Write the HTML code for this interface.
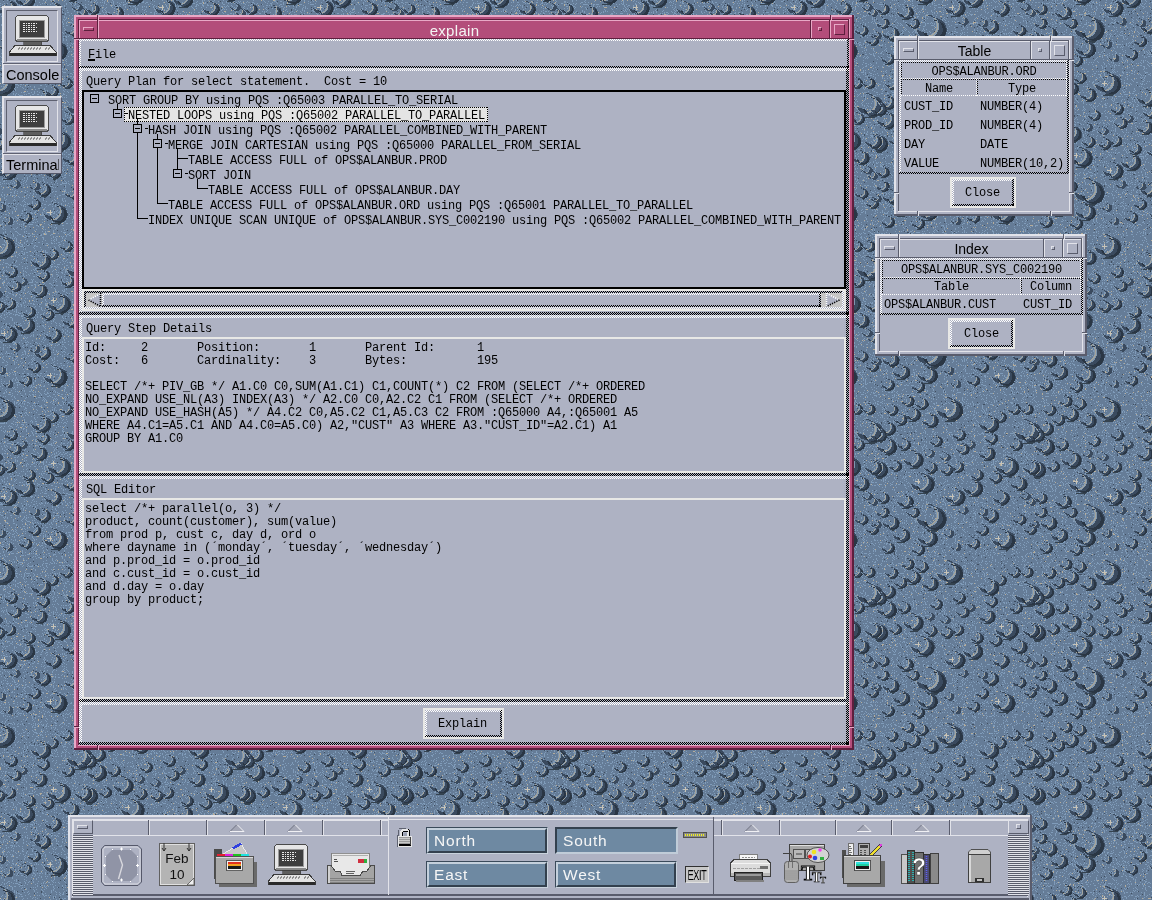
<!DOCTYPE html><html><head><meta charset="utf-8"><style>
*{margin:0;padding:0;box-sizing:border-box}
html,body{width:1152px;height:900px;overflow:hidden;background:#657C97}
body div{position:absolute}
.m{font-family:"Liberation Mono",monospace;font-size:12px;letter-spacing:-0.2px;line-height:13px;white-space:pre;color:#000;will-change:transform}
.s{font-family:"Liberation Sans",sans-serif;white-space:pre;color:#000;will-change:transform}
.hl{background-image:repeating-conic-gradient(#fff 0% 25%, transparent 0% 50%);background-size:2px 2px}
.hd{background-image:repeating-conic-gradient(#000 0% 25%, transparent 0% 50%);background-size:2px 2px}
.g{background:#AEB2C3}
</style></head><body><svg width="1152" height="900" style="position:absolute;left:0;top:0" shape-rendering="crispEdges"><defs><filter id="nz" x="0" y="0" width="100%" height="100%" color-interpolation-filters="sRGB"><feTurbulence type="fractalNoise" baseFrequency="0.9" numOctaves="1" seed="4" result="t"/><feColorMatrix in="t" type="matrix" values="0 0 0 0 0.50  0 0 0 0 0.61  0 0 0 0 0.73  6 0 0 0 -3.15"/><feComponentTransfer><feFuncA type="discrete" tableValues="0 1"/></feComponentTransfer></filter><filter id="nz2" x="0" y="0" width="100%" height="100%" color-interpolation-filters="sRGB"><feTurbulence type="fractalNoise" baseFrequency="0.45" numOctaves="2" seed="9" result="t"/><feColorMatrix in="t" type="matrix" values="0 0 0 0 0.71  0 0 0 0 0.68  0 0 0 0 0.61  0 8 0 0 -5.45"/><feComponentTransfer><feFuncA type="discrete" tableValues="0 1"/></feComponentTransfer></filter><filter id="nz3" x="0" y="0" width="100%" height="100%" color-interpolation-filters="sRGB"><feTurbulence type="fractalNoise" baseFrequency="0.7" numOctaves="1" seed="17" result="t"/><feColorMatrix in="t" type="matrix" values="0 0 0 0 0.25  0 0 0 0 0.31  0 0 0 0 0.38  0 0 6 0 -3.8"/><feComponentTransfer><feFuncA type="discrete" tableValues="0 1"/></feComponentTransfer></filter><pattern id="dr" x="880" y="560" width="158" height="163" patternUnits="userSpaceOnUse"><path d="M65.4 -0.1 L69.3 0.3 L72.8 2.1 L75.3 5.1 L76.6 8.8 L76.4 12.7 L74.8 16.3 L72.0 19.0 L68.4 20.5 L64.5 20.5 L60.8 19.1 L58.0 16.5 L56.3 13.0 L54.0 12.0 L55.7 15.5 L58.6 18.1 L62.2 19.5 L66.1 19.4 L69.7 18.0 L72.5 15.2 L74.1 11.7 L74.3 7.8 L73.0 4.1 L70.5 1.1 L67.0 -0.7 L63.1 -1.1Z" fill="#7F96AE"/><path d="M65.5 0.8 L69.1 1.1 L72.2 2.8 L74.6 5.5 L75.8 8.9 L75.6 12.5 L74.1 15.8 L71.6 18.3 L68.2 19.7 L64.6 19.7 L61.3 18.4 L58.6 16.0 L57.1 12.8 L55.9 12.3 L57.5 15.5 L60.1 17.9 L63.5 19.2 L67.1 19.1 L70.4 17.8 L73.0 15.3 L74.5 12.0 L74.6 8.4 L73.4 5.0 L71.1 2.3 L67.9 0.6 L64.3 0.2Z" fill="#A4A59E"/><path d="M72.2 3.0 L76.0 3.4 L79.5 5.2 L82.1 8.1 L83.4 11.8 L83.2 15.7 L81.6 19.3 L78.8 22.0 L75.2 23.5 L71.3 23.6 L67.6 22.2 L64.7 19.5 L63.0 16.0 L56.3 13.0 L58.0 16.5 L60.8 19.1 L64.5 20.5 L68.4 20.5 L72.0 19.0 L74.8 16.3 L76.4 12.7 L76.6 8.8 L75.3 5.1 L72.8 2.1 L69.3 0.3 L65.4 -0.1Z" fill="#3A4A5E"/><path d="M62.7 24.3 L78.3 21.7 L74.1 25.3 Z" fill="#34424F"/><path d="M73.3 5.6 L76.6 5.9 L79.6 7.4 L81.8 10.0 L82.9 13.1 L82.7 16.4 L81.3 19.4 L79.0 21.8 L75.9 23.0 L72.6 23.1 L69.5 21.9 L67.0 19.7 L65.6 16.7 L62.5 15.3 L63.9 18.3 L66.4 20.5 L69.5 21.7 L72.8 21.6 L75.9 20.4 L78.3 18.1 L79.6 15.0 L79.8 11.7 L78.7 8.6 L76.5 6.0 L73.5 4.5 L70.2 4.2Z" fill="#2A3644"/><path d="M65.4 162.9 L69.3 163.3 L72.8 165.1 L75.3 168.1 L76.6 171.8 L76.4 175.7 L74.8 179.3 L72.0 182.0 L68.4 183.5 L64.5 183.5 L60.8 182.1 L58.0 179.5 L56.3 176.0 L54.0 175.0 L55.7 178.5 L58.6 181.1 L62.2 182.5 L66.1 182.4 L69.7 181.0 L72.5 178.2 L74.1 174.7 L74.3 170.8 L73.0 167.1 L70.5 164.1 L67.0 162.3 L63.1 161.9Z" fill="#7F96AE"/><path d="M65.5 163.8 L69.1 164.1 L72.2 165.8 L74.6 168.5 L75.8 171.9 L75.6 175.5 L74.1 178.8 L71.6 181.3 L68.2 182.7 L64.6 182.7 L61.3 181.4 L58.6 179.0 L57.1 175.8 L55.9 175.3 L57.5 178.5 L60.1 180.9 L63.5 182.2 L67.1 182.1 L70.4 180.8 L73.0 178.3 L74.5 175.0 L74.6 171.4 L73.4 168.0 L71.1 165.3 L67.9 163.6 L64.3 163.2Z" fill="#A4A59E"/><path d="M72.2 166.0 L76.0 166.4 L79.5 168.2 L82.1 171.1 L83.4 174.8 L83.2 178.7 L81.6 182.3 L78.8 185.0 L75.2 186.5 L71.3 186.6 L67.6 185.2 L64.7 182.5 L63.0 179.0 L56.3 176.0 L58.0 179.5 L60.8 182.1 L64.5 183.5 L68.4 183.5 L72.0 182.0 L74.8 179.3 L76.4 175.7 L76.6 171.8 L75.3 168.1 L72.8 165.1 L69.3 163.3 L65.4 162.9Z" fill="#3A4A5E"/><path d="M62.7 187.3 L78.3 184.7 L74.1 188.3 Z" fill="#34424F"/><path d="M73.3 168.6 L76.6 168.9 L79.6 170.4 L81.8 173.0 L82.9 176.1 L82.7 179.4 L81.3 182.4 L79.0 184.8 L75.9 186.0 L72.6 186.1 L69.5 184.9 L67.0 182.7 L65.6 179.7 L62.5 178.3 L63.9 181.3 L66.4 183.5 L69.5 184.7 L72.8 184.6 L75.9 183.4 L78.3 181.1 L79.6 178.0 L79.8 174.7 L78.7 171.6 L76.5 169.0 L73.5 167.5 L70.2 167.2Z" fill="#2A3644"/><path d="M46.5 106.7 L50.8 107.1 L54.7 109.2 L57.6 112.5 L59.1 116.7 L58.9 121.1 L57.1 125.1 L53.9 128.1 L49.8 129.8 L45.5 129.9 L41.3 128.3 L38.1 125.3 L36.2 121.4 L33.6 120.2 L35.5 124.2 L38.8 127.2 L42.9 128.7 L47.3 128.7 L51.3 127.0 L54.5 123.9 L56.3 119.9 L56.5 115.5 L55.0 111.3 L52.2 108.0 L48.3 106.0 L43.9 105.5Z" fill="#7F96AE"/><path d="M46.5 107.6 L50.6 108.0 L54.2 109.9 L56.8 113.0 L58.1 116.8 L58.0 120.8 L56.3 124.5 L53.4 127.3 L49.7 128.9 L45.6 129.0 L41.8 127.5 L38.8 124.8 L37.1 121.1 L35.8 120.6 L37.6 124.2 L40.5 126.9 L44.3 128.4 L48.4 128.3 L52.1 126.8 L55.0 123.9 L56.7 120.3 L56.8 116.2 L55.5 112.4 L52.9 109.3 L49.3 107.5 L45.3 107.1Z" fill="#A4A59E"/><path d="M54.1 110.1 L58.4 110.6 L62.3 112.6 L65.2 115.9 L66.7 120.1 L66.5 124.5 L64.7 128.5 L61.5 131.6 L57.5 133.2 L53.1 133.3 L48.9 131.7 L45.7 128.8 L43.8 124.8 L36.2 121.4 L38.1 125.3 L41.3 128.3 L45.5 129.9 L49.8 129.8 L53.9 128.1 L57.1 125.1 L58.9 121.1 L59.1 116.7 L57.6 112.5 L54.7 109.2 L50.8 107.1 L46.5 106.7Z" fill="#3A4A5E"/><path d="M43.4 134.1 L60.9 131.1 L56.3 135.2 Z" fill="#34424F"/><path d="M55.4 113.0 L59.1 113.4 L62.4 115.1 L64.9 118.0 L66.1 121.5 L65.9 125.2 L64.4 128.7 L61.7 131.3 L58.3 132.7 L54.5 132.7 L51.0 131.4 L48.3 128.9 L46.7 125.5 L43.2 124.0 L44.8 127.3 L47.6 129.8 L51.1 131.2 L54.8 131.1 L58.2 129.7 L60.9 127.1 L62.5 123.7 L62.6 119.9 L61.4 116.4 L58.9 113.6 L55.6 111.9 L51.9 111.5Z" fill="#2A3644"/><path d="M-14.4 22.2 L-10.5 22.6 L-7.0 24.4 L-4.5 27.3 L-3.2 31.0 L-3.4 34.9 L-5.0 38.5 L-7.8 41.2 L-11.4 42.7 L-15.3 42.8 L-18.9 41.4 L-21.8 38.7 L-23.5 35.2 L-25.8 34.2 L-24.1 37.7 L-21.2 40.3 L-17.6 41.7 L-13.7 41.7 L-10.0 40.2 L-7.2 37.4 L-5.6 33.9 L-5.5 30.0 L-6.8 26.3 L-9.3 23.3 L-12.8 21.5 L-16.7 21.1Z" fill="#7F96AE"/><path d="M-14.3 23.0 L-10.7 23.3 L-7.5 25.0 L-5.2 27.7 L-4.0 31.1 L-4.2 34.7 L-5.6 38.0 L-8.2 40.5 L-11.5 41.9 L-15.1 41.9 L-18.5 40.7 L-21.1 38.2 L-22.7 35.0 L-23.9 34.5 L-22.3 37.7 L-19.6 40.1 L-16.3 41.4 L-12.7 41.4 L-9.4 40.0 L-6.8 37.5 L-5.3 34.2 L-5.2 30.6 L-6.3 27.2 L-8.7 24.5 L-11.9 22.8 L-15.5 22.5Z" fill="#A4A59E"/><path d="M-7.6 25.2 L-3.7 25.6 L-0.3 27.4 L2.3 30.4 L3.6 34.0 L3.4 38.0 L1.8 41.5 L-1.0 44.2 L-4.6 45.7 L-8.5 45.8 L-12.2 44.4 L-15.1 41.8 L-16.8 38.2 L-23.5 35.2 L-21.8 38.7 L-18.9 41.4 L-15.3 42.8 L-11.4 42.7 L-7.8 41.2 L-5.0 38.5 L-3.4 34.9 L-3.2 31.0 L-4.5 27.3 L-7.0 24.4 L-10.5 22.6 L-14.4 22.2Z" fill="#3A4A5E"/><path d="M-17.1 46.5 L-1.5 43.9 L-5.7 47.5 Z" fill="#34424F"/><path d="M-6.4 27.8 L-3.1 28.1 L-0.2 29.7 L2.0 32.2 L3.1 35.3 L2.9 38.6 L1.6 41.7 L-0.8 44.0 L-3.9 45.3 L-7.2 45.3 L-10.3 44.1 L-12.8 41.9 L-14.2 38.9 L-17.3 37.5 L-15.9 40.5 L-13.4 42.7 L-10.3 43.9 L-7.0 43.9 L-3.9 42.6 L-1.5 40.3 L-0.2 37.2 L-0.0 33.9 L-1.1 30.8 L-3.3 28.3 L-6.2 26.7 L-9.5 26.4Z" fill="#2A3644"/><path d="M143.6 22.2 L147.5 22.6 L151.0 24.4 L153.5 27.3 L154.8 31.0 L154.6 34.9 L153.0 38.5 L150.2 41.2 L146.6 42.7 L142.7 42.8 L139.1 41.4 L136.2 38.7 L134.5 35.2 L132.2 34.2 L133.9 37.7 L136.8 40.3 L140.4 41.7 L144.3 41.7 L148.0 40.2 L150.8 37.4 L152.4 33.9 L152.5 30.0 L151.2 26.3 L148.7 23.3 L145.2 21.5 L141.3 21.1Z" fill="#7F96AE"/><path d="M143.7 23.0 L147.3 23.3 L150.5 25.0 L152.8 27.7 L154.0 31.1 L153.8 34.7 L152.4 38.0 L149.8 40.5 L146.5 41.9 L142.9 41.9 L139.5 40.7 L136.9 38.2 L135.3 35.0 L134.1 34.5 L135.7 37.7 L138.4 40.1 L141.7 41.4 L145.3 41.4 L148.6 40.0 L151.2 37.5 L152.7 34.2 L152.8 30.6 L151.7 27.2 L149.3 24.5 L146.1 22.8 L142.5 22.5Z" fill="#A4A59E"/><path d="M150.4 25.2 L154.3 25.6 L157.7 27.4 L160.3 30.4 L161.6 34.0 L161.4 38.0 L159.8 41.5 L157.0 44.2 L153.4 45.7 L149.5 45.8 L145.8 44.4 L142.9 41.8 L141.2 38.2 L134.5 35.2 L136.2 38.7 L139.1 41.4 L142.7 42.8 L146.6 42.7 L150.2 41.2 L153.0 38.5 L154.6 34.9 L154.8 31.0 L153.5 27.3 L151.0 24.4 L147.5 22.6 L143.6 22.2Z" fill="#3A4A5E"/><path d="M140.9 46.5 L156.5 43.9 L152.3 47.5 Z" fill="#34424F"/><path d="M151.6 27.8 L154.9 28.1 L157.8 29.7 L160.0 32.2 L161.1 35.3 L160.9 38.6 L159.6 41.7 L157.2 44.0 L154.1 45.3 L150.8 45.3 L147.7 44.1 L145.2 41.9 L143.8 38.9 L140.7 37.5 L142.1 40.5 L144.6 42.7 L147.7 43.9 L151.0 43.9 L154.1 42.6 L156.5 40.3 L157.8 37.2 L158.0 33.9 L156.9 30.8 L154.7 28.3 L151.8 26.7 L148.5 26.4Z" fill="#2A3644"/><path d="M123.4 58.5 L126.9 58.8 L129.9 60.4 L132.1 63.0 L133.2 66.2 L133.1 69.7 L131.7 72.8 L129.2 75.2 L126.1 76.5 L122.7 76.5 L119.5 75.3 L116.9 73.0 L115.5 69.9 L113.4 69.0 L114.9 72.1 L117.5 74.4 L120.7 75.6 L124.1 75.6 L127.2 74.3 L129.7 71.9 L131.1 68.8 L131.2 65.3 L130.1 62.1 L127.9 59.5 L124.8 57.9 L121.4 57.6Z" fill="#7F96AE"/><path d="M123.5 59.2 L126.6 59.5 L129.4 61.0 L131.5 63.4 L132.5 66.3 L132.4 69.5 L131.1 72.4 L128.8 74.6 L125.9 75.8 L122.8 75.8 L119.8 74.7 L117.5 72.6 L116.2 69.7 L115.1 69.3 L116.5 72.1 L118.8 74.2 L121.8 75.4 L124.9 75.3 L127.8 74.1 L130.1 71.9 L131.4 69.0 L131.5 65.9 L130.5 62.9 L128.4 60.5 L125.6 59.1 L122.5 58.8Z" fill="#A4A59E"/><path d="M129.4 61.2 L132.8 61.5 L135.8 63.1 L138.0 65.7 L139.2 68.9 L139.0 72.3 L137.6 75.4 L135.2 77.8 L132.0 79.1 L128.6 79.2 L125.4 78.0 L122.9 75.7 L121.4 72.6 L115.5 69.9 L116.9 73.0 L119.5 75.3 L122.7 76.5 L126.1 76.5 L129.2 75.2 L131.7 72.8 L133.1 69.7 L133.2 66.2 L132.1 63.0 L129.9 60.4 L126.9 58.8 L123.4 58.5Z" fill="#3A4A5E"/><path d="M121.1 79.8 L134.7 77.5 L131.1 80.7 Z" fill="#34424F"/><path d="M130.4 63.4 L133.3 63.7 L135.9 65.1 L137.8 67.3 L138.7 70.0 L138.6 72.9 L137.4 75.6 L135.3 77.6 L132.6 78.7 L129.7 78.7 L127.0 77.7 L124.9 75.8 L123.6 73.1 L120.9 71.9 L122.2 74.5 L124.3 76.5 L127.0 77.5 L129.9 77.5 L132.6 76.4 L134.7 74.4 L135.9 71.7 L136.0 68.8 L135.1 66.0 L133.2 63.8 L130.6 62.5 L127.7 62.2Z" fill="#2A3644"/><path d="M39.0 75.4 L42.4 75.7 L45.4 77.3 L47.7 79.9 L48.8 83.1 L48.7 86.5 L47.3 89.7 L44.8 92.1 L41.6 93.4 L38.2 93.4 L35.0 92.2 L32.5 89.9 L31.0 86.8 L29.0 85.9 L30.5 89.0 L33.0 91.3 L36.2 92.5 L39.6 92.5 L42.8 91.2 L45.2 88.8 L46.6 85.6 L46.8 82.2 L45.7 79.0 L43.4 76.4 L40.4 74.8 L37.0 74.5Z" fill="#7F96AE"/><path d="M39.1 76.1 L42.2 76.4 L45.0 77.9 L47.0 80.3 L48.1 83.2 L47.9 86.4 L46.7 89.3 L44.4 91.4 L41.5 92.6 L38.3 92.7 L35.4 91.6 L33.1 89.4 L31.7 86.6 L30.7 86.2 L32.1 89.0 L34.4 91.1 L37.3 92.2 L40.5 92.2 L43.4 91.0 L45.6 88.8 L46.9 85.9 L47.1 82.8 L46.0 79.8 L44.0 77.4 L41.2 76.0 L38.1 75.7Z" fill="#A4A59E"/><path d="M44.9 78.0 L48.3 78.4 L51.4 80.0 L53.6 82.6 L54.7 85.8 L54.6 89.2 L53.2 92.3 L50.7 94.7 L47.6 96.0 L44.1 96.1 L40.9 94.9 L38.4 92.5 L36.9 89.5 L31.0 86.8 L32.5 89.9 L35.0 92.2 L38.2 93.4 L41.6 93.4 L44.8 92.1 L47.3 89.7 L48.7 86.5 L48.8 83.1 L47.7 79.9 L45.4 77.3 L42.4 75.7 L39.0 75.4Z" fill="#3A4A5E"/><path d="M36.6 96.7 L50.3 94.4 L46.6 97.6 Z" fill="#34424F"/><path d="M45.9 80.3 L48.8 80.6 L51.4 82.0 L53.3 84.2 L54.3 86.9 L54.1 89.8 L53.0 92.5 L50.9 94.5 L48.2 95.6 L45.3 95.6 L42.6 94.6 L40.4 92.6 L39.1 90.0 L36.4 88.8 L37.7 91.4 L39.9 93.4 L42.6 94.4 L45.5 94.4 L48.2 93.3 L50.3 91.2 L51.4 88.6 L51.6 85.7 L50.6 82.9 L48.7 80.7 L46.1 79.4 L43.2 79.1Z" fill="#2A3644"/><path d="M72.2 90.4 L75.1 90.7 L77.7 92.0 L79.6 94.3 L80.6 97.0 L80.4 100.0 L79.2 102.6 L77.1 104.7 L74.4 105.8 L71.5 105.8 L68.7 104.8 L66.6 102.8 L65.3 100.2 L63.6 99.4 L64.9 102.0 L67.0 104.0 L69.8 105.1 L72.7 105.0 L75.4 103.9 L77.5 101.9 L78.7 99.2 L78.8 96.3 L77.9 93.5 L76.0 91.3 L73.4 89.9 L70.4 89.6Z" fill="#7F96AE"/><path d="M72.2 91.0 L74.9 91.3 L77.3 92.5 L79.1 94.6 L79.9 97.1 L79.8 99.8 L78.7 102.3 L76.8 104.2 L74.3 105.2 L71.6 105.2 L69.1 104.3 L67.1 102.4 L65.9 100.0 L65.0 99.6 L66.2 102.1 L68.2 103.9 L70.7 104.8 L73.4 104.8 L75.9 103.8 L77.9 101.9 L79.0 99.4 L79.1 96.7 L78.2 94.2 L76.4 92.1 L74.0 90.9 L71.4 90.6Z" fill="#A4A59E"/><path d="M77.2 92.7 L80.1 93.0 L82.7 94.3 L84.7 96.5 L85.6 99.3 L85.5 102.2 L84.3 104.9 L82.2 107.0 L79.5 108.1 L76.6 108.1 L73.8 107.1 L71.7 105.1 L70.4 102.5 L65.3 100.2 L66.6 102.8 L68.7 104.8 L71.5 105.8 L74.4 105.8 L77.1 104.7 L79.2 102.6 L80.4 100.0 L80.6 97.0 L79.6 94.3 L77.7 92.0 L75.1 90.7 L72.2 90.4Z" fill="#3A4A5E"/><path d="M70.1 108.6 L81.8 106.7 L78.7 109.4 Z" fill="#34424F"/><path d="M78.1 94.6 L80.6 94.9 L82.8 96.0 L84.4 97.9 L85.3 100.3 L85.1 102.8 L84.1 105.0 L82.3 106.8 L80.0 107.7 L77.5 107.8 L75.2 106.9 L73.4 105.2 L72.3 102.9 L70.0 101.9 L71.1 104.1 L72.9 105.8 L75.2 106.7 L77.7 106.7 L80.0 105.7 L81.8 104.0 L82.8 101.7 L82.9 99.2 L82.1 96.9 L80.5 95.0 L78.3 93.8 L75.8 93.6Z" fill="#2A3644"/><path d="M119.9 131.4 L123.3 131.7 L126.3 133.3 L128.6 135.9 L129.7 139.1 L129.5 142.5 L128.1 145.7 L125.7 148.1 L122.5 149.4 L119.1 149.4 L115.9 148.2 L113.4 145.9 L111.9 142.8 L109.9 141.9 L111.4 145.0 L113.9 147.3 L117.1 148.5 L120.5 148.5 L123.7 147.2 L126.1 144.8 L127.5 141.6 L127.7 138.2 L126.6 135.0 L124.3 132.4 L121.3 130.8 L117.9 130.5Z" fill="#7F96AE"/><path d="M120.0 132.1 L123.1 132.4 L125.9 133.9 L127.9 136.3 L129.0 139.2 L128.8 142.4 L127.5 145.3 L125.3 147.4 L122.4 148.6 L119.2 148.7 L116.3 147.6 L114.0 145.4 L112.6 142.6 L111.6 142.2 L113.0 145.0 L115.3 147.1 L118.2 148.2 L121.4 148.2 L124.3 147.0 L126.5 144.8 L127.8 141.9 L128.0 138.8 L126.9 135.8 L124.9 133.4 L122.1 132.0 L119.0 131.7Z" fill="#A4A59E"/><path d="M125.8 134.0 L129.2 134.4 L132.2 136.0 L134.5 138.6 L135.6 141.8 L135.5 145.2 L134.1 148.3 L131.6 150.7 L128.4 152.0 L125.0 152.1 L121.8 150.9 L119.3 148.5 L117.8 145.5 L111.9 142.8 L113.4 145.9 L115.9 148.2 L119.1 149.4 L122.5 149.4 L125.7 148.1 L128.1 145.7 L129.5 142.5 L129.7 139.1 L128.6 135.9 L126.3 133.3 L123.3 131.7 L119.9 131.4Z" fill="#3A4A5E"/><path d="M117.5 152.7 L131.2 150.4 L127.5 153.6 Z" fill="#34424F"/><path d="M126.8 136.3 L129.7 136.6 L132.3 138.0 L134.2 140.2 L135.2 142.9 L135.0 145.8 L133.8 148.5 L131.8 150.5 L129.1 151.6 L126.2 151.6 L123.4 150.6 L121.3 148.6 L120.0 146.0 L117.3 144.8 L118.6 147.4 L120.7 149.4 L123.5 150.4 L126.4 150.4 L129.1 149.3 L131.1 147.2 L132.3 144.6 L132.5 141.7 L131.5 138.9 L129.6 136.7 L127.0 135.4 L124.1 135.1Z" fill="#2A3644"/><path d="M44.6 131.3 L47.5 131.6 L50.1 132.9 L52.0 135.2 L53.0 137.9 L52.9 140.9 L51.7 143.5 L49.6 145.6 L46.9 146.7 L43.9 146.7 L41.2 145.7 L39.0 143.7 L37.8 141.1 L36.0 140.3 L37.3 142.9 L39.5 144.9 L42.2 146.0 L45.1 145.9 L47.9 144.8 L50.0 142.8 L51.2 140.1 L51.3 137.1 L50.3 134.4 L48.4 132.2 L45.8 130.8 L42.9 130.5Z" fill="#7F96AE"/><path d="M44.7 131.9 L47.3 132.2 L49.7 133.4 L51.5 135.5 L52.4 138.0 L52.3 140.7 L51.2 143.2 L49.2 145.0 L46.7 146.1 L44.0 146.1 L41.5 145.2 L39.5 143.3 L38.4 140.9 L37.5 140.5 L38.7 142.9 L40.7 144.8 L43.2 145.7 L45.9 145.7 L48.4 144.7 L50.3 142.8 L51.4 140.3 L51.5 137.6 L50.6 135.1 L48.9 133.0 L46.5 131.8 L43.8 131.5Z" fill="#A4A59E"/><path d="M49.7 133.6 L52.6 133.9 L55.2 135.2 L57.1 137.4 L58.1 140.2 L57.9 143.1 L56.7 145.8 L54.6 147.9 L51.9 149.0 L49.0 149.0 L46.3 148.0 L44.1 146.0 L42.8 143.4 L37.8 141.1 L39.0 143.7 L41.2 145.7 L43.9 146.7 L46.9 146.7 L49.6 145.6 L51.7 143.5 L52.9 140.9 L53.0 137.9 L52.0 135.2 L50.1 132.9 L47.5 131.6 L44.6 131.3Z" fill="#3A4A5E"/><path d="M42.6 149.5 L54.3 147.6 L51.1 150.3 Z" fill="#34424F"/><path d="M50.6 135.5 L53.0 135.8 L55.2 136.9 L56.9 138.8 L57.7 141.2 L57.6 143.6 L56.6 145.9 L54.8 147.7 L52.5 148.6 L50.0 148.6 L47.7 147.8 L45.8 146.1 L44.7 143.8 L42.4 142.8 L43.5 145.0 L45.3 146.7 L47.7 147.6 L50.2 147.6 L52.5 146.6 L54.2 144.9 L55.3 142.6 L55.4 140.1 L54.6 137.8 L52.9 135.9 L50.7 134.7 L48.2 134.5Z" fill="#2A3644"/><path d="M105.9 17.5 L108.9 17.8 L111.5 19.2 L113.4 21.4 L114.3 24.1 L114.2 27.1 L113.0 29.7 L110.9 31.8 L108.2 32.9 L105.3 33.0 L102.5 31.9 L100.4 29.9 L99.1 27.3 L97.4 26.5 L98.6 29.2 L100.8 31.1 L103.5 32.2 L106.5 32.1 L109.2 31.0 L111.3 29.0 L112.5 26.3 L112.6 23.4 L111.7 20.6 L109.7 18.4 L107.1 17.0 L104.2 16.7Z" fill="#7F96AE"/><path d="M106.0 18.1 L108.7 18.4 L111.1 19.6 L112.8 21.7 L113.7 24.2 L113.6 26.9 L112.5 29.4 L110.6 31.3 L108.1 32.3 L105.4 32.3 L102.9 31.4 L100.9 29.6 L99.7 27.1 L98.8 26.7 L100.0 29.2 L102.0 31.0 L104.5 32.0 L107.2 31.9 L109.7 30.9 L111.6 29.0 L112.7 26.5 L112.9 23.8 L112.0 21.3 L110.2 19.3 L107.8 18.0 L105.1 17.7Z" fill="#A4A59E"/><path d="M111.0 19.8 L113.9 20.1 L116.5 21.4 L118.4 23.7 L119.4 26.4 L119.3 29.4 L118.1 32.0 L116.0 34.1 L113.3 35.2 L110.3 35.2 L107.6 34.2 L105.4 32.2 L104.2 29.6 L99.1 27.3 L100.4 29.9 L102.5 31.9 L105.3 33.0 L108.2 32.9 L110.9 31.8 L113.0 29.7 L114.2 27.1 L114.3 24.1 L113.4 21.4 L111.5 19.2 L108.9 17.8 L105.9 17.5Z" fill="#3A4A5E"/><path d="M103.9 35.7 L115.6 33.8 L112.5 36.5 Z" fill="#34424F"/><path d="M111.9 21.7 L114.4 22.0 L116.6 23.1 L118.2 25.0 L119.0 27.4 L118.9 29.9 L117.9 32.1 L116.1 33.9 L113.8 34.8 L111.3 34.9 L109.0 34.0 L107.2 32.3 L106.1 30.1 L103.7 29.0 L104.8 31.3 L106.7 32.9 L109.0 33.8 L111.5 33.8 L113.8 32.8 L115.6 31.1 L116.6 28.8 L116.7 26.3 L115.9 24.0 L114.3 22.1 L112.0 20.9 L109.6 20.7Z" fill="#2A3644"/><path d="M30.4 53.1 L33.3 53.4 L35.9 54.7 L37.8 56.9 L38.8 59.7 L38.7 62.6 L37.5 65.3 L35.3 67.3 L32.6 68.5 L29.7 68.5 L27.0 67.5 L24.8 65.5 L23.5 62.8 L21.8 62.1 L23.1 64.7 L25.3 66.7 L28.0 67.7 L30.9 67.7 L33.6 66.6 L35.7 64.5 L36.9 61.9 L37.1 58.9 L36.1 56.2 L34.2 53.9 L31.6 52.6 L28.7 52.3Z" fill="#7F96AE"/><path d="M30.4 53.7 L33.1 54.0 L35.5 55.2 L37.3 57.2 L38.2 59.8 L38.0 62.5 L36.9 64.9 L35.0 66.8 L32.5 67.9 L29.8 67.9 L27.3 66.9 L25.3 65.1 L24.1 62.7 L23.3 62.3 L24.4 64.7 L26.4 66.5 L29.0 67.5 L31.7 67.5 L34.1 66.4 L36.1 64.6 L37.2 62.1 L37.3 59.4 L36.4 56.9 L34.7 54.8 L32.3 53.6 L29.6 53.3Z" fill="#A4A59E"/><path d="M35.5 55.3 L38.4 55.6 L41.0 57.0 L42.9 59.2 L43.9 62.0 L43.7 64.9 L42.5 67.6 L40.4 69.6 L37.7 70.7 L34.8 70.8 L32.0 69.7 L29.9 67.8 L28.6 65.1 L23.5 62.8 L24.8 65.5 L27.0 67.5 L29.7 68.5 L32.6 68.5 L35.3 67.3 L37.5 65.3 L38.7 62.6 L38.8 59.7 L37.8 56.9 L35.9 54.7 L33.3 53.4 L30.4 53.1Z" fill="#3A4A5E"/><path d="M28.3 71.3 L40.0 69.4 L36.9 72.1 Z" fill="#34424F"/><path d="M36.3 57.3 L38.8 57.5 L41.0 58.7 L42.7 60.6 L43.5 62.9 L43.4 65.4 L42.3 67.7 L40.6 69.4 L38.3 70.4 L35.8 70.4 L33.4 69.5 L31.6 67.9 L30.5 65.6 L28.2 64.6 L29.3 66.8 L31.1 68.5 L33.4 69.4 L35.9 69.3 L38.2 68.4 L40.0 66.6 L41.0 64.4 L41.2 61.9 L40.3 59.5 L38.7 57.6 L36.5 56.5 L34.0 56.2Z" fill="#2A3644"/><path d="M3.7 39.7 L6.6 40.0 L9.2 41.4 L11.2 43.6 L12.1 46.4 L12.0 49.3 L10.8 52.0 L8.7 54.0 L6.0 55.1 L3.0 55.2 L0.3 54.1 L-1.9 52.2 L-3.1 49.5 L-4.9 48.7 L-3.6 51.4 L-1.4 53.4 L1.3 54.4 L4.3 54.4 L7.0 53.2 L9.1 51.2 L10.3 48.5 L10.4 45.6 L9.4 42.8 L7.5 40.6 L4.9 39.3 L2.0 39.0Z" fill="#7F96AE"/><path d="M3.8 40.3 L6.5 40.6 L8.8 41.9 L10.6 43.9 L11.5 46.5 L11.4 49.2 L10.3 51.6 L8.3 53.5 L5.8 54.5 L3.2 54.6 L0.6 53.6 L-1.4 51.8 L-2.5 49.4 L-3.4 49.0 L-2.2 51.4 L-0.2 53.2 L2.3 54.2 L5.0 54.1 L7.5 53.1 L9.4 51.2 L10.5 48.8 L10.6 46.1 L9.8 43.5 L8.0 41.5 L5.6 40.2 L2.9 40.0Z" fill="#A4A59E"/><path d="M8.8 42.0 L11.7 42.3 L14.3 43.7 L16.2 45.9 L17.2 48.6 L17.1 51.6 L15.9 54.3 L13.8 56.3 L11.0 57.4 L8.1 57.5 L5.4 56.4 L3.2 54.4 L1.9 51.8 L-3.1 49.5 L-1.9 52.2 L0.3 54.1 L3.0 55.2 L6.0 55.1 L8.7 54.0 L10.8 52.0 L12.0 49.3 L12.1 46.4 L11.2 43.6 L9.2 41.4 L6.6 40.0 L3.7 39.7Z" fill="#3A4A5E"/><path d="M1.7 58.0 L13.4 56.0 L10.2 58.7 Z" fill="#34424F"/><path d="M9.7 44.0 L12.1 44.2 L14.4 45.4 L16.0 47.2 L16.8 49.6 L16.7 52.1 L15.7 54.4 L13.9 56.1 L11.6 57.1 L9.1 57.1 L6.8 56.2 L4.9 54.5 L3.8 52.3 L1.5 51.2 L2.6 53.5 L4.4 55.2 L6.8 56.0 L9.3 56.0 L11.6 55.1 L13.4 53.3 L14.4 51.0 L14.5 48.6 L13.7 46.2 L12.0 44.3 L9.8 43.2 L7.3 42.9Z" fill="#2A3644"/><path d="M161.7 39.7 L164.6 40.0 L167.2 41.4 L169.2 43.6 L170.1 46.4 L170.0 49.3 L168.8 52.0 L166.7 54.0 L164.0 55.1 L161.0 55.2 L158.3 54.1 L156.1 52.2 L154.9 49.5 L153.1 48.7 L154.4 51.4 L156.6 53.4 L159.3 54.4 L162.3 54.4 L165.0 53.2 L167.1 51.2 L168.3 48.5 L168.4 45.6 L167.4 42.8 L165.5 40.6 L162.9 39.3 L160.0 39.0Z" fill="#7F96AE"/><path d="M161.8 40.3 L164.5 40.6 L166.8 41.9 L168.6 43.9 L169.5 46.5 L169.4 49.2 L168.3 51.6 L166.3 53.5 L163.8 54.5 L161.2 54.6 L158.6 53.6 L156.6 51.8 L155.5 49.4 L154.6 49.0 L155.8 51.4 L157.8 53.2 L160.3 54.2 L163.0 54.1 L165.5 53.1 L167.4 51.2 L168.5 48.8 L168.6 46.1 L167.8 43.5 L166.0 41.5 L163.6 40.2 L160.9 40.0Z" fill="#A4A59E"/><path d="M166.8 42.0 L169.7 42.3 L172.3 43.7 L174.2 45.9 L175.2 48.6 L175.1 51.6 L173.9 54.3 L171.8 56.3 L169.0 57.4 L166.1 57.5 L163.4 56.4 L161.2 54.4 L159.9 51.8 L154.9 49.5 L156.1 52.2 L158.3 54.1 L161.0 55.2 L164.0 55.1 L166.7 54.0 L168.8 52.0 L170.0 49.3 L170.1 46.4 L169.2 43.6 L167.2 41.4 L164.6 40.0 L161.7 39.7Z" fill="#3A4A5E"/><path d="M159.7 58.0 L171.4 56.0 L168.2 58.7 Z" fill="#34424F"/><path d="M167.7 44.0 L170.1 44.2 L172.4 45.4 L174.0 47.2 L174.8 49.6 L174.7 52.1 L173.7 54.4 L171.9 56.1 L169.6 57.1 L167.1 57.1 L164.8 56.2 L162.9 54.5 L161.8 52.3 L159.5 51.2 L160.6 53.5 L162.4 55.2 L164.8 56.0 L167.3 56.0 L169.6 55.1 L171.4 53.3 L172.4 51.0 L172.5 48.6 L171.7 46.2 L170.0 44.3 L167.8 43.2 L165.3 42.9Z" fill="#2A3644"/><path d="M-5.2 62.8 L-2.3 63.1 L0.3 64.5 L2.3 66.7 L3.2 69.5 L3.1 72.4 L1.9 75.1 L-0.2 77.1 L-2.9 78.2 L-5.8 78.3 L-8.6 77.2 L-10.7 75.3 L-12.0 72.6 L-13.7 71.9 L-12.5 74.5 L-10.3 76.5 L-7.6 77.5 L-4.6 77.5 L-1.9 76.4 L0.2 74.3 L1.4 71.6 L1.5 68.7 L0.5 65.9 L-1.4 63.7 L-4.0 62.4 L-6.9 62.1Z" fill="#7F96AE"/><path d="M-5.1 63.5 L-2.4 63.7 L-0.0 65.0 L1.7 67.0 L2.6 69.6 L2.5 72.3 L1.4 74.7 L-0.5 76.6 L-3.0 77.6 L-5.7 77.7 L-8.3 76.7 L-10.2 74.9 L-11.4 72.5 L-12.3 72.1 L-11.1 74.5 L-9.1 76.3 L-6.6 77.3 L-3.9 77.2 L-1.4 76.2 L0.5 74.3 L1.6 71.9 L1.7 69.2 L0.9 66.6 L-0.9 64.6 L-3.3 63.3 L-6.0 63.1Z" fill="#A4A59E"/><path d="M-0.1 65.1 L2.8 65.4 L5.4 66.8 L7.3 69.0 L8.3 71.8 L8.2 74.7 L7.0 77.4 L4.9 79.4 L2.2 80.5 L-0.8 80.6 L-3.5 79.5 L-5.7 77.5 L-7.0 74.9 L-12.0 72.6 L-10.7 75.3 L-8.6 77.2 L-5.8 78.3 L-2.9 78.2 L-0.2 77.1 L1.9 75.1 L3.1 72.4 L3.2 69.5 L2.3 66.7 L0.3 64.5 L-2.3 63.1 L-5.2 62.8Z" fill="#3A4A5E"/><path d="M-7.2 81.1 L4.5 79.1 L1.4 81.9 Z" fill="#34424F"/><path d="M0.8 67.1 L3.3 67.3 L5.5 68.5 L7.1 70.4 L7.9 72.7 L7.8 75.2 L6.8 77.5 L5.0 79.2 L2.7 80.2 L0.2 80.2 L-2.1 79.3 L-4.0 77.6 L-5.0 75.4 L-7.4 74.3 L-6.3 76.6 L-4.4 78.3 L-2.1 79.2 L0.4 79.1 L2.7 78.2 L4.5 76.4 L5.5 74.2 L5.6 71.7 L4.8 69.3 L3.1 67.4 L0.9 66.3 L-1.5 66.0Z" fill="#2A3644"/><path d="M152.8 62.8 L155.7 63.1 L158.3 64.5 L160.3 66.7 L161.2 69.5 L161.1 72.4 L159.9 75.1 L157.8 77.1 L155.1 78.2 L152.2 78.3 L149.4 77.2 L147.3 75.3 L146.0 72.6 L144.3 71.9 L145.5 74.5 L147.7 76.5 L150.4 77.5 L153.4 77.5 L156.1 76.4 L158.2 74.3 L159.4 71.6 L159.5 68.7 L158.5 65.9 L156.6 63.7 L154.0 62.4 L151.1 62.1Z" fill="#7F96AE"/><path d="M152.9 63.5 L155.6 63.7 L158.0 65.0 L159.7 67.0 L160.6 69.6 L160.5 72.3 L159.4 74.7 L157.5 76.6 L155.0 77.6 L152.3 77.7 L149.7 76.7 L147.8 74.9 L146.6 72.5 L145.7 72.1 L146.9 74.5 L148.9 76.3 L151.4 77.3 L154.1 77.2 L156.6 76.2 L158.5 74.3 L159.6 71.9 L159.7 69.2 L158.9 66.6 L157.1 64.6 L154.7 63.3 L152.0 63.1Z" fill="#A4A59E"/><path d="M157.9 65.1 L160.8 65.4 L163.4 66.8 L165.3 69.0 L166.3 71.8 L166.2 74.7 L165.0 77.4 L162.9 79.4 L160.2 80.5 L157.2 80.6 L154.5 79.5 L152.3 77.5 L151.0 74.9 L146.0 72.6 L147.3 75.3 L149.4 77.2 L152.2 78.3 L155.1 78.2 L157.8 77.1 L159.9 75.1 L161.1 72.4 L161.2 69.5 L160.3 66.7 L158.3 64.5 L155.7 63.1 L152.8 62.8Z" fill="#3A4A5E"/><path d="M150.8 81.1 L162.5 79.1 L159.4 81.9 Z" fill="#34424F"/><path d="M158.8 67.1 L161.3 67.3 L163.5 68.5 L165.1 70.4 L165.9 72.7 L165.8 75.2 L164.8 77.5 L163.0 79.2 L160.7 80.2 L158.2 80.2 L155.9 79.3 L154.0 77.6 L153.0 75.4 L150.6 74.3 L151.7 76.6 L153.6 78.3 L155.9 79.2 L158.4 79.1 L160.7 78.2 L162.5 76.4 L163.5 74.2 L163.6 71.7 L162.8 69.3 L161.1 67.4 L158.9 66.3 L156.5 66.0Z" fill="#2A3644"/><path d="M-4.0 29.8 L-1.6 30.1 L0.6 31.2 L2.2 33.1 L3.0 35.4 L2.9 37.8 L1.9 40.0 L0.1 41.8 L-2.1 42.7 L-4.6 42.7 L-6.9 41.9 L-8.7 40.2 L-9.7 38.0 L-11.2 37.4 L-10.1 39.6 L-8.3 41.2 L-6.0 42.1 L-3.6 42.0 L-1.3 41.1 L0.4 39.4 L1.4 37.2 L1.6 34.7 L0.8 32.4 L-0.8 30.6 L-3.0 29.5 L-5.4 29.2Z" fill="#7F96AE"/><path d="M-4.0 30.4 L-1.7 30.6 L0.3 31.6 L1.7 33.3 L2.5 35.5 L2.4 37.7 L1.5 39.8 L-0.2 41.3 L-2.2 42.2 L-4.5 42.2 L-6.6 41.4 L-8.2 39.9 L-9.2 37.9 L-9.9 37.5 L-9.0 39.6 L-7.3 41.1 L-5.2 41.9 L-3.0 41.9 L-0.9 41.0 L0.7 39.4 L1.7 37.4 L1.8 35.1 L1.0 33.0 L-0.5 31.3 L-2.4 30.3 L-4.7 30.0Z" fill="#A4A59E"/><path d="M0.2 31.7 L2.6 32.0 L4.8 33.1 L6.4 35.0 L7.2 37.3 L7.1 39.7 L6.1 42.0 L4.3 43.7 L2.1 44.6 L-0.4 44.6 L-2.6 43.8 L-4.4 42.1 L-5.5 39.9 L-9.7 38.0 L-8.7 40.2 L-6.9 41.9 L-4.6 42.7 L-2.1 42.7 L0.1 41.8 L1.9 40.0 L2.9 37.8 L3.0 35.4 L2.2 33.1 L0.6 31.2 L-1.6 30.1 L-4.0 29.8Z" fill="#3A4A5E"/><path d="M-5.7 45.0 L4.0 43.4 L1.4 45.7 Z" fill="#34424F"/><path d="M0.9 33.4 L3.0 33.6 L4.9 34.5 L6.2 36.1 L6.9 38.1 L6.8 40.1 L6.0 42.0 L4.5 43.5 L2.5 44.3 L0.5 44.3 L-1.5 43.6 L-3.0 42.2 L-3.9 40.3 L-5.8 39.4 L-4.9 41.3 L-3.4 42.7 L-1.5 43.4 L0.6 43.4 L2.5 42.6 L4.0 41.2 L4.9 39.3 L5.0 37.2 L4.3 35.2 L2.9 33.7 L1.1 32.7 L-1.0 32.5Z" fill="#2A3644"/><path d="M154.0 29.8 L156.4 30.1 L158.6 31.2 L160.2 33.1 L161.0 35.4 L160.9 37.8 L159.9 40.0 L158.1 41.8 L155.9 42.7 L153.4 42.7 L151.1 41.9 L149.3 40.2 L148.3 38.0 L146.8 37.4 L147.9 39.6 L149.7 41.2 L152.0 42.1 L154.4 42.0 L156.7 41.1 L158.4 39.4 L159.4 37.2 L159.6 34.7 L158.8 32.4 L157.2 30.6 L155.0 29.5 L152.6 29.2Z" fill="#7F96AE"/><path d="M154.0 30.4 L156.3 30.6 L158.3 31.6 L159.7 33.3 L160.5 35.5 L160.4 37.7 L159.5 39.8 L157.8 41.3 L155.8 42.2 L153.5 42.2 L151.4 41.4 L149.8 39.9 L148.8 37.9 L148.1 37.5 L149.0 39.6 L150.7 41.1 L152.8 41.9 L155.0 41.9 L157.1 41.0 L158.7 39.4 L159.7 37.4 L159.8 35.1 L159.0 33.0 L157.5 31.3 L155.6 30.3 L153.3 30.0Z" fill="#A4A59E"/><path d="M158.2 31.7 L160.6 32.0 L162.8 33.1 L164.4 35.0 L165.2 37.3 L165.1 39.7 L164.1 42.0 L162.3 43.7 L160.1 44.6 L157.6 44.6 L155.4 43.8 L153.6 42.1 L152.5 39.9 L148.3 38.0 L149.3 40.2 L151.1 41.9 L153.4 42.7 L155.9 42.7 L158.1 41.8 L159.9 40.0 L160.9 37.8 L161.0 35.4 L160.2 33.1 L158.6 31.2 L156.4 30.1 L154.0 29.8Z" fill="#3A4A5E"/><path d="M152.3 45.0 L162.0 43.4 L159.4 45.7 Z" fill="#34424F"/><path d="M158.9 33.4 L161.0 33.6 L162.9 34.5 L164.2 36.1 L164.9 38.1 L164.8 40.1 L164.0 42.0 L162.5 43.5 L160.5 44.3 L158.5 44.3 L156.5 43.6 L155.0 42.2 L154.1 40.3 L152.2 39.4 L153.1 41.3 L154.6 42.7 L156.5 43.4 L158.6 43.4 L160.5 42.6 L162.0 41.2 L162.9 39.3 L163.0 37.2 L162.3 35.2 L160.9 33.7 L159.1 32.7 L157.0 32.5Z" fill="#2A3644"/><path d="M108.0 110.7 L110.4 111.0 L112.6 112.1 L114.2 114.0 L115.0 116.3 L114.9 118.7 L113.9 120.9 L112.1 122.6 L109.9 123.6 L107.4 123.6 L105.1 122.7 L103.3 121.1 L102.3 118.9 L100.8 118.2 L101.9 120.4 L103.7 122.1 L106.0 123.0 L108.4 122.9 L110.7 122.0 L112.4 120.3 L113.4 118.1 L113.6 115.6 L112.8 113.3 L111.2 111.5 L109.0 110.3 L106.6 110.1Z" fill="#7F96AE"/><path d="M108.0 111.3 L110.3 111.5 L112.3 112.5 L113.7 114.2 L114.5 116.3 L114.4 118.6 L113.5 120.6 L111.8 122.2 L109.8 123.1 L107.5 123.1 L105.4 122.3 L103.8 120.8 L102.8 118.8 L102.1 118.4 L103.0 120.5 L104.7 122.0 L106.8 122.8 L109.0 122.7 L111.1 121.9 L112.7 120.3 L113.7 118.3 L113.8 116.0 L113.0 113.9 L111.5 112.2 L109.6 111.2 L107.3 110.9Z" fill="#A4A59E"/><path d="M112.2 112.6 L114.6 112.9 L116.8 114.0 L118.4 115.9 L119.2 118.2 L119.1 120.6 L118.1 122.8 L116.3 124.5 L114.1 125.5 L111.6 125.5 L109.4 124.6 L107.6 123.0 L106.5 120.8 L102.3 118.9 L103.3 121.1 L105.1 122.7 L107.4 123.6 L109.9 123.6 L112.1 122.6 L113.9 120.9 L114.9 118.7 L115.0 116.3 L114.2 114.0 L112.6 112.1 L110.4 111.0 L108.0 110.7Z" fill="#3A4A5E"/><path d="M106.3 125.9 L116.0 124.3 L113.4 126.6 Z" fill="#34424F"/><path d="M112.9 114.3 L115.0 114.5 L116.9 115.4 L118.2 117.0 L118.9 119.0 L118.8 121.0 L118.0 122.9 L116.5 124.4 L114.5 125.2 L112.5 125.2 L110.5 124.5 L109.0 123.1 L108.1 121.2 L106.2 120.3 L107.1 122.2 L108.6 123.6 L110.5 124.3 L112.6 124.3 L114.5 123.5 L116.0 122.1 L116.9 120.2 L117.0 118.1 L116.3 116.1 L114.9 114.6 L113.1 113.6 L111.0 113.4Z" fill="#2A3644"/><path d="M89.9 81.5 L92.9 81.8 L95.5 83.2 L97.4 85.4 L98.3 88.1 L98.2 91.1 L97.0 93.7 L94.9 95.8 L92.2 96.9 L89.3 97.0 L86.5 95.9 L84.4 93.9 L83.1 91.3 L81.4 90.5 L82.6 93.2 L84.8 95.1 L87.5 96.2 L90.5 96.1 L93.2 95.0 L95.3 93.0 L96.5 90.3 L96.6 87.4 L95.7 84.6 L93.7 82.4 L91.1 81.0 L88.2 80.7Z" fill="#7F96AE"/><path d="M90.0 82.1 L92.7 82.4 L95.1 83.6 L96.8 85.7 L97.7 88.2 L97.6 90.9 L96.5 93.4 L94.6 95.3 L92.1 96.3 L89.4 96.3 L86.9 95.4 L84.9 93.6 L83.7 91.1 L82.8 90.7 L84.0 93.2 L86.0 95.0 L88.5 96.0 L91.2 95.9 L93.7 94.9 L95.6 93.0 L96.7 90.5 L96.9 87.8 L96.0 85.3 L94.2 83.3 L91.8 82.0 L89.1 81.7Z" fill="#A4A59E"/><path d="M95.0 83.8 L97.9 84.1 L100.5 85.4 L102.4 87.7 L103.4 90.4 L103.3 93.4 L102.1 96.0 L100.0 98.1 L97.3 99.2 L94.3 99.2 L91.6 98.2 L89.4 96.2 L88.2 93.6 L83.1 91.3 L84.4 93.9 L86.5 95.9 L89.3 97.0 L92.2 96.9 L94.9 95.8 L97.0 93.7 L98.2 91.1 L98.3 88.1 L97.4 85.4 L95.5 83.2 L92.9 81.8 L89.9 81.5Z" fill="#3A4A5E"/><path d="M87.9 99.7 L99.6 97.8 L96.5 100.5 Z" fill="#34424F"/><path d="M95.9 85.7 L98.4 86.0 L100.6 87.1 L102.2 89.0 L103.0 91.4 L102.9 93.9 L101.9 96.1 L100.1 97.9 L97.8 98.8 L95.3 98.9 L93.0 98.0 L91.2 96.3 L90.1 94.1 L87.7 93.0 L88.8 95.3 L90.7 96.9 L93.0 97.8 L95.5 97.8 L97.8 96.8 L99.6 95.1 L100.6 92.8 L100.7 90.3 L99.9 88.0 L98.3 86.1 L96.0 84.9 L93.6 84.7Z" fill="#2A3644"/><path d="M-9.1 62.7 L-6.7 63.0 L-4.5 64.1 L-2.9 66.0 L-2.1 68.3 L-2.2 70.7 L-3.2 72.9 L-5.0 74.6 L-7.2 75.6 L-9.7 75.6 L-12.0 74.7 L-13.8 73.1 L-14.8 70.9 L-16.3 70.2 L-15.2 72.4 L-13.4 74.1 L-11.1 75.0 L-8.7 74.9 L-6.4 74.0 L-4.7 72.3 L-3.7 70.1 L-3.6 67.6 L-4.4 65.3 L-6.0 63.5 L-8.1 62.3 L-10.6 62.1Z" fill="#7F96AE"/><path d="M-9.1 63.3 L-6.8 63.5 L-4.8 64.5 L-3.4 66.2 L-2.6 68.3 L-2.7 70.6 L-3.7 72.6 L-5.3 74.2 L-7.3 75.1 L-9.6 75.1 L-11.7 74.3 L-13.4 72.8 L-14.3 70.8 L-15.1 70.4 L-14.1 72.5 L-12.4 74.0 L-10.3 74.8 L-8.1 74.7 L-6.0 73.9 L-4.4 72.3 L-3.5 70.3 L-3.4 68.0 L-4.1 65.9 L-5.6 64.2 L-7.6 63.2 L-9.8 62.9Z" fill="#A4A59E"/><path d="M-4.9 64.6 L-2.5 64.9 L-0.3 66.0 L1.3 67.9 L2.1 70.2 L2.0 72.6 L1.0 74.8 L-0.8 76.5 L-3.0 77.5 L-5.5 77.5 L-7.7 76.6 L-9.5 75.0 L-10.6 72.8 L-14.8 70.9 L-13.8 73.1 L-12.0 74.7 L-9.7 75.6 L-7.2 75.6 L-5.0 74.6 L-3.2 72.9 L-2.2 70.7 L-2.1 68.3 L-2.9 66.0 L-4.5 64.1 L-6.7 63.0 L-9.1 62.7Z" fill="#3A4A5E"/><path d="M-10.8 77.9 L-1.1 76.3 L-3.7 78.6 Z" fill="#34424F"/><path d="M-4.2 66.3 L-2.1 66.5 L-0.3 67.4 L1.1 69.0 L1.8 71.0 L1.7 73.0 L0.8 74.9 L-0.6 76.4 L-2.6 77.2 L-4.6 77.2 L-6.6 76.5 L-8.1 75.1 L-9.0 73.2 L-11.0 72.3 L-10.0 74.2 L-8.5 75.6 L-6.6 76.3 L-4.5 76.3 L-2.6 75.5 L-1.1 74.1 L-0.2 72.2 L-0.2 70.1 L-0.8 68.1 L-2.2 66.6 L-4.0 65.6 L-6.1 65.4Z" fill="#2A3644"/><path d="M148.9 62.7 L151.3 63.0 L153.5 64.1 L155.1 66.0 L155.9 68.3 L155.8 70.7 L154.8 72.9 L153.0 74.6 L150.8 75.6 L148.3 75.6 L146.0 74.7 L144.2 73.1 L143.2 70.9 L141.7 70.2 L142.8 72.4 L144.6 74.1 L146.9 75.0 L149.3 74.9 L151.6 74.0 L153.3 72.3 L154.3 70.1 L154.4 67.6 L153.6 65.3 L152.0 63.5 L149.9 62.3 L147.4 62.1Z" fill="#7F96AE"/><path d="M148.9 63.3 L151.2 63.5 L153.2 64.5 L154.6 66.2 L155.4 68.3 L155.3 70.6 L154.3 72.6 L152.7 74.2 L150.7 75.1 L148.4 75.1 L146.3 74.3 L144.6 72.8 L143.7 70.8 L142.9 70.4 L143.9 72.5 L145.6 74.0 L147.7 74.8 L149.9 74.7 L152.0 73.9 L153.6 72.3 L154.5 70.3 L154.6 68.0 L153.9 65.9 L152.4 64.2 L150.4 63.2 L148.2 62.9Z" fill="#A4A59E"/><path d="M153.1 64.6 L155.5 64.9 L157.7 66.0 L159.3 67.9 L160.1 70.2 L160.0 72.6 L159.0 74.8 L157.2 76.5 L155.0 77.5 L152.5 77.5 L150.3 76.6 L148.5 75.0 L147.4 72.8 L143.2 70.9 L144.2 73.1 L146.0 74.7 L148.3 75.6 L150.8 75.6 L153.0 74.6 L154.8 72.9 L155.8 70.7 L155.9 68.3 L155.1 66.0 L153.5 64.1 L151.3 63.0 L148.9 62.7Z" fill="#3A4A5E"/><path d="M147.2 77.9 L156.9 76.3 L154.3 78.6 Z" fill="#34424F"/><path d="M153.8 66.3 L155.9 66.5 L157.7 67.4 L159.1 69.0 L159.8 71.0 L159.7 73.0 L158.8 74.9 L157.4 76.4 L155.4 77.2 L153.4 77.2 L151.4 76.5 L149.9 75.1 L149.0 73.2 L147.0 72.3 L148.0 74.2 L149.5 75.6 L151.4 76.3 L153.5 76.3 L155.4 75.5 L156.9 74.1 L157.8 72.2 L157.8 70.1 L157.2 68.1 L155.8 66.6 L154.0 65.6 L151.9 65.4Z" fill="#2A3644"/><path d="M29.8 9.4 L32.2 9.6 L34.4 10.8 L36.0 12.6 L36.8 14.9 L36.7 17.4 L35.7 19.6 L33.9 21.3 L31.6 22.2 L29.2 22.3 L26.9 21.4 L25.1 19.8 L24.1 17.6 L22.6 16.9 L23.7 19.1 L25.5 20.8 L27.8 21.6 L30.2 21.6 L32.5 20.7 L34.2 19.0 L35.2 16.7 L35.3 14.3 L34.5 12.0 L32.9 10.1 L30.8 9.0 L28.3 8.8Z" fill="#7F96AE"/><path d="M29.8 9.9 L32.0 10.1 L34.0 11.2 L35.5 12.9 L36.2 15.0 L36.1 17.3 L35.2 19.3 L33.6 20.9 L31.5 21.7 L29.3 21.8 L27.2 21.0 L25.5 19.4 L24.6 17.4 L23.8 17.1 L24.8 19.1 L26.5 20.6 L28.6 21.4 L30.8 21.4 L32.9 20.5 L34.5 19.0 L35.4 16.9 L35.5 14.7 L34.8 12.6 L33.3 10.9 L31.3 9.8 L29.1 9.6Z" fill="#A4A59E"/><path d="M34.0 11.3 L36.4 11.6 L38.6 12.7 L40.2 14.5 L41.0 16.8 L40.9 19.3 L39.9 21.5 L38.1 23.2 L35.9 24.1 L33.4 24.2 L31.1 23.3 L29.3 21.7 L28.3 19.5 L24.1 17.6 L25.1 19.8 L26.9 21.4 L29.2 22.3 L31.6 22.2 L33.9 21.3 L35.7 19.6 L36.7 17.4 L36.8 14.9 L36.0 12.6 L34.4 10.8 L32.2 9.6 L29.8 9.4Z" fill="#3A4A5E"/><path d="M28.1 24.6 L37.8 23.0 L35.2 25.3 Z" fill="#34424F"/><path d="M34.7 12.9 L36.8 13.1 L38.6 14.1 L40.0 15.7 L40.7 17.6 L40.6 19.7 L39.7 21.6 L38.2 23.0 L36.3 23.8 L34.2 23.9 L32.3 23.1 L30.8 21.7 L29.9 19.9 L27.9 19.0 L28.8 20.9 L30.4 22.3 L32.3 23.0 L34.4 23.0 L36.3 22.2 L37.8 20.7 L38.6 18.8 L38.7 16.8 L38.1 14.8 L36.7 13.2 L34.9 12.3 L32.8 12.1Z" fill="#2A3644"/><path d="M47.5 15.6 L50.0 15.9 L52.1 17.0 L53.7 18.8 L54.5 21.2 L54.4 23.6 L53.4 25.8 L51.7 27.5 L49.4 28.5 L47.0 28.5 L44.7 27.6 L42.9 26.0 L41.8 23.8 L40.4 23.1 L41.5 25.3 L43.3 27.0 L45.5 27.9 L48.0 27.8 L50.3 26.9 L52.0 25.2 L53.0 23.0 L53.1 20.5 L52.3 18.2 L50.7 16.4 L48.5 15.2 L46.1 15.0Z" fill="#7F96AE"/><path d="M47.6 16.1 L49.8 16.4 L51.8 17.4 L53.3 19.1 L54.0 21.2 L53.9 23.5 L53.0 25.5 L51.4 27.1 L49.3 28.0 L47.1 28.0 L45.0 27.2 L43.3 25.7 L42.3 23.6 L41.6 23.3 L42.6 25.3 L44.3 26.9 L46.4 27.7 L48.6 27.6 L50.7 26.8 L52.3 25.2 L53.2 23.2 L53.3 20.9 L52.6 18.8 L51.1 17.1 L49.1 16.0 L46.9 15.8Z" fill="#A4A59E"/><path d="M51.8 17.5 L54.2 17.8 L56.4 18.9 L58.0 20.8 L58.8 23.1 L58.7 25.5 L57.7 27.7 L55.9 29.4 L53.6 30.4 L51.2 30.4 L48.9 29.5 L47.1 27.9 L46.1 25.7 L41.8 23.8 L42.9 26.0 L44.7 27.6 L47.0 28.5 L49.4 28.5 L51.7 27.5 L53.4 25.8 L54.4 23.6 L54.5 21.2 L53.7 18.8 L52.1 17.0 L50.0 15.9 L47.5 15.6Z" fill="#3A4A5E"/><path d="M45.8 30.8 L55.6 29.2 L53.0 31.5 Z" fill="#34424F"/><path d="M52.5 19.1 L54.6 19.4 L56.4 20.3 L57.8 21.9 L58.4 23.8 L58.4 25.9 L57.5 27.8 L56.0 29.3 L54.1 30.1 L52.0 30.1 L50.1 29.4 L48.6 27.9 L47.6 26.1 L45.7 25.2 L46.6 27.1 L48.1 28.5 L50.1 29.2 L52.2 29.2 L54.1 28.4 L55.6 26.9 L56.4 25.1 L56.5 23.0 L55.8 21.0 L54.5 19.4 L52.6 18.5 L50.6 18.3Z" fill="#2A3644"/><path d="M4.9 23.6 L7.3 23.9 L9.5 25.0 L11.1 26.8 L11.9 29.2 L11.8 31.6 L10.8 33.8 L9.0 35.5 L6.8 36.5 L4.3 36.5 L2.0 35.6 L0.2 34.0 L-0.8 31.8 L-2.3 31.1 L-1.2 33.3 L0.6 35.0 L2.9 35.9 L5.3 35.8 L7.6 34.9 L9.3 33.2 L10.3 31.0 L10.4 28.5 L9.6 26.2 L8.0 24.4 L5.9 23.2 L3.4 23.0Z" fill="#7F96AE"/><path d="M4.9 24.1 L7.2 24.4 L9.2 25.4 L10.6 27.1 L11.4 29.2 L11.3 31.5 L10.3 33.5 L8.7 35.1 L6.7 36.0 L4.4 36.0 L2.3 35.2 L0.6 33.7 L-0.3 31.6 L-1.1 31.3 L-0.1 33.3 L1.6 34.9 L3.7 35.7 L5.9 35.6 L8.0 34.8 L9.6 33.2 L10.5 31.2 L10.6 28.9 L9.9 26.8 L8.4 25.1 L6.4 24.0 L4.2 23.8Z" fill="#A4A59E"/><path d="M9.1 25.5 L11.5 25.8 L13.7 26.9 L15.3 28.8 L16.1 31.1 L16.0 33.5 L15.0 35.7 L13.2 37.4 L11.0 38.4 L8.5 38.4 L6.3 37.5 L4.5 35.9 L3.4 33.7 L-0.8 31.8 L0.2 34.0 L2.0 35.6 L4.3 36.5 L6.8 36.5 L9.0 35.5 L10.8 33.8 L11.8 31.6 L11.9 29.2 L11.1 26.8 L9.5 25.0 L7.3 23.9 L4.9 23.6Z" fill="#3A4A5E"/><path d="M3.2 38.8 L12.9 37.2 L10.3 39.5 Z" fill="#34424F"/><path d="M9.8 27.1 L11.9 27.4 L13.7 28.3 L15.1 29.9 L15.8 31.8 L15.7 33.9 L14.8 35.8 L13.4 37.3 L11.4 38.1 L9.4 38.1 L7.4 37.4 L5.9 35.9 L5.0 34.1 L3.0 33.2 L4.0 35.1 L5.5 36.5 L7.4 37.2 L9.5 37.2 L11.4 36.4 L12.9 34.9 L13.8 33.1 L13.8 31.0 L13.2 29.0 L11.8 27.4 L10.0 26.5 L7.9 26.3Z" fill="#2A3644"/><path d="M162.9 23.6 L165.3 23.9 L167.5 25.0 L169.1 26.8 L169.9 29.2 L169.8 31.6 L168.8 33.8 L167.0 35.5 L164.8 36.5 L162.3 36.5 L160.0 35.6 L158.2 34.0 L157.2 31.8 L155.7 31.1 L156.8 33.3 L158.6 35.0 L160.9 35.9 L163.3 35.8 L165.6 34.9 L167.3 33.2 L168.3 31.0 L168.4 28.5 L167.6 26.2 L166.0 24.4 L163.9 23.2 L161.4 23.0Z" fill="#7F96AE"/><path d="M162.9 24.1 L165.2 24.4 L167.2 25.4 L168.6 27.1 L169.4 29.2 L169.3 31.5 L168.3 33.5 L166.7 35.1 L164.7 36.0 L162.4 36.0 L160.3 35.2 L158.6 33.7 L157.7 31.6 L156.9 31.3 L157.9 33.3 L159.6 34.9 L161.7 35.7 L163.9 35.6 L166.0 34.8 L167.6 33.2 L168.5 31.2 L168.6 28.9 L167.9 26.8 L166.4 25.1 L164.4 24.0 L162.2 23.8Z" fill="#A4A59E"/><path d="M167.1 25.5 L169.5 25.8 L171.7 26.9 L173.3 28.8 L174.1 31.1 L174.0 33.5 L173.0 35.7 L171.2 37.4 L169.0 38.4 L166.5 38.4 L164.3 37.5 L162.5 35.9 L161.4 33.7 L157.2 31.8 L158.2 34.0 L160.0 35.6 L162.3 36.5 L164.8 36.5 L167.0 35.5 L168.8 33.8 L169.8 31.6 L169.9 29.2 L169.1 26.8 L167.5 25.0 L165.3 23.9 L162.9 23.6Z" fill="#3A4A5E"/><path d="M161.2 38.8 L170.9 37.2 L168.3 39.5 Z" fill="#34424F"/><path d="M167.8 27.1 L169.9 27.4 L171.7 28.3 L173.1 29.9 L173.8 31.8 L173.7 33.9 L172.8 35.8 L171.4 37.3 L169.4 38.1 L167.4 38.1 L165.4 37.4 L163.9 35.9 L163.0 34.1 L161.0 33.2 L162.0 35.1 L163.5 36.5 L165.4 37.2 L167.5 37.2 L169.4 36.4 L170.9 34.9 L171.8 33.1 L171.8 31.0 L171.2 29.0 L169.8 27.4 L168.0 26.5 L165.9 26.3Z" fill="#2A3644"/><path d="M109.1 35.1 L111.1 35.3 L112.8 36.2 L114.1 37.7 L114.7 39.5 L114.7 41.5 L113.9 43.2 L112.5 44.6 L110.6 45.3 L108.7 45.4 L106.9 44.7 L105.4 43.4 L104.6 41.6 L103.4 41.1 L104.3 42.8 L105.7 44.2 L107.6 44.9 L109.5 44.8 L111.3 44.1 L112.7 42.7 L113.5 40.9 L113.6 39.0 L113.0 37.1 L111.7 35.7 L109.9 34.8 L108.0 34.6Z" fill="#7F96AE"/><path d="M109.2 35.5 L111.0 35.7 L112.6 36.5 L113.7 37.9 L114.3 39.6 L114.3 41.4 L113.5 43.0 L112.2 44.3 L110.6 44.9 L108.8 45.0 L107.1 44.3 L105.8 43.1 L105.0 41.5 L104.4 41.2 L105.2 42.9 L106.5 44.1 L108.2 44.7 L110.0 44.7 L111.7 44.0 L112.9 42.7 L113.7 41.1 L113.8 39.3 L113.2 37.6 L112.0 36.2 L110.4 35.4 L108.6 35.2Z" fill="#A4A59E"/><path d="M112.5 36.6 L114.5 36.8 L116.2 37.7 L117.5 39.2 L118.1 41.0 L118.0 43.0 L117.2 44.8 L115.8 46.1 L114.0 46.9 L112.1 46.9 L110.2 46.2 L108.8 44.9 L108.0 43.1 L104.6 41.6 L105.4 43.4 L106.9 44.7 L108.7 45.4 L110.6 45.3 L112.5 44.6 L113.9 43.2 L114.7 41.5 L114.7 39.5 L114.1 37.7 L112.8 36.2 L111.1 35.3 L109.1 35.1Z" fill="#3A4A5E"/><path d="M107.8 47.2 L115.6 45.9 L113.5 47.8 Z" fill="#34424F"/><path d="M113.1 37.9 L114.8 38.1 L116.2 38.8 L117.3 40.1 L117.9 41.7 L117.8 43.3 L117.1 44.8 L115.9 46.0 L114.4 46.6 L112.7 46.7 L111.2 46.1 L110.0 44.9 L109.2 43.4 L107.7 42.7 L108.4 44.2 L109.6 45.4 L111.2 46.0 L112.8 45.9 L114.4 45.3 L115.6 44.1 L116.3 42.6 L116.3 41.0 L115.8 39.4 L114.7 38.1 L113.2 37.4 L111.6 37.2Z" fill="#2A3644"/><path d="M77.1 31.5 L79.1 31.7 L80.8 32.6 L82.1 34.1 L82.7 35.9 L82.7 37.9 L81.9 39.7 L80.5 41.0 L78.6 41.8 L76.7 41.8 L74.9 41.1 L73.4 39.8 L72.6 38.0 L71.4 37.5 L72.3 39.3 L73.7 40.6 L75.6 41.3 L77.5 41.3 L79.3 40.5 L80.7 39.2 L81.5 37.4 L81.6 35.4 L81.0 33.6 L79.7 32.1 L77.9 31.2 L76.0 31.0Z" fill="#7F96AE"/><path d="M77.2 31.9 L79.0 32.1 L80.6 32.9 L81.7 34.3 L82.3 36.0 L82.3 37.8 L81.5 39.4 L80.2 40.7 L78.6 41.4 L76.8 41.4 L75.1 40.8 L73.8 39.6 L73.0 37.9 L72.4 37.7 L73.2 39.3 L74.5 40.5 L76.2 41.2 L78.0 41.1 L79.7 40.4 L80.9 39.2 L81.7 37.5 L81.8 35.7 L81.2 34.1 L80.0 32.7 L78.4 31.9 L76.6 31.7Z" fill="#A4A59E"/><path d="M80.5 33.0 L82.5 33.2 L84.2 34.1 L85.5 35.6 L86.1 37.5 L86.0 39.4 L85.2 41.2 L83.8 42.6 L82.0 43.3 L80.1 43.3 L78.2 42.6 L76.8 41.3 L76.0 39.6 L72.6 38.0 L73.4 39.8 L74.9 41.1 L76.7 41.8 L78.6 41.8 L80.5 41.0 L81.9 39.7 L82.7 37.9 L82.7 35.9 L82.1 34.1 L80.8 32.6 L79.1 31.7 L77.1 31.5Z" fill="#3A4A5E"/><path d="M75.8 43.7 L83.6 42.4 L81.5 44.2 Z" fill="#34424F"/><path d="M81.1 34.3 L82.8 34.5 L84.2 35.3 L85.3 36.5 L85.9 38.1 L85.8 39.8 L85.1 41.3 L83.9 42.4 L82.4 43.1 L80.7 43.1 L79.2 42.5 L78.0 41.4 L77.2 39.9 L75.7 39.2 L76.4 40.7 L77.6 41.8 L79.2 42.4 L80.8 42.4 L82.4 41.7 L83.6 40.6 L84.3 39.1 L84.3 37.4 L83.8 35.8 L82.7 34.6 L81.2 33.8 L79.6 33.6Z" fill="#2A3644"/><path d="M54.0 37.7 L56.0 37.9 L57.7 38.8 L59.0 40.3 L59.6 42.2 L59.5 44.1 L58.7 45.9 L57.3 47.3 L55.5 48.0 L53.6 48.0 L51.8 47.3 L50.3 46.0 L49.5 44.3 L48.3 43.8 L49.2 45.5 L50.6 46.8 L52.4 47.5 L54.4 47.5 L56.2 46.8 L57.6 45.4 L58.4 43.6 L58.5 41.7 L57.8 39.8 L56.6 38.3 L54.8 37.4 L52.9 37.2Z" fill="#7F96AE"/><path d="M54.1 38.2 L55.9 38.3 L57.5 39.2 L58.6 40.5 L59.2 42.2 L59.1 44.0 L58.4 45.7 L57.1 46.9 L55.5 47.6 L53.7 47.6 L52.0 47.0 L50.6 45.8 L49.9 44.2 L49.3 43.9 L50.1 45.5 L51.4 46.7 L53.1 47.4 L54.9 47.4 L56.5 46.7 L57.8 45.4 L58.6 43.8 L58.6 42.0 L58.1 40.3 L56.9 38.9 L55.3 38.1 L53.5 37.9Z" fill="#A4A59E"/><path d="M57.4 39.3 L59.4 39.5 L61.1 40.4 L62.4 41.8 L63.0 43.7 L62.9 45.6 L62.1 47.4 L60.7 48.8 L58.9 49.5 L57.0 49.6 L55.1 48.9 L53.7 47.5 L52.8 45.8 L49.5 44.3 L50.3 46.0 L51.8 47.3 L53.6 48.0 L55.5 48.0 L57.3 47.3 L58.7 45.9 L59.5 44.1 L59.6 42.2 L59.0 40.3 L57.7 38.8 L56.0 37.9 L54.0 37.7Z" fill="#3A4A5E"/><path d="M52.7 49.9 L60.5 48.6 L58.4 50.4 Z" fill="#34424F"/><path d="M58.0 40.6 L59.7 40.7 L61.1 41.5 L62.2 42.8 L62.8 44.3 L62.7 46.0 L62.0 47.5 L60.8 48.7 L59.3 49.3 L57.6 49.3 L56.1 48.7 L54.8 47.6 L54.1 46.1 L52.6 45.4 L53.3 46.9 L54.5 48.0 L56.1 48.6 L57.7 48.6 L59.3 48.0 L60.5 46.8 L61.1 45.3 L61.2 43.6 L60.7 42.1 L59.6 40.8 L58.1 40.0 L56.5 39.9Z" fill="#2A3644"/><path d="M22.0 41.3 L24.0 41.5 L25.7 42.4 L27.0 43.9 L27.6 45.7 L27.5 47.7 L26.7 49.5 L25.3 50.8 L23.5 51.6 L21.6 51.6 L19.8 50.9 L18.3 49.6 L17.5 47.8 L16.3 47.3 L17.2 49.1 L18.6 50.4 L20.4 51.1 L22.4 51.1 L24.2 50.3 L25.6 48.9 L26.4 47.2 L26.5 45.2 L25.8 43.4 L24.6 41.9 L22.8 41.0 L20.9 40.8Z" fill="#7F96AE"/><path d="M22.1 41.7 L23.9 41.9 L25.5 42.7 L26.6 44.1 L27.2 45.8 L27.1 47.6 L26.4 49.2 L25.1 50.5 L23.5 51.2 L21.7 51.2 L20.0 50.6 L18.6 49.3 L17.9 47.7 L17.3 47.5 L18.1 49.1 L19.4 50.3 L21.1 50.9 L22.9 50.9 L24.5 50.2 L25.8 49.0 L26.6 47.3 L26.6 45.5 L26.1 43.8 L24.9 42.5 L23.3 41.6 L21.5 41.5Z" fill="#A4A59E"/><path d="M25.4 42.8 L27.4 43.0 L29.1 43.9 L30.4 45.4 L31.0 47.2 L30.9 49.2 L30.1 51.0 L28.7 52.3 L26.9 53.1 L25.0 53.1 L23.1 52.4 L21.7 51.1 L20.8 49.3 L17.5 47.8 L18.3 49.6 L19.8 50.9 L21.6 51.6 L23.5 51.6 L25.3 50.8 L26.7 49.5 L27.5 47.7 L27.6 45.7 L27.0 43.9 L25.7 42.4 L24.0 41.5 L22.0 41.3Z" fill="#3A4A5E"/><path d="M20.7 53.5 L28.5 52.2 L26.4 54.0 Z" fill="#34424F"/><path d="M26.0 44.1 L27.7 44.3 L29.1 45.1 L30.2 46.3 L30.8 47.9 L30.7 49.5 L30.0 51.1 L28.8 52.2 L27.3 52.8 L25.6 52.9 L24.1 52.3 L22.8 51.2 L22.1 49.7 L20.6 49.0 L21.3 50.5 L22.5 51.6 L24.1 52.2 L25.7 52.2 L27.3 51.5 L28.5 50.4 L29.1 48.8 L29.2 47.2 L28.7 45.6 L27.6 44.4 L26.1 43.6 L24.5 43.4Z" fill="#2A3644"/><path d="M104.4 48.5 L106.9 48.8 L109.0 49.9 L110.6 51.7 L111.4 54.0 L111.3 56.5 L110.3 58.7 L108.6 60.4 L106.3 61.4 L103.9 61.4 L101.6 60.5 L99.8 58.9 L98.7 56.7 L97.3 56.0 L98.4 58.2 L100.2 59.9 L102.4 60.7 L104.9 60.7 L107.1 59.8 L108.9 58.1 L109.9 55.8 L110.0 53.4 L109.2 51.1 L107.6 49.2 L105.4 48.1 L103.0 47.9Z" fill="#7F96AE"/><path d="M104.5 49.0 L106.7 49.3 L108.7 50.3 L110.2 52.0 L110.9 54.1 L110.8 56.4 L109.9 58.4 L108.3 60.0 L106.2 60.8 L104.0 60.9 L101.9 60.1 L100.2 58.6 L99.2 56.5 L98.5 56.2 L99.5 58.2 L101.1 59.8 L103.2 60.6 L105.5 60.5 L107.6 59.7 L109.2 58.1 L110.1 56.0 L110.2 53.8 L109.5 51.7 L108.0 50.0 L106.0 48.9 L103.8 48.7Z" fill="#A4A59E"/><path d="M108.7 50.4 L111.1 50.7 L113.3 51.8 L114.9 53.6 L115.7 55.9 L115.5 58.4 L114.5 60.6 L112.8 62.3 L110.5 63.3 L108.1 63.3 L105.8 62.4 L104.0 60.8 L102.9 58.6 L98.7 56.7 L99.8 58.9 L101.6 60.5 L103.9 61.4 L106.3 61.4 L108.6 60.4 L110.3 58.7 L111.3 56.5 L111.4 54.0 L110.6 51.7 L109.0 49.9 L106.9 48.8 L104.4 48.5Z" fill="#3A4A5E"/><path d="M102.7 63.7 L112.5 62.1 L109.9 64.4 Z" fill="#34424F"/><path d="M109.4 52.0 L111.5 52.2 L113.3 53.2 L114.7 54.8 L115.3 56.7 L115.2 58.8 L114.4 60.7 L112.9 62.2 L111.0 62.9 L108.9 63.0 L107.0 62.2 L105.4 60.8 L104.5 59.0 L102.6 58.1 L103.5 60.0 L105.0 61.4 L107.0 62.1 L109.1 62.1 L111.0 61.3 L112.5 59.8 L113.3 57.9 L113.4 55.9 L112.7 53.9 L111.4 52.3 L109.5 51.4 L107.5 51.2Z" fill="#2A3644"/><path d="M134.0 41.3 L136.0 41.5 L137.7 42.4 L139.0 43.9 L139.6 45.7 L139.5 47.7 L138.7 49.5 L137.3 50.8 L135.5 51.6 L133.6 51.6 L131.8 50.9 L130.3 49.6 L129.5 47.8 L128.3 47.3 L129.2 49.1 L130.6 50.4 L132.4 51.1 L134.4 51.1 L136.2 50.3 L137.6 48.9 L138.4 47.2 L138.5 45.2 L137.8 43.4 L136.6 41.9 L134.8 41.0 L132.9 40.8Z" fill="#7F96AE"/><path d="M134.1 41.7 L135.9 41.9 L137.5 42.7 L138.6 44.1 L139.2 45.8 L139.1 47.6 L138.4 49.2 L137.1 50.5 L135.5 51.2 L133.7 51.2 L132.0 50.6 L130.6 49.3 L129.9 47.7 L129.3 47.5 L130.1 49.1 L131.4 50.3 L133.1 50.9 L134.9 50.9 L136.5 50.2 L137.8 49.0 L138.6 47.3 L138.6 45.5 L138.1 43.8 L136.9 42.5 L135.3 41.6 L133.5 41.5Z" fill="#A4A59E"/><path d="M137.4 42.8 L139.4 43.0 L141.1 43.9 L142.4 45.4 L143.0 47.2 L142.9 49.2 L142.1 51.0 L140.7 52.3 L138.9 53.1 L137.0 53.1 L135.1 52.4 L133.7 51.1 L132.8 49.3 L129.5 47.8 L130.3 49.6 L131.8 50.9 L133.6 51.6 L135.5 51.6 L137.3 50.8 L138.7 49.5 L139.5 47.7 L139.6 45.7 L139.0 43.9 L137.7 42.4 L136.0 41.5 L134.0 41.3Z" fill="#3A4A5E"/><path d="M132.7 53.5 L140.5 52.2 L138.4 54.0 Z" fill="#34424F"/><path d="M138.0 44.1 L139.7 44.3 L141.1 45.1 L142.2 46.3 L142.8 47.9 L142.7 49.5 L142.0 51.1 L140.8 52.2 L139.3 52.8 L137.6 52.9 L136.1 52.3 L134.8 51.2 L134.1 49.7 L132.6 49.0 L133.3 50.5 L134.5 51.6 L136.1 52.2 L137.7 52.2 L139.3 51.5 L140.5 50.4 L141.1 48.8 L141.2 47.2 L140.7 45.6 L139.6 44.4 L138.1 43.6 L136.5 43.4Z" fill="#2A3644"/><path d="M13.1 62.6 L15.1 62.8 L16.8 63.7 L18.1 65.2 L18.7 67.1 L18.7 69.0 L17.9 70.8 L16.5 72.2 L14.6 72.9 L12.7 72.9 L10.9 72.2 L9.4 70.9 L8.6 69.2 L7.4 68.6 L8.3 70.4 L9.7 71.7 L11.6 72.4 L13.5 72.4 L15.3 71.6 L16.7 70.3 L17.5 68.5 L17.6 66.5 L17.0 64.7 L15.7 63.2 L13.9 62.3 L12.0 62.1Z" fill="#7F96AE"/><path d="M13.2 63.0 L15.0 63.2 L16.6 64.1 L17.7 65.4 L18.3 67.1 L18.3 68.9 L17.5 70.6 L16.2 71.8 L14.6 72.5 L12.8 72.5 L11.1 71.9 L9.8 70.7 L9.0 69.1 L8.4 68.8 L9.2 70.4 L10.5 71.6 L12.2 72.3 L14.0 72.2 L15.7 71.6 L16.9 70.3 L17.7 68.7 L17.8 66.9 L17.2 65.2 L16.0 63.8 L14.4 63.0 L12.6 62.8Z" fill="#A4A59E"/><path d="M16.5 64.2 L18.5 64.4 L20.2 65.3 L21.5 66.7 L22.1 68.6 L22.0 70.5 L21.2 72.3 L19.8 73.7 L18.0 74.4 L16.1 74.5 L14.2 73.8 L12.8 72.4 L12.0 70.7 L8.6 69.2 L9.4 70.9 L10.9 72.2 L12.7 72.9 L14.6 72.9 L16.5 72.2 L17.9 70.8 L18.7 69.0 L18.7 67.1 L18.1 65.2 L16.8 63.7 L15.1 62.8 L13.1 62.6Z" fill="#3A4A5E"/><path d="M11.8 74.8 L19.6 73.5 L17.5 75.3 Z" fill="#34424F"/><path d="M17.1 65.5 L18.8 65.6 L20.2 66.4 L21.3 67.6 L21.9 69.2 L21.8 70.9 L21.1 72.4 L19.9 73.5 L18.4 74.2 L16.7 74.2 L15.2 73.6 L14.0 72.5 L13.2 71.0 L11.7 70.3 L12.4 71.8 L13.6 72.9 L15.2 73.5 L16.8 73.5 L18.4 72.9 L19.6 71.7 L20.3 70.2 L20.3 68.5 L19.8 66.9 L18.7 65.7 L17.2 64.9 L15.6 64.8Z" fill="#2A3644"/><path d="M48.7 64.4 L50.6 64.6 L52.4 65.5 L53.7 67.0 L54.3 68.8 L54.2 70.8 L53.4 72.6 L52.0 73.9 L50.2 74.7 L48.3 74.7 L46.4 74.0 L45.0 72.7 L44.1 70.9 L43.0 70.4 L43.8 72.2 L45.3 73.5 L47.1 74.2 L49.1 74.2 L50.9 73.4 L52.3 72.1 L53.1 70.3 L53.2 68.3 L52.5 66.5 L51.2 65.0 L49.5 64.1 L47.6 63.9Z" fill="#7F96AE"/><path d="M48.7 64.8 L50.5 65.0 L52.1 65.8 L53.3 67.2 L53.9 68.9 L53.8 70.7 L53.1 72.3 L51.8 73.6 L50.1 74.3 L48.3 74.3 L46.6 73.7 L45.3 72.4 L44.5 70.8 L44.0 70.6 L44.7 72.2 L46.1 73.4 L47.7 74.0 L49.5 74.0 L51.2 73.3 L52.5 72.1 L53.2 70.4 L53.3 68.6 L52.7 66.9 L51.5 65.6 L50.0 64.7 L48.2 64.6Z" fill="#A4A59E"/><path d="M52.1 65.9 L54.0 66.1 L55.8 67.0 L57.0 68.5 L57.7 70.4 L57.6 72.3 L56.8 74.1 L55.4 75.5 L53.6 76.2 L51.6 76.2 L49.8 75.5 L48.4 74.2 L47.5 72.5 L44.1 70.9 L45.0 72.7 L46.4 74.0 L48.3 74.7 L50.2 74.7 L52.0 73.9 L53.4 72.6 L54.2 70.8 L54.3 68.8 L53.7 67.0 L52.4 65.5 L50.6 64.6 L48.7 64.4Z" fill="#3A4A5E"/><path d="M47.3 76.6 L55.1 75.3 L53.1 77.1 Z" fill="#34424F"/><path d="M52.7 67.2 L54.3 67.4 L55.8 68.2 L56.9 69.4 L57.4 71.0 L57.4 72.7 L56.7 74.2 L55.5 75.3 L53.9 76.0 L52.3 76.0 L50.7 75.4 L49.5 74.3 L48.8 72.8 L47.2 72.1 L48.0 73.6 L49.2 74.7 L50.7 75.3 L52.4 75.3 L53.9 74.6 L55.1 73.5 L55.8 72.0 L55.9 70.3 L55.3 68.7 L54.2 67.5 L52.8 66.7 L51.1 66.5Z" fill="#2A3644"/><path d="M64.7 66.2 L66.6 66.4 L68.4 67.3 L69.7 68.8 L70.3 70.6 L70.2 72.6 L69.4 74.4 L68.0 75.7 L66.2 76.5 L64.3 76.5 L62.4 75.8 L61.0 74.5 L60.1 72.7 L59.0 72.2 L59.8 74.0 L61.3 75.3 L63.1 76.0 L65.1 75.9 L66.9 75.2 L68.3 73.8 L69.1 72.1 L69.2 70.1 L68.5 68.3 L67.2 66.8 L65.5 65.9 L63.6 65.7Z" fill="#7F96AE"/><path d="M64.7 66.6 L66.5 66.8 L68.1 67.6 L69.3 69.0 L69.9 70.7 L69.8 72.5 L69.1 74.1 L67.8 75.4 L66.1 76.1 L64.3 76.1 L62.6 75.4 L61.3 74.2 L60.5 72.6 L60.0 72.3 L60.7 74.0 L62.1 75.2 L63.7 75.8 L65.5 75.8 L67.2 75.1 L68.5 73.9 L69.2 72.2 L69.3 70.4 L68.7 68.7 L67.5 67.4 L66.0 66.5 L64.2 66.3Z" fill="#A4A59E"/><path d="M68.1 67.7 L70.0 67.9 L71.8 68.8 L73.0 70.3 L73.7 72.1 L73.6 74.1 L72.8 75.9 L71.4 77.2 L69.6 78.0 L67.6 78.0 L65.8 77.3 L64.4 76.0 L63.5 74.2 L60.1 72.7 L61.0 74.5 L62.4 75.8 L64.3 76.5 L66.2 76.5 L68.0 75.7 L69.4 74.4 L70.2 72.6 L70.3 70.6 L69.7 68.8 L68.4 67.3 L66.6 66.4 L64.7 66.2Z" fill="#3A4A5E"/><path d="M63.3 78.3 L71.1 77.0 L69.1 78.9 Z" fill="#34424F"/><path d="M68.7 69.0 L70.3 69.2 L71.8 69.9 L72.9 71.2 L73.4 72.8 L73.4 74.4 L72.7 75.9 L71.5 77.1 L69.9 77.7 L68.3 77.8 L66.7 77.2 L65.5 76.0 L64.8 74.6 L63.2 73.9 L64.0 75.4 L65.2 76.5 L66.7 77.1 L68.4 77.0 L69.9 76.4 L71.1 75.2 L71.8 73.7 L71.9 72.1 L71.3 70.5 L70.2 69.2 L68.8 68.5 L67.1 68.3Z" fill="#2A3644"/><path d="M75.4 63.5 L77.3 63.7 L79.0 64.6 L80.3 66.1 L81.0 67.9 L80.9 69.9 L80.1 71.7 L78.7 73.0 L76.9 73.8 L74.9 73.8 L73.1 73.1 L71.6 71.8 L70.8 70.0 L69.7 69.5 L70.5 71.3 L71.9 72.6 L73.8 73.3 L75.7 73.3 L77.5 72.5 L78.9 71.2 L79.7 69.4 L79.8 67.4 L79.2 65.6 L77.9 64.1 L76.2 63.2 L74.2 63.0Z" fill="#7F96AE"/><path d="M75.4 63.9 L77.2 64.1 L78.8 64.9 L80.0 66.3 L80.6 68.0 L80.5 69.8 L79.7 71.4 L78.4 72.7 L76.8 73.4 L75.0 73.4 L73.3 72.8 L72.0 71.6 L71.2 69.9 L70.6 69.7 L71.4 71.3 L72.7 72.5 L74.4 73.2 L76.2 73.1 L77.9 72.4 L79.2 71.2 L79.9 69.5 L80.0 67.7 L79.4 66.1 L78.2 64.7 L76.6 63.9 L74.8 63.7Z" fill="#A4A59E"/><path d="M78.7 65.0 L80.7 65.2 L82.4 66.1 L83.7 67.6 L84.3 69.5 L84.3 71.4 L83.5 73.2 L82.1 74.6 L80.3 75.3 L78.3 75.3 L76.5 74.6 L75.0 73.3 L74.2 71.6 L70.8 70.0 L71.6 71.8 L73.1 73.1 L74.9 73.8 L76.9 73.8 L78.7 73.0 L80.1 71.7 L80.9 69.9 L81.0 67.9 L80.3 66.1 L79.0 64.6 L77.3 63.7 L75.4 63.5Z" fill="#3A4A5E"/><path d="M74.0 75.7 L81.8 74.4 L79.7 76.2 Z" fill="#34424F"/><path d="M79.3 66.3 L81.0 66.5 L82.5 67.3 L83.5 68.5 L84.1 70.1 L84.0 71.8 L83.3 73.3 L82.1 74.4 L80.6 75.1 L79.0 75.1 L77.4 74.5 L76.2 73.4 L75.5 71.9 L73.9 71.2 L74.6 72.7 L75.9 73.8 L77.4 74.4 L79.1 74.4 L80.6 73.7 L81.8 72.6 L82.5 71.1 L82.5 69.4 L82.0 67.8 L80.9 66.6 L79.4 65.8 L77.8 65.6Z" fill="#2A3644"/><path d="M94.9 71.5 L96.9 71.7 L98.6 72.6 L99.9 74.1 L100.5 75.9 L100.4 77.9 L99.6 79.7 L98.2 81.0 L96.4 81.8 L94.5 81.8 L92.6 81.1 L91.2 79.8 L90.4 78.0 L89.2 77.5 L90.1 79.3 L91.5 80.6 L93.3 81.3 L95.3 81.3 L97.1 80.5 L98.5 79.2 L99.3 77.4 L99.4 75.4 L98.7 73.6 L97.5 72.1 L95.7 71.2 L93.8 71.0Z" fill="#7F96AE"/><path d="M95.0 71.9 L96.7 72.1 L98.3 72.9 L99.5 74.3 L100.1 76.0 L100.0 77.8 L99.3 79.4 L98.0 80.7 L96.3 81.4 L94.5 81.4 L92.9 80.8 L91.5 79.6 L90.8 77.9 L90.2 77.7 L91.0 79.3 L92.3 80.5 L94.0 81.2 L95.8 81.1 L97.4 80.4 L98.7 79.2 L99.5 77.5 L99.5 75.7 L98.9 74.1 L97.8 72.7 L96.2 71.9 L94.4 71.7Z" fill="#A4A59E"/><path d="M98.3 73.0 L100.2 73.2 L102.0 74.1 L103.3 75.6 L103.9 77.5 L103.8 79.4 L103.0 81.2 L101.6 82.6 L99.8 83.3 L97.9 83.3 L96.0 82.6 L94.6 81.3 L93.7 79.6 L90.4 78.0 L91.2 79.8 L92.6 81.1 L94.5 81.8 L96.4 81.8 L98.2 81.0 L99.6 79.7 L100.4 77.9 L100.5 75.9 L99.9 74.1 L98.6 72.6 L96.9 71.7 L94.9 71.5Z" fill="#3A4A5E"/><path d="M93.6 83.7 L101.4 82.4 L99.3 84.2 Z" fill="#34424F"/><path d="M98.9 74.3 L100.5 74.5 L102.0 75.3 L103.1 76.5 L103.6 78.1 L103.6 79.8 L102.9 81.3 L101.7 82.4 L100.2 83.1 L98.5 83.1 L97.0 82.5 L95.7 81.4 L95.0 79.9 L93.5 79.2 L94.2 80.7 L95.4 81.8 L97.0 82.4 L98.6 82.4 L100.2 81.7 L101.3 80.6 L102.0 79.1 L102.1 77.4 L101.6 75.8 L100.5 74.6 L99.0 73.8 L97.3 73.6Z" fill="#2A3644"/><path d="M113.6 74.2 L115.5 74.4 L117.3 75.3 L118.5 76.8 L119.2 78.6 L119.1 80.6 L118.3 82.4 L116.9 83.7 L115.1 84.5 L113.1 84.5 L111.3 83.8 L109.9 82.5 L109.0 80.7 L107.9 80.2 L108.7 82.0 L110.2 83.3 L112.0 84.0 L113.9 83.9 L115.8 83.2 L117.2 81.8 L118.0 80.1 L118.0 78.1 L117.4 76.3 L116.1 74.8 L114.4 73.9 L112.4 73.7Z" fill="#7F96AE"/><path d="M113.6 74.6 L115.4 74.8 L117.0 75.6 L118.2 77.0 L118.8 78.7 L118.7 80.5 L118.0 82.1 L116.7 83.4 L115.0 84.1 L113.2 84.1 L111.5 83.4 L110.2 82.2 L109.4 80.6 L108.8 80.3 L109.6 82.0 L111.0 83.2 L112.6 83.8 L114.4 83.8 L116.1 83.1 L117.4 81.9 L118.1 80.2 L118.2 78.4 L117.6 76.7 L116.4 75.4 L114.8 74.5 L113.1 74.3Z" fill="#A4A59E"/><path d="M117.0 75.7 L118.9 75.9 L120.6 76.8 L121.9 78.3 L122.6 80.1 L122.5 82.1 L121.7 83.9 L120.3 85.2 L118.5 86.0 L116.5 86.0 L114.7 85.3 L113.3 84.0 L112.4 82.2 L109.0 80.7 L109.9 82.5 L111.3 83.8 L113.1 84.5 L115.1 84.5 L116.9 83.7 L118.3 82.4 L119.1 80.6 L119.2 78.6 L118.5 76.8 L117.3 75.3 L115.5 74.4 L113.6 74.2Z" fill="#3A4A5E"/><path d="M112.2 86.3 L120.0 85.0 L117.9 86.9 Z" fill="#34424F"/><path d="M117.6 77.0 L119.2 77.2 L120.7 77.9 L121.8 79.2 L122.3 80.8 L122.2 82.4 L121.6 83.9 L120.4 85.1 L118.8 85.7 L117.2 85.8 L115.6 85.2 L114.4 84.0 L113.7 82.6 L112.1 81.9 L112.8 83.4 L114.1 84.5 L115.6 85.1 L117.3 85.0 L118.8 84.4 L120.0 83.2 L120.7 81.7 L120.8 80.1 L120.2 78.5 L119.1 77.2 L117.7 76.5 L116.0 76.3Z" fill="#2A3644"/><path d="M136.4 78.7 L138.9 79.0 L141.0 80.1 L142.6 82.0 L143.4 84.3 L143.3 86.7 L142.3 88.9 L140.6 90.6 L138.3 91.6 L135.9 91.6 L133.6 90.7 L131.8 89.1 L130.7 86.9 L129.3 86.2 L130.4 88.4 L132.2 90.1 L134.4 91.0 L136.9 90.9 L139.1 90.0 L140.9 88.3 L141.9 86.1 L142.0 83.6 L141.2 81.3 L139.6 79.5 L137.4 78.3 L135.0 78.1Z" fill="#7F96AE"/><path d="M136.5 79.3 L138.7 79.5 L140.7 80.5 L142.2 82.2 L142.9 84.3 L142.8 86.6 L141.9 88.6 L140.3 90.2 L138.2 91.1 L136.0 91.1 L133.9 90.3 L132.2 88.8 L131.2 86.8 L130.5 86.4 L131.5 88.5 L133.1 90.0 L135.2 90.8 L137.5 90.7 L139.6 89.9 L141.2 88.3 L142.1 86.3 L142.2 84.0 L141.5 81.9 L140.0 80.2 L138.0 79.2 L135.8 78.9Z" fill="#A4A59E"/><path d="M140.7 80.6 L143.1 80.9 L145.3 82.0 L146.9 83.9 L147.7 86.2 L147.5 88.6 L146.5 90.8 L144.8 92.5 L142.5 93.5 L140.1 93.5 L137.8 92.6 L136.0 91.0 L134.9 88.8 L130.7 86.9 L131.8 89.1 L133.6 90.7 L135.9 91.6 L138.3 91.6 L140.6 90.6 L142.3 88.9 L143.3 86.7 L143.4 84.3 L142.6 82.0 L141.0 80.1 L138.9 79.0 L136.4 78.7Z" fill="#3A4A5E"/><path d="M134.7 93.9 L144.5 92.3 L141.9 94.6 Z" fill="#34424F"/><path d="M141.4 82.3 L143.5 82.5 L145.3 83.4 L146.7 85.0 L147.3 87.0 L147.2 89.0 L146.4 90.9 L144.9 92.4 L143.0 93.2 L140.9 93.2 L139.0 92.5 L137.4 91.1 L136.5 89.2 L134.6 88.3 L135.5 90.2 L137.0 91.6 L139.0 92.3 L141.1 92.3 L143.0 91.5 L144.5 90.1 L145.3 88.2 L145.4 86.1 L144.7 84.1 L143.4 82.6 L141.5 81.6 L139.5 81.4Z" fill="#2A3644"/><path d="M-9.2 99.6 L-7.7 99.7 L-6.4 100.4 L-5.5 101.5 L-5.0 102.9 L-5.0 104.4 L-5.6 105.7 L-6.7 106.7 L-8.0 107.3 L-9.5 107.3 L-10.9 106.8 L-12.0 105.8 L-12.6 104.5 L-13.5 104.1 L-12.8 105.4 L-11.7 106.4 L-10.4 106.9 L-8.9 106.9 L-7.5 106.4 L-6.5 105.3 L-5.9 104.0 L-5.8 102.5 L-6.3 101.1 L-7.3 100.0 L-8.6 99.4 L-10.0 99.2Z" fill="#7F96AE"/><path d="M-9.1 99.9 L-7.8 100.0 L-6.6 100.7 L-5.7 101.7 L-5.3 103.0 L-5.3 104.3 L-5.9 105.5 L-6.9 106.5 L-8.1 107.0 L-9.5 107.0 L-10.7 106.5 L-11.7 105.6 L-12.3 104.4 L-12.7 104.2 L-12.1 105.4 L-11.1 106.3 L-9.9 106.8 L-8.5 106.8 L-7.3 106.3 L-6.3 105.3 L-5.8 104.1 L-5.7 102.8 L-6.2 101.5 L-7.0 100.5 L-8.2 99.9 L-9.6 99.7Z" fill="#A4A59E"/><path d="M-6.1 101.0 L-4.6 101.2 L-3.3 101.8 L-2.3 102.9 L-1.9 104.3 L-1.9 105.8 L-2.5 107.1 L-3.6 108.1 L-4.9 108.7 L-6.4 108.7 L-7.8 108.2 L-8.8 107.2 L-9.5 105.9 L-12.6 104.5 L-12.0 105.8 L-10.9 106.8 L-9.5 107.3 L-8.0 107.3 L-6.7 106.7 L-5.6 105.7 L-5.0 104.4 L-5.0 102.9 L-5.5 101.5 L-6.4 100.4 L-7.7 99.7 L-9.2 99.6Z" fill="#3A4A5E"/><path d="M148.8 99.6 L150.3 99.7 L151.6 100.4 L152.5 101.5 L153.0 102.9 L153.0 104.4 L152.4 105.7 L151.3 106.7 L150.0 107.3 L148.5 107.3 L147.1 106.8 L146.0 105.8 L145.4 104.5 L144.5 104.1 L145.2 105.4 L146.3 106.4 L147.6 106.9 L149.1 106.9 L150.5 106.4 L151.5 105.3 L152.1 104.0 L152.2 102.5 L151.7 101.1 L150.7 100.0 L149.4 99.4 L148.0 99.2Z" fill="#7F96AE"/><path d="M148.9 99.9 L150.2 100.0 L151.4 100.7 L152.3 101.7 L152.7 103.0 L152.7 104.3 L152.1 105.5 L151.1 106.5 L149.9 107.0 L148.5 107.0 L147.3 106.5 L146.3 105.6 L145.7 104.4 L145.3 104.2 L145.9 105.4 L146.9 106.3 L148.1 106.8 L149.5 106.8 L150.7 106.3 L151.7 105.3 L152.2 104.1 L152.3 102.8 L151.8 101.5 L151.0 100.5 L149.8 99.9 L148.4 99.7Z" fill="#A4A59E"/><path d="M151.9 101.0 L153.4 101.2 L154.7 101.8 L155.7 102.9 L156.1 104.3 L156.1 105.8 L155.5 107.1 L154.4 108.1 L153.1 108.7 L151.6 108.7 L150.2 108.2 L149.2 107.2 L148.5 105.9 L145.4 104.5 L146.0 105.8 L147.1 106.8 L148.5 107.3 L150.0 107.3 L151.3 106.7 L152.4 105.7 L153.0 104.4 L153.0 102.9 L152.5 101.5 L151.6 100.4 L150.3 99.7 L148.8 99.6Z" fill="#3A4A5E"/><path d="M118.7 93.0 L121.1 93.2 L123.3 94.3 L124.8 96.2 L125.7 98.5 L125.5 100.9 L124.5 103.2 L122.8 104.9 L120.5 105.8 L118.1 105.8 L115.8 105.0 L114.0 103.3 L112.9 101.1 L111.5 100.5 L112.6 102.7 L114.4 104.3 L116.7 105.2 L119.1 105.2 L121.4 104.2 L123.1 102.5 L124.1 100.3 L124.2 97.8 L123.4 95.5 L121.8 93.7 L119.7 92.6 L117.2 92.3Z" fill="#7F96AE"/><path d="M118.7 93.5 L120.9 93.7 L122.9 94.7 L124.4 96.4 L125.1 98.6 L125.0 100.8 L124.1 102.9 L122.5 104.4 L120.4 105.3 L118.2 105.3 L116.1 104.5 L114.4 103.0 L113.4 101.0 L112.7 100.7 L113.7 102.7 L115.4 104.2 L117.5 105.0 L119.7 105.0 L121.8 104.1 L123.4 102.5 L124.3 100.5 L124.4 98.2 L123.7 96.1 L122.2 94.4 L120.2 93.4 L118.0 93.2Z" fill="#A4A59E"/><path d="M122.9 94.9 L125.3 95.1 L127.5 96.2 L129.1 98.1 L129.9 100.4 L129.8 102.8 L128.8 105.1 L127.0 106.8 L124.8 107.7 L122.3 107.7 L120.0 106.9 L118.2 105.2 L117.2 103.0 L112.9 101.1 L114.0 103.3 L115.8 105.0 L118.1 105.8 L120.5 105.8 L122.8 104.9 L124.5 103.2 L125.5 100.9 L125.7 98.5 L124.8 96.2 L123.3 94.3 L121.1 93.2 L118.7 93.0Z" fill="#3A4A5E"/><path d="M116.9 108.2 L126.7 106.5 L124.1 108.8 Z" fill="#34424F"/><path d="M123.6 96.5 L125.7 96.7 L127.5 97.6 L128.9 99.2 L129.6 101.2 L129.5 103.3 L128.6 105.2 L127.1 106.6 L125.2 107.4 L123.1 107.4 L121.2 106.7 L119.7 105.3 L118.8 103.4 L116.8 102.5 L117.7 104.4 L119.3 105.8 L121.2 106.6 L123.3 106.5 L125.2 105.7 L126.7 104.3 L127.5 102.4 L127.6 100.3 L126.9 98.4 L125.6 96.8 L123.7 95.8 L121.7 95.6Z" fill="#2A3644"/><path d="M22.7 96.5 L25.1 96.8 L27.3 97.9 L28.8 99.7 L29.7 102.0 L29.5 104.5 L28.5 106.7 L26.8 108.4 L24.5 109.4 L22.1 109.4 L19.8 108.5 L18.0 106.9 L16.9 104.7 L15.5 104.0 L16.6 106.2 L18.4 107.9 L20.7 108.7 L23.1 108.7 L25.4 107.8 L27.1 106.1 L28.1 103.8 L28.2 101.4 L27.4 99.1 L25.8 97.2 L23.7 96.1 L21.2 95.9Z" fill="#7F96AE"/><path d="M22.7 97.0 L24.9 97.3 L26.9 98.3 L28.4 100.0 L29.1 102.1 L29.0 104.4 L28.1 106.4 L26.5 108.0 L24.4 108.8 L22.2 108.9 L20.1 108.1 L18.4 106.6 L17.4 104.5 L16.7 104.2 L17.7 106.2 L19.4 107.8 L21.5 108.6 L23.7 108.5 L25.8 107.7 L27.4 106.1 L28.3 104.0 L28.4 101.8 L27.7 99.7 L26.2 98.0 L24.2 96.9 L22.0 96.7Z" fill="#A4A59E"/><path d="M26.9 98.4 L29.3 98.7 L31.5 99.8 L33.1 101.6 L33.9 103.9 L33.8 106.4 L32.8 108.6 L31.0 110.3 L28.8 111.3 L26.3 111.3 L24.0 110.4 L22.2 108.8 L21.2 106.6 L16.9 104.7 L18.0 106.9 L19.8 108.5 L22.1 109.4 L24.5 109.4 L26.8 108.4 L28.5 106.7 L29.5 104.5 L29.7 102.0 L28.8 99.7 L27.3 97.9 L25.1 96.8 L22.7 96.5Z" fill="#3A4A5E"/><path d="M20.9 111.7 L30.7 110.1 L28.1 112.4 Z" fill="#34424F"/><path d="M27.6 100.0 L29.7 100.2 L31.5 101.2 L32.9 102.8 L33.6 104.7 L33.5 106.8 L32.6 108.7 L31.1 110.2 L29.2 110.9 L27.1 111.0 L25.2 110.2 L23.7 108.8 L22.8 107.0 L20.8 106.1 L21.7 108.0 L23.3 109.4 L25.2 110.1 L27.3 110.1 L29.2 109.3 L30.7 107.8 L31.5 105.9 L31.6 103.9 L30.9 101.9 L29.6 100.3 L27.7 99.4 L25.7 99.2Z" fill="#2A3644"/><path d="M0.7 94.6 L2.6 94.8 L4.4 95.7 L5.7 97.2 L6.3 99.1 L6.2 101.0 L5.4 102.8 L4.0 104.2 L2.2 104.9 L0.3 104.9 L-1.6 104.2 L-3.0 102.9 L-3.9 101.2 L-5.0 100.6 L-4.2 102.4 L-2.7 103.7 L-0.9 104.4 L1.1 104.4 L2.9 103.6 L4.3 102.3 L5.1 100.5 L5.2 98.5 L4.5 96.7 L3.2 95.2 L1.5 94.3 L-0.4 94.1Z" fill="#7F96AE"/><path d="M0.7 95.0 L2.5 95.2 L4.1 96.1 L5.3 97.4 L5.9 99.1 L5.8 100.9 L5.1 102.6 L3.8 103.8 L2.1 104.5 L0.3 104.5 L-1.4 103.9 L-2.7 102.7 L-3.5 101.1 L-4.0 100.8 L-3.3 102.4 L-1.9 103.6 L-0.3 104.3 L1.5 104.2 L3.2 103.6 L4.5 102.3 L5.2 100.7 L5.3 98.9 L4.7 97.2 L3.5 95.8 L2.0 95.0 L0.2 94.8Z" fill="#A4A59E"/><path d="M4.1 96.2 L6.0 96.4 L7.8 97.3 L9.0 98.7 L9.7 100.6 L9.6 102.5 L8.8 104.3 L7.4 105.7 L5.6 106.4 L3.6 106.5 L1.8 105.8 L0.4 104.4 L-0.5 102.7 L-3.9 101.2 L-3.0 102.9 L-1.6 104.2 L0.3 104.9 L2.2 104.9 L4.0 104.2 L5.4 102.8 L6.2 101.0 L6.3 99.1 L5.7 97.2 L4.4 95.7 L2.6 94.8 L0.7 94.6Z" fill="#3A4A5E"/><path d="M-0.7 106.8 L7.1 105.5 L5.1 107.3 Z" fill="#34424F"/><path d="M4.7 97.5 L6.3 97.6 L7.8 98.4 L8.9 99.6 L9.4 101.2 L9.4 102.9 L8.7 104.4 L7.5 105.5 L5.9 106.2 L4.3 106.2 L2.7 105.6 L1.5 104.5 L0.8 103.0 L-0.8 102.3 L-0.0 103.8 L1.2 104.9 L2.7 105.5 L4.4 105.5 L5.9 104.9 L7.1 103.7 L7.8 102.2 L7.9 100.5 L7.3 98.9 L6.2 97.7 L4.8 96.9 L3.1 96.8Z" fill="#2A3644"/><path d="M158.7 94.6 L160.6 94.8 L162.4 95.7 L163.7 97.2 L164.3 99.1 L164.2 101.0 L163.4 102.8 L162.0 104.2 L160.2 104.9 L158.3 104.9 L156.4 104.2 L155.0 102.9 L154.1 101.2 L153.0 100.6 L153.8 102.4 L155.3 103.7 L157.1 104.4 L159.1 104.4 L160.9 103.6 L162.3 102.3 L163.1 100.5 L163.2 98.5 L162.5 96.7 L161.2 95.2 L159.5 94.3 L157.6 94.1Z" fill="#7F96AE"/><path d="M158.7 95.0 L160.5 95.2 L162.1 96.1 L163.3 97.4 L163.9 99.1 L163.8 100.9 L163.1 102.6 L161.8 103.8 L160.1 104.5 L158.3 104.5 L156.6 103.9 L155.3 102.7 L154.5 101.1 L154.0 100.8 L154.7 102.4 L156.1 103.6 L157.7 104.3 L159.5 104.2 L161.2 103.6 L162.5 102.3 L163.2 100.7 L163.3 98.9 L162.7 97.2 L161.5 95.8 L160.0 95.0 L158.2 94.8Z" fill="#A4A59E"/><path d="M162.1 96.2 L164.0 96.4 L165.8 97.3 L167.0 98.7 L167.7 100.6 L167.6 102.5 L166.8 104.3 L165.4 105.7 L163.6 106.4 L161.6 106.5 L159.8 105.8 L158.4 104.4 L157.5 102.7 L154.1 101.2 L155.0 102.9 L156.4 104.2 L158.3 104.9 L160.2 104.9 L162.0 104.2 L163.4 102.8 L164.2 101.0 L164.3 99.1 L163.7 97.2 L162.4 95.7 L160.6 94.8 L158.7 94.6Z" fill="#3A4A5E"/><path d="M157.3 106.8 L165.1 105.5 L163.1 107.3 Z" fill="#34424F"/><path d="M162.7 97.5 L164.3 97.6 L165.8 98.4 L166.9 99.6 L167.4 101.2 L167.4 102.9 L166.7 104.4 L165.5 105.5 L163.9 106.2 L162.3 106.2 L160.7 105.6 L159.5 104.5 L158.8 103.0 L157.2 102.3 L158.0 103.8 L159.2 104.9 L160.7 105.5 L162.4 105.5 L163.9 104.9 L165.1 103.7 L165.8 102.2 L165.9 100.5 L165.3 98.9 L164.2 97.7 L162.8 96.9 L161.1 96.8Z" fill="#2A3644"/><path d="M0.7 108.9 L2.6 109.1 L4.4 110.0 L5.7 111.4 L6.3 113.3 L6.2 115.2 L5.4 117.0 L4.0 118.4 L2.2 119.1 L0.3 119.2 L-1.6 118.5 L-3.0 117.1 L-3.9 115.4 L-5.0 114.9 L-4.2 116.6 L-2.7 117.9 L-0.9 118.6 L1.1 118.6 L2.9 117.9 L4.3 116.5 L5.1 114.7 L5.2 112.8 L4.5 110.9 L3.2 109.4 L1.5 108.5 L-0.4 108.3Z" fill="#7F96AE"/><path d="M0.7 109.3 L2.5 109.5 L4.1 110.3 L5.3 111.6 L5.9 113.3 L5.8 115.1 L5.1 116.8 L3.8 118.0 L2.1 118.7 L0.3 118.7 L-1.4 118.1 L-2.7 116.9 L-3.5 115.3 L-4.0 115.0 L-3.3 116.6 L-1.9 117.8 L-0.3 118.5 L1.5 118.5 L3.2 117.8 L4.5 116.5 L5.2 114.9 L5.3 113.1 L4.7 111.4 L3.5 110.0 L2.0 109.2 L0.2 109.0Z" fill="#A4A59E"/><path d="M4.1 110.4 L6.0 110.6 L7.8 111.5 L9.0 113.0 L9.7 114.8 L9.6 116.8 L8.8 118.5 L7.4 119.9 L5.6 120.6 L3.6 120.7 L1.8 120.0 L0.4 118.7 L-0.5 116.9 L-3.9 115.4 L-3.0 117.1 L-1.6 118.5 L0.3 119.2 L2.2 119.1 L4.0 118.4 L5.4 117.0 L6.2 115.2 L6.3 113.3 L5.7 111.4 L4.4 110.0 L2.6 109.1 L0.7 108.9Z" fill="#3A4A5E"/><path d="M-0.7 121.0 L7.1 119.7 L5.1 121.5 Z" fill="#34424F"/><path d="M4.7 111.7 L6.3 111.8 L7.8 112.6 L8.9 113.9 L9.4 115.4 L9.4 117.1 L8.7 118.6 L7.5 119.8 L5.9 120.4 L4.3 120.4 L2.7 119.8 L1.5 118.7 L0.8 117.2 L-0.8 116.5 L-0.0 118.0 L1.2 119.1 L2.7 119.7 L4.4 119.7 L5.9 119.1 L7.1 117.9 L7.8 116.4 L7.9 114.7 L7.3 113.2 L6.2 111.9 L4.8 111.1 L3.1 111.0Z" fill="#2A3644"/><path d="M158.7 108.9 L160.6 109.1 L162.4 110.0 L163.7 111.4 L164.3 113.3 L164.2 115.2 L163.4 117.0 L162.0 118.4 L160.2 119.1 L158.3 119.2 L156.4 118.5 L155.0 117.1 L154.1 115.4 L153.0 114.9 L153.8 116.6 L155.3 117.9 L157.1 118.6 L159.1 118.6 L160.9 117.9 L162.3 116.5 L163.1 114.7 L163.2 112.8 L162.5 110.9 L161.2 109.4 L159.5 108.5 L157.6 108.3Z" fill="#7F96AE"/><path d="M158.7 109.3 L160.5 109.5 L162.1 110.3 L163.3 111.6 L163.9 113.3 L163.8 115.1 L163.1 116.8 L161.8 118.0 L160.1 118.7 L158.3 118.7 L156.6 118.1 L155.3 116.9 L154.5 115.3 L154.0 115.0 L154.7 116.6 L156.1 117.8 L157.7 118.5 L159.5 118.5 L161.2 117.8 L162.5 116.5 L163.2 114.9 L163.3 113.1 L162.7 111.4 L161.5 110.0 L160.0 109.2 L158.2 109.0Z" fill="#A4A59E"/><path d="M162.1 110.4 L164.0 110.6 L165.8 111.5 L167.0 113.0 L167.7 114.8 L167.6 116.8 L166.8 118.5 L165.4 119.9 L163.6 120.6 L161.6 120.7 L159.8 120.0 L158.4 118.7 L157.5 116.9 L154.1 115.4 L155.0 117.1 L156.4 118.5 L158.3 119.2 L160.2 119.1 L162.0 118.4 L163.4 117.0 L164.2 115.2 L164.3 113.3 L163.7 111.4 L162.4 110.0 L160.6 109.1 L158.7 108.9Z" fill="#3A4A5E"/><path d="M157.3 121.0 L165.1 119.7 L163.1 121.5 Z" fill="#34424F"/><path d="M162.7 111.7 L164.3 111.8 L165.8 112.6 L166.9 113.9 L167.4 115.4 L167.4 117.1 L166.7 118.6 L165.5 119.8 L163.9 120.4 L162.3 120.4 L160.7 119.8 L159.5 118.7 L158.8 117.2 L157.2 116.5 L158.0 118.0 L159.2 119.1 L160.7 119.7 L162.4 119.7 L163.9 119.1 L165.1 117.9 L165.8 116.4 L165.9 114.7 L165.3 113.2 L164.2 111.9 L162.8 111.1 L161.1 111.0Z" fill="#2A3644"/><path d="M30.9 108.9 L32.9 109.1 L34.6 110.0 L35.9 111.4 L36.5 113.3 L36.4 115.2 L35.6 117.0 L34.2 118.4 L32.4 119.1 L30.5 119.2 L28.6 118.5 L27.2 117.1 L26.4 115.4 L25.2 114.9 L26.1 116.6 L27.5 117.9 L29.3 118.6 L31.3 118.6 L33.1 117.9 L34.5 116.5 L35.3 114.7 L35.4 112.8 L34.7 110.9 L33.5 109.4 L31.7 108.5 L29.8 108.3Z" fill="#7F96AE"/><path d="M31.0 109.3 L32.7 109.5 L34.3 110.3 L35.5 111.6 L36.1 113.3 L36.0 115.1 L35.3 116.8 L34.0 118.0 L32.3 118.7 L30.5 118.7 L28.9 118.1 L27.5 116.9 L26.8 115.3 L26.2 115.0 L27.0 116.6 L28.3 117.8 L30.0 118.5 L31.8 118.5 L33.4 117.8 L34.7 116.5 L35.5 114.9 L35.5 113.1 L34.9 111.4 L33.8 110.0 L32.2 109.2 L30.4 109.0Z" fill="#A4A59E"/><path d="M34.3 110.4 L36.2 110.6 L38.0 111.5 L39.3 113.0 L39.9 114.8 L39.8 116.8 L39.0 118.5 L37.6 119.9 L35.8 120.6 L33.9 120.7 L32.0 120.0 L30.6 118.7 L29.7 116.9 L26.4 115.4 L27.2 117.1 L28.6 118.5 L30.5 119.2 L32.4 119.1 L34.2 118.4 L35.6 117.0 L36.4 115.2 L36.5 113.3 L35.9 111.4 L34.6 110.0 L32.9 109.1 L30.9 108.9Z" fill="#3A4A5E"/><path d="M29.6 121.0 L37.4 119.7 L35.3 121.5 Z" fill="#34424F"/><path d="M34.9 111.7 L36.5 111.8 L38.0 112.6 L39.1 113.9 L39.6 115.4 L39.6 117.1 L38.9 118.6 L37.7 119.8 L36.2 120.4 L34.5 120.4 L33.0 119.8 L31.7 118.7 L31.0 117.2 L29.5 116.5 L30.2 118.0 L31.4 119.1 L33.0 119.7 L34.6 119.7 L36.2 119.1 L37.3 117.9 L38.0 116.4 L38.1 114.7 L37.6 113.2 L36.5 111.9 L35.0 111.1 L33.3 111.0Z" fill="#2A3644"/><path d="M100.3 126.6 L102.2 126.8 L103.9 127.7 L105.2 129.2 L105.9 131.1 L105.8 133.0 L105.0 134.8 L103.6 136.2 L101.8 136.9 L99.8 136.9 L98.0 136.2 L96.5 134.9 L95.7 133.2 L94.5 132.6 L95.4 134.4 L96.8 135.7 L98.7 136.4 L100.6 136.4 L102.4 135.6 L103.8 134.3 L104.6 132.5 L104.7 130.5 L104.1 128.7 L102.8 127.2 L101.1 126.3 L99.1 126.1Z" fill="#7F96AE"/><path d="M100.3 127.0 L102.1 127.2 L103.7 128.1 L104.9 129.4 L105.4 131.1 L105.4 132.9 L104.6 134.6 L103.3 135.8 L101.7 136.5 L99.9 136.5 L98.2 135.9 L96.9 134.7 L96.1 133.1 L95.5 132.8 L96.3 134.4 L97.6 135.6 L99.3 136.3 L101.1 136.2 L102.8 135.6 L104.1 134.3 L104.8 132.7 L104.9 130.9 L104.3 129.2 L103.1 127.8 L101.5 127.0 L99.7 126.8Z" fill="#A4A59E"/><path d="M103.6 128.2 L105.6 128.4 L107.3 129.3 L108.6 130.7 L109.2 132.6 L109.1 134.5 L108.3 136.3 L106.9 137.7 L105.1 138.4 L103.2 138.5 L101.4 137.8 L99.9 136.4 L99.1 134.7 L95.7 133.2 L96.5 134.9 L98.0 136.2 L99.8 136.9 L101.8 136.9 L103.6 136.2 L105.0 134.8 L105.8 133.0 L105.9 131.1 L105.2 129.2 L103.9 127.7 L102.2 126.8 L100.3 126.6Z" fill="#3A4A5E"/><path d="M98.9 138.8 L106.7 137.5 L104.6 139.3 Z" fill="#34424F"/><path d="M104.2 129.5 L105.9 129.6 L107.4 130.4 L108.4 131.6 L109.0 133.2 L108.9 134.9 L108.2 136.4 L107.0 137.5 L105.5 138.2 L103.8 138.2 L102.3 137.6 L101.1 136.5 L100.3 135.0 L98.8 134.3 L99.5 135.8 L100.7 136.9 L102.3 137.5 L104.0 137.5 L105.5 136.9 L106.7 135.7 L107.4 134.2 L107.4 132.5 L106.9 130.9 L105.8 129.7 L104.3 128.9 L102.7 128.8Z" fill="#2A3644"/><path d="M137.6 116.0 L139.5 116.2 L141.3 117.1 L142.5 118.5 L143.2 120.4 L143.1 122.3 L142.3 124.1 L140.9 125.5 L139.1 126.2 L137.1 126.3 L135.3 125.6 L133.9 124.3 L133.0 122.5 L131.9 122.0 L132.7 123.7 L134.2 125.1 L136.0 125.8 L137.9 125.7 L139.8 125.0 L141.2 123.6 L142.0 121.8 L142.0 119.9 L141.4 118.0 L140.1 116.6 L138.4 115.6 L136.4 115.5Z" fill="#7F96AE"/><path d="M137.6 116.4 L139.4 116.6 L141.0 117.4 L142.2 118.8 L142.8 120.5 L142.7 122.2 L142.0 123.9 L140.7 125.1 L139.0 125.8 L137.2 125.9 L135.5 125.2 L134.2 124.0 L133.4 122.4 L132.8 122.1 L133.6 123.7 L135.0 125.0 L136.6 125.6 L138.4 125.6 L140.1 124.9 L141.4 123.6 L142.1 122.0 L142.2 120.2 L141.6 118.5 L140.4 117.1 L138.8 116.3 L137.1 116.1Z" fill="#A4A59E"/><path d="M141.0 117.5 L142.9 117.7 L144.6 118.6 L145.9 120.1 L146.6 121.9 L146.5 123.9 L145.7 125.6 L144.3 127.0 L142.5 127.8 L140.5 127.8 L138.7 127.1 L137.3 125.8 L136.4 124.0 L133.0 122.5 L133.9 124.3 L135.3 125.6 L137.1 126.3 L139.1 126.2 L140.9 125.5 L142.3 124.1 L143.1 122.3 L143.2 120.4 L142.5 118.5 L141.3 117.1 L139.5 116.2 L137.6 116.0Z" fill="#3A4A5E"/><path d="M136.2 128.1 L144.0 126.8 L141.9 128.6 Z" fill="#34424F"/><path d="M141.6 118.8 L143.2 119.0 L144.7 119.7 L145.8 121.0 L146.3 122.5 L146.2 124.2 L145.6 125.7 L144.4 126.9 L142.8 127.5 L141.2 127.5 L139.6 126.9 L138.4 125.8 L137.7 124.3 L136.1 123.6 L136.8 125.1 L138.1 126.3 L139.6 126.8 L141.3 126.8 L142.8 126.2 L144.0 125.0 L144.7 123.5 L144.8 121.8 L144.2 120.3 L143.1 119.0 L141.7 118.3 L140.0 118.1Z" fill="#2A3644"/><path d="M-9.7 125.7 L-7.8 125.9 L-6.1 126.8 L-4.8 128.3 L-4.1 130.2 L-4.2 132.1 L-5.0 133.9 L-6.4 135.3 L-8.2 136.0 L-10.2 136.0 L-12.0 135.3 L-13.5 134.0 L-14.3 132.3 L-15.5 131.8 L-14.6 133.5 L-13.2 134.8 L-11.3 135.5 L-9.4 135.5 L-7.6 134.8 L-6.2 133.4 L-5.4 131.6 L-5.3 129.7 L-5.9 127.8 L-7.2 126.3 L-8.9 125.4 L-10.9 125.2Z" fill="#7F96AE"/><path d="M-9.7 126.2 L-7.9 126.3 L-6.3 127.2 L-5.1 128.5 L-4.6 130.2 L-4.6 132.0 L-5.4 133.7 L-6.7 134.9 L-8.3 135.6 L-10.1 135.6 L-11.8 135.0 L-13.1 133.8 L-13.9 132.2 L-14.5 131.9 L-13.7 133.5 L-12.4 134.7 L-10.7 135.4 L-8.9 135.4 L-7.2 134.7 L-5.9 133.4 L-5.2 131.8 L-5.1 130.0 L-5.7 128.3 L-6.9 126.9 L-8.5 126.1 L-10.3 125.9Z" fill="#A4A59E"/><path d="M-6.4 127.3 L-4.4 127.5 L-2.7 128.4 L-1.4 129.8 L-0.8 131.7 L-0.9 133.6 L-1.7 135.4 L-3.1 136.8 L-4.9 137.5 L-6.8 137.6 L-8.6 136.9 L-10.1 135.5 L-10.9 133.8 L-14.3 132.3 L-13.5 134.0 L-12.0 135.3 L-10.2 136.0 L-8.2 136.0 L-6.4 135.3 L-5.0 133.9 L-4.2 132.1 L-4.1 130.2 L-4.8 128.3 L-6.1 126.8 L-7.8 125.9 L-9.7 125.7Z" fill="#3A4A5E"/><path d="M-11.1 137.9 L-3.3 136.6 L-5.4 138.4 Z" fill="#34424F"/><path d="M-5.8 128.6 L-4.1 128.7 L-2.6 129.5 L-1.6 130.8 L-1.0 132.3 L-1.1 134.0 L-1.8 135.5 L-3.0 136.7 L-4.5 137.3 L-6.2 137.3 L-7.7 136.7 L-8.9 135.6 L-9.7 134.1 L-11.2 133.4 L-10.5 134.9 L-9.3 136.0 L-7.7 136.6 L-6.0 136.6 L-4.5 136.0 L-3.3 134.8 L-2.6 133.3 L-2.6 131.6 L-3.1 130.1 L-4.2 128.8 L-5.7 128.0 L-7.3 127.9Z" fill="#2A3644"/><path d="M148.3 125.7 L150.2 125.9 L151.9 126.8 L153.2 128.3 L153.9 130.2 L153.8 132.1 L153.0 133.9 L151.6 135.3 L149.8 136.0 L147.8 136.0 L146.0 135.3 L144.5 134.0 L143.7 132.3 L142.5 131.8 L143.4 133.5 L144.8 134.8 L146.7 135.5 L148.6 135.5 L150.4 134.8 L151.8 133.4 L152.6 131.6 L152.7 129.7 L152.1 127.8 L150.8 126.3 L149.1 125.4 L147.1 125.2Z" fill="#7F96AE"/><path d="M148.3 126.2 L150.1 126.3 L151.7 127.2 L152.9 128.5 L153.4 130.2 L153.4 132.0 L152.6 133.7 L151.3 134.9 L149.7 135.6 L147.9 135.6 L146.2 135.0 L144.9 133.8 L144.1 132.2 L143.5 131.9 L144.3 133.5 L145.6 134.7 L147.3 135.4 L149.1 135.4 L150.8 134.7 L152.1 133.4 L152.8 131.8 L152.9 130.0 L152.3 128.3 L151.1 126.9 L149.5 126.1 L147.7 125.9Z" fill="#A4A59E"/><path d="M151.6 127.3 L153.6 127.5 L155.3 128.4 L156.6 129.8 L157.2 131.7 L157.1 133.6 L156.3 135.4 L154.9 136.8 L153.1 137.5 L151.2 137.6 L149.4 136.9 L147.9 135.5 L147.1 133.8 L143.7 132.3 L144.5 134.0 L146.0 135.3 L147.8 136.0 L149.8 136.0 L151.6 135.3 L153.0 133.9 L153.8 132.1 L153.9 130.2 L153.2 128.3 L151.9 126.8 L150.2 125.9 L148.3 125.7Z" fill="#3A4A5E"/><path d="M146.9 137.9 L154.7 136.6 L152.6 138.4 Z" fill="#34424F"/><path d="M152.2 128.6 L153.9 128.7 L155.4 129.5 L156.4 130.8 L157.0 132.3 L156.9 134.0 L156.2 135.5 L155.0 136.7 L153.5 137.3 L151.8 137.3 L150.3 136.7 L149.1 135.6 L148.3 134.1 L146.8 133.4 L147.5 134.9 L148.7 136.0 L150.3 136.6 L152.0 136.6 L153.5 136.0 L154.7 134.8 L155.4 133.3 L155.4 131.6 L154.9 130.1 L153.8 128.8 L152.3 128.0 L150.7 127.9Z" fill="#2A3644"/><path d="M8.4 117.8 L10.9 118.1 L13.0 119.2 L14.6 121.1 L15.4 123.4 L15.3 125.8 L14.3 128.0 L12.6 129.8 L10.3 130.7 L7.9 130.7 L5.6 129.9 L3.8 128.2 L2.7 126.0 L1.3 125.4 L2.4 127.6 L4.2 129.2 L6.4 130.1 L8.9 130.0 L11.1 129.1 L12.9 127.4 L13.9 125.2 L14.0 122.7 L13.2 120.4 L11.6 118.6 L9.4 117.5 L7.0 117.2Z" fill="#7F96AE"/><path d="M8.5 118.4 L10.7 118.6 L12.7 119.6 L14.2 121.3 L14.9 123.5 L14.8 125.7 L13.9 127.8 L12.3 129.3 L10.2 130.2 L8.0 130.2 L5.9 129.4 L4.2 127.9 L3.2 125.9 L2.5 125.5 L3.5 127.6 L5.1 129.1 L7.2 129.9 L9.5 129.9 L11.6 129.0 L13.2 127.4 L14.1 125.4 L14.2 123.1 L13.5 121.0 L12.0 119.3 L10.0 118.3 L7.8 118.0Z" fill="#A4A59E"/><path d="M12.7 119.7 L15.1 120.0 L17.3 121.1 L18.9 123.0 L19.7 125.3 L19.5 127.7 L18.5 130.0 L16.8 131.7 L14.5 132.6 L12.1 132.6 L9.8 131.8 L8.0 130.1 L6.9 127.9 L2.7 126.0 L3.8 128.2 L5.6 129.9 L7.9 130.7 L10.3 130.7 L12.6 129.8 L14.3 128.0 L15.3 125.8 L15.4 123.4 L14.6 121.1 L13.0 119.2 L10.9 118.1 L8.4 117.8Z" fill="#3A4A5E"/><path d="M6.7 133.0 L16.5 131.4 L13.9 133.7 Z" fill="#34424F"/><path d="M13.4 121.4 L15.5 121.6 L17.3 122.5 L18.7 124.1 L19.3 126.1 L19.2 128.1 L18.4 130.0 L16.9 131.5 L15.0 132.3 L12.9 132.3 L11.0 131.6 L9.4 130.2 L8.5 128.3 L6.6 127.4 L7.5 129.3 L9.0 130.7 L11.0 131.4 L13.1 131.4 L15.0 130.6 L16.5 129.2 L17.3 127.3 L17.4 125.2 L16.7 123.2 L15.4 121.7 L13.5 120.7 L11.5 120.5Z" fill="#2A3644"/><path d="M19.1 130.3 L21.5 130.5 L23.7 131.7 L25.3 133.5 L26.1 135.8 L26.0 138.3 L25.0 140.5 L23.2 142.2 L21.0 143.1 L18.5 143.2 L16.3 142.3 L14.5 140.6 L13.4 138.4 L12.0 137.8 L13.0 140.0 L14.8 141.7 L17.1 142.5 L19.5 142.5 L21.8 141.6 L23.6 139.9 L24.6 137.6 L24.7 135.2 L23.9 132.9 L22.3 131.0 L20.1 129.9 L17.7 129.6Z" fill="#7F96AE"/><path d="M19.1 130.8 L21.4 131.0 L23.4 132.1 L24.8 133.8 L25.6 135.9 L25.5 138.1 L24.6 140.2 L22.9 141.8 L20.9 142.6 L18.6 142.7 L16.5 141.9 L14.9 140.3 L13.9 138.3 L13.2 138.0 L14.1 140.0 L15.8 141.5 L17.9 142.3 L20.2 142.3 L22.2 141.4 L23.8 139.9 L24.8 137.8 L24.9 135.6 L24.1 133.5 L22.7 131.8 L20.7 130.7 L18.4 130.5Z" fill="#A4A59E"/><path d="M23.3 132.2 L25.8 132.4 L27.9 133.6 L29.5 135.4 L30.3 137.7 L30.2 140.2 L29.2 142.4 L27.5 144.1 L25.2 145.0 L22.8 145.1 L20.5 144.2 L18.7 142.5 L17.6 140.3 L13.4 138.4 L14.5 140.6 L16.3 142.3 L18.5 143.2 L21.0 143.1 L23.2 142.2 L25.0 140.5 L26.0 138.3 L26.1 135.8 L25.3 133.5 L23.7 131.7 L21.5 130.5 L19.1 130.3Z" fill="#3A4A5E"/><path d="M17.4 145.5 L27.1 143.9 L24.5 146.1 Z" fill="#34424F"/><path d="M24.1 133.8 L26.1 134.0 L28.0 135.0 L29.3 136.6 L30.0 138.5 L29.9 140.6 L29.1 142.5 L27.6 143.9 L25.7 144.7 L23.6 144.8 L21.6 144.0 L20.1 142.6 L19.2 140.7 L17.3 139.9 L18.2 141.7 L19.7 143.1 L21.6 143.9 L23.7 143.9 L25.6 143.1 L27.1 141.6 L28.0 139.7 L28.1 137.6 L27.4 135.7 L26.0 134.1 L24.2 133.2 L22.1 132.9Z" fill="#2A3644"/><path d="M6.0 144.4 L8.0 144.6 L9.7 145.5 L11.0 147.0 L11.6 148.8 L11.5 150.8 L10.7 152.6 L9.3 153.9 L7.5 154.7 L5.6 154.7 L3.8 154.0 L2.3 152.7 L1.5 150.9 L0.3 150.4 L1.2 152.2 L2.6 153.5 L4.4 154.2 L6.4 154.2 L8.2 153.4 L9.6 152.1 L10.4 150.3 L10.5 148.3 L9.8 146.5 L8.6 145.0 L6.8 144.1 L4.9 143.9Z" fill="#7F96AE"/><path d="M6.1 144.8 L7.9 145.0 L9.5 145.8 L10.6 147.2 L11.2 148.9 L11.1 150.7 L10.4 152.3 L9.1 153.6 L7.5 154.3 L5.7 154.3 L4.0 153.7 L2.6 152.4 L1.9 150.8 L1.3 150.6 L2.1 152.2 L3.4 153.4 L5.1 154.0 L6.9 154.0 L8.5 153.3 L9.8 152.1 L10.6 150.4 L10.6 148.6 L10.1 146.9 L8.9 145.6 L7.3 144.7 L5.5 144.6Z" fill="#A4A59E"/><path d="M9.4 145.9 L11.4 146.1 L13.1 147.0 L14.4 148.5 L15.0 150.4 L14.9 152.3 L14.1 154.1 L12.7 155.5 L10.9 156.2 L9.0 156.2 L7.1 155.5 L5.7 154.2 L4.8 152.5 L1.5 150.9 L2.3 152.7 L3.8 154.0 L5.6 154.7 L7.5 154.7 L9.3 153.9 L10.7 152.6 L11.5 150.8 L11.6 148.8 L11.0 147.0 L9.7 145.5 L8.0 144.6 L6.0 144.4Z" fill="#3A4A5E"/><path d="M4.7 156.6 L12.5 155.3 L10.4 157.1 Z" fill="#34424F"/><path d="M10.0 147.2 L11.7 147.4 L13.1 148.2 L14.2 149.4 L14.8 151.0 L14.7 152.7 L14.0 154.2 L12.8 155.3 L11.3 156.0 L9.6 156.0 L8.1 155.4 L6.8 154.3 L6.1 152.8 L4.6 152.1 L5.3 153.6 L6.5 154.7 L8.1 155.3 L9.7 155.3 L11.3 154.6 L12.5 153.5 L13.1 152.0 L13.2 150.3 L12.7 148.7 L11.6 147.5 L10.1 146.7 L8.5 146.5Z" fill="#2A3644"/><path d="M164.0 144.4 L166.0 144.6 L167.7 145.5 L169.0 147.0 L169.6 148.8 L169.5 150.8 L168.7 152.6 L167.3 153.9 L165.5 154.7 L163.6 154.7 L161.8 154.0 L160.3 152.7 L159.5 150.9 L158.3 150.4 L159.2 152.2 L160.6 153.5 L162.4 154.2 L164.4 154.2 L166.2 153.4 L167.6 152.1 L168.4 150.3 L168.5 148.3 L167.8 146.5 L166.6 145.0 L164.8 144.1 L162.9 143.9Z" fill="#7F96AE"/><path d="M164.1 144.8 L165.9 145.0 L167.5 145.8 L168.6 147.2 L169.2 148.9 L169.1 150.7 L168.4 152.3 L167.1 153.6 L165.5 154.3 L163.7 154.3 L162.0 153.7 L160.6 152.4 L159.9 150.8 L159.3 150.6 L160.1 152.2 L161.4 153.4 L163.1 154.0 L164.9 154.0 L166.5 153.3 L167.8 152.1 L168.6 150.4 L168.6 148.6 L168.1 146.9 L166.9 145.6 L165.3 144.7 L163.5 144.6Z" fill="#A4A59E"/><path d="M167.4 145.9 L169.4 146.1 L171.1 147.0 L172.4 148.5 L173.0 150.4 L172.9 152.3 L172.1 154.1 L170.7 155.5 L168.9 156.2 L167.0 156.2 L165.1 155.5 L163.7 154.2 L162.8 152.5 L159.5 150.9 L160.3 152.7 L161.8 154.0 L163.6 154.7 L165.5 154.7 L167.3 153.9 L168.7 152.6 L169.5 150.8 L169.6 148.8 L169.0 147.0 L167.7 145.5 L166.0 144.6 L164.0 144.4Z" fill="#3A4A5E"/><path d="M162.7 156.6 L170.5 155.3 L168.4 157.1 Z" fill="#34424F"/><path d="M168.0 147.2 L169.7 147.4 L171.1 148.2 L172.2 149.4 L172.8 151.0 L172.7 152.7 L172.0 154.2 L170.8 155.3 L169.3 156.0 L167.6 156.0 L166.1 155.4 L164.8 154.3 L164.1 152.8 L162.6 152.1 L163.3 153.6 L164.5 154.7 L166.1 155.3 L167.7 155.3 L169.3 154.6 L170.5 153.5 L171.1 152.0 L171.2 150.3 L170.7 148.7 L169.6 147.5 L168.1 146.7 L166.5 146.5Z" fill="#2A3644"/><path d="M36.3 -16.8 L38.2 -16.6 L39.9 -15.7 L41.2 -14.2 L41.9 -12.4 L41.8 -10.4 L41.0 -8.6 L39.6 -7.3 L37.8 -6.5 L35.8 -6.5 L34.0 -7.2 L32.5 -8.5 L31.7 -10.3 L30.5 -10.8 L31.4 -9.0 L32.8 -7.7 L34.7 -7.0 L36.6 -7.1 L38.4 -7.8 L39.8 -9.2 L40.6 -10.9 L40.7 -12.9 L40.1 -14.7 L38.8 -16.2 L37.1 -17.1 L35.1 -17.3Z" fill="#7F96AE"/><path d="M36.3 -16.4 L38.1 -16.2 L39.7 -15.4 L40.9 -14.0 L41.4 -12.3 L41.4 -10.5 L40.6 -8.9 L39.3 -7.6 L37.7 -6.9 L35.9 -6.9 L34.2 -7.6 L32.9 -8.8 L32.1 -10.4 L31.5 -10.7 L32.3 -9.0 L33.6 -7.8 L35.3 -7.2 L37.1 -7.2 L38.8 -7.9 L40.1 -9.1 L40.8 -10.8 L40.9 -12.6 L40.3 -14.3 L39.1 -15.6 L37.5 -16.5 L35.7 -16.7Z" fill="#A4A59E"/><path d="M39.6 -15.3 L41.6 -15.1 L43.3 -14.2 L44.6 -12.7 L45.2 -10.9 L45.1 -8.9 L44.3 -7.1 L42.9 -5.8 L41.1 -5.0 L39.2 -5.0 L37.4 -5.7 L35.9 -7.0 L35.1 -8.8 L31.7 -10.3 L32.5 -8.5 L34.0 -7.2 L35.8 -6.5 L37.8 -6.5 L39.6 -7.3 L41.0 -8.6 L41.8 -10.4 L41.9 -12.4 L41.2 -14.2 L39.9 -15.7 L38.2 -16.6 L36.3 -16.8Z" fill="#3A4A5E"/><path d="M34.9 -4.7 L42.7 -6.0 L40.6 -4.1 Z" fill="#34424F"/><path d="M40.2 -14.0 L41.9 -13.8 L43.4 -13.1 L44.4 -11.8 L45.0 -10.2 L44.9 -8.6 L44.2 -7.1 L43.0 -5.9 L41.5 -5.3 L39.8 -5.2 L38.3 -5.8 L37.1 -7.0 L36.3 -8.4 L34.8 -9.1 L35.5 -7.6 L36.7 -6.5 L38.3 -5.9 L40.0 -6.0 L41.5 -6.6 L42.7 -7.8 L43.4 -9.3 L43.4 -10.9 L42.9 -12.5 L41.8 -13.8 L40.3 -14.5 L38.7 -14.7Z" fill="#2A3644"/><path d="M36.3 146.2 L38.2 146.4 L39.9 147.3 L41.2 148.8 L41.9 150.6 L41.8 152.6 L41.0 154.4 L39.6 155.7 L37.8 156.5 L35.8 156.5 L34.0 155.8 L32.5 154.5 L31.7 152.7 L30.5 152.2 L31.4 154.0 L32.8 155.3 L34.7 156.0 L36.6 155.9 L38.4 155.2 L39.8 153.8 L40.6 152.1 L40.7 150.1 L40.1 148.3 L38.8 146.8 L37.1 145.9 L35.1 145.7Z" fill="#7F96AE"/><path d="M36.3 146.6 L38.1 146.8 L39.7 147.6 L40.9 149.0 L41.4 150.7 L41.4 152.5 L40.6 154.1 L39.3 155.4 L37.7 156.1 L35.9 156.1 L34.2 155.4 L32.9 154.2 L32.1 152.6 L31.5 152.3 L32.3 154.0 L33.6 155.2 L35.3 155.8 L37.1 155.8 L38.8 155.1 L40.1 153.9 L40.8 152.2 L40.9 150.4 L40.3 148.7 L39.1 147.4 L37.5 146.5 L35.7 146.3Z" fill="#A4A59E"/><path d="M39.6 147.7 L41.6 147.9 L43.3 148.8 L44.6 150.3 L45.2 152.1 L45.1 154.1 L44.3 155.9 L42.9 157.2 L41.1 158.0 L39.2 158.0 L37.4 157.3 L35.9 156.0 L35.1 154.2 L31.7 152.7 L32.5 154.5 L34.0 155.8 L35.8 156.5 L37.8 156.5 L39.6 155.7 L41.0 154.4 L41.8 152.6 L41.9 150.6 L41.2 148.8 L39.9 147.3 L38.2 146.4 L36.3 146.2Z" fill="#3A4A5E"/><path d="M34.9 158.3 L42.7 157.0 L40.6 158.9 Z" fill="#34424F"/><path d="M40.2 149.0 L41.9 149.2 L43.4 149.9 L44.4 151.2 L45.0 152.8 L44.9 154.4 L44.2 155.9 L43.0 157.1 L41.5 157.7 L39.8 157.8 L38.3 157.2 L37.1 156.0 L36.3 154.6 L34.8 153.9 L35.5 155.4 L36.7 156.5 L38.3 157.1 L40.0 157.0 L41.5 156.4 L42.7 155.2 L43.4 153.7 L43.4 152.1 L42.9 150.5 L41.8 149.2 L40.3 148.5 L38.7 148.3Z" fill="#2A3644"/><path d="M74.2 144.9 L75.6 145.1 L76.9 145.8 L77.9 146.9 L78.4 148.3 L78.3 149.7 L77.7 151.1 L76.6 152.1 L75.3 152.6 L73.8 152.7 L72.5 152.1 L71.4 151.1 L70.7 149.8 L69.9 149.4 L70.5 150.8 L71.6 151.8 L73.0 152.3 L74.4 152.3 L75.8 151.7 L76.8 150.7 L77.4 149.3 L77.5 147.9 L77.0 146.5 L76.1 145.4 L74.8 144.7 L73.3 144.5Z" fill="#7F96AE"/><path d="M74.2 145.2 L75.5 145.4 L76.7 146.0 L77.6 147.0 L78.1 148.3 L78.0 149.6 L77.4 150.9 L76.5 151.8 L75.2 152.3 L73.9 152.4 L72.6 151.9 L71.6 151.0 L71.0 149.7 L70.6 149.6 L71.2 150.8 L72.2 151.7 L73.4 152.2 L74.8 152.1 L76.0 151.6 L77.0 150.7 L77.6 149.5 L77.6 148.1 L77.2 146.8 L76.3 145.8 L75.1 145.2 L73.8 145.1Z" fill="#A4A59E"/><path d="M77.3 146.3 L78.7 146.5 L80.0 147.2 L81.0 148.3 L81.5 149.7 L81.4 151.1 L80.8 152.5 L79.8 153.5 L78.4 154.0 L76.9 154.1 L75.6 153.5 L74.5 152.6 L73.9 151.2 L70.7 149.8 L71.4 151.1 L72.5 152.1 L73.8 152.7 L75.3 152.6 L76.6 152.1 L77.7 151.1 L78.3 149.7 L78.4 148.3 L77.9 146.9 L76.9 145.8 L75.6 145.1 L74.2 144.9Z" fill="#3A4A5E"/><path d="M91.4 140.0 L93.3 140.2 L95.0 141.1 L96.3 142.5 L97.0 144.4 L96.9 146.3 L96.1 148.1 L94.7 149.5 L92.9 150.2 L90.9 150.3 L89.1 149.6 L87.6 148.3 L86.8 146.5 L85.7 146.0 L86.5 147.7 L87.9 149.1 L89.8 149.8 L91.7 149.7 L93.5 149.0 L94.9 147.6 L95.7 145.8 L95.8 143.9 L95.2 142.0 L93.9 140.6 L92.2 139.6 L90.2 139.5Z" fill="#7F96AE"/><path d="M91.4 140.4 L93.2 140.6 L94.8 141.4 L96.0 142.8 L96.6 144.5 L96.5 146.2 L95.7 147.9 L94.4 149.1 L92.8 149.8 L91.0 149.9 L89.3 149.2 L88.0 148.0 L87.2 146.4 L86.6 146.1 L87.4 147.7 L88.7 149.0 L90.4 149.6 L92.2 149.6 L93.9 148.9 L95.2 147.6 L95.9 146.0 L96.0 144.2 L95.4 142.5 L94.2 141.1 L92.6 140.3 L90.8 140.1Z" fill="#A4A59E"/><path d="M94.7 141.5 L96.7 141.7 L98.4 142.6 L99.7 144.1 L100.3 145.9 L100.3 147.9 L99.5 149.6 L98.1 151.0 L96.3 151.8 L94.3 151.8 L92.5 151.1 L91.0 149.8 L90.2 148.0 L86.8 146.5 L87.6 148.3 L89.1 149.6 L90.9 150.3 L92.9 150.2 L94.7 149.5 L96.1 148.1 L96.9 146.3 L97.0 144.4 L96.3 142.5 L95.0 141.1 L93.3 140.2 L91.4 140.0Z" fill="#3A4A5E"/><path d="M90.0 152.1 L97.8 150.8 L95.7 152.6 Z" fill="#34424F"/><path d="M95.3 142.8 L97.0 143.0 L98.5 143.7 L99.5 145.0 L100.1 146.5 L100.0 148.2 L99.3 149.7 L98.1 150.9 L96.6 151.5 L95.0 151.5 L93.4 150.9 L92.2 149.8 L91.5 148.3 L89.9 147.6 L90.6 149.1 L91.9 150.3 L93.4 150.8 L95.1 150.8 L96.6 150.2 L97.8 149.0 L98.5 147.5 L98.5 145.8 L98.0 144.3 L96.9 143.0 L95.4 142.3 L93.8 142.1Z" fill="#2A3644"/><path d="M67.1 131.6 L68.5 131.7 L69.8 132.4 L70.8 133.5 L71.2 134.9 L71.2 136.4 L70.6 137.7 L69.5 138.7 L68.2 139.3 L66.7 139.3 L65.3 138.8 L64.3 137.8 L63.6 136.5 L62.8 136.1 L63.4 137.4 L64.5 138.4 L65.9 138.9 L67.3 138.9 L68.7 138.4 L69.7 137.3 L70.3 136.0 L70.4 134.5 L69.9 133.1 L69.0 132.0 L67.7 131.4 L66.2 131.2Z" fill="#7F96AE"/><path d="M67.1 131.9 L68.4 132.0 L69.6 132.7 L70.5 133.7 L70.9 135.0 L70.9 136.3 L70.3 137.5 L69.4 138.5 L68.1 139.0 L66.8 139.0 L65.5 138.5 L64.5 137.6 L63.9 136.4 L63.5 136.2 L64.1 137.4 L65.1 138.3 L66.3 138.8 L67.7 138.8 L68.9 138.3 L69.9 137.3 L70.5 136.1 L70.5 134.8 L70.1 133.5 L69.2 132.5 L68.0 131.9 L66.6 131.7Z" fill="#A4A59E"/><path d="M70.2 133.0 L71.6 133.2 L72.9 133.8 L73.9 134.9 L74.4 136.3 L74.3 137.8 L73.7 139.1 L72.7 140.1 L71.3 140.7 L69.8 140.7 L68.5 140.2 L67.4 139.2 L66.7 137.9 L63.6 136.5 L64.3 137.8 L65.3 138.8 L66.7 139.3 L68.2 139.3 L69.5 138.7 L70.6 137.7 L71.2 136.4 L71.2 134.9 L70.8 133.5 L69.8 132.4 L68.5 131.7 L67.1 131.6Z" fill="#3A4A5E"/><path d="M80.7 45.7 L82.6 45.9 L84.4 46.8 L85.7 48.3 L86.3 50.2 L86.2 52.1 L85.4 53.9 L84.0 55.3 L82.2 56.0 L80.3 56.0 L78.4 55.3 L77.0 54.0 L76.1 52.3 L75.0 51.8 L75.8 53.5 L77.3 54.8 L79.1 55.5 L81.1 55.5 L82.9 54.8 L84.3 53.4 L85.1 51.6 L85.2 49.7 L84.5 47.8 L83.2 46.3 L81.5 45.4 L79.6 45.2Z" fill="#7F96AE"/><path d="M80.7 46.2 L82.5 46.3 L84.1 47.2 L85.3 48.5 L85.9 50.2 L85.8 52.0 L85.1 53.7 L83.8 54.9 L82.1 55.6 L80.3 55.6 L78.6 55.0 L77.3 53.8 L76.5 52.2 L76.0 51.9 L76.7 53.5 L78.1 54.7 L79.7 55.4 L81.5 55.4 L83.2 54.7 L84.5 53.4 L85.2 51.8 L85.3 50.0 L84.7 48.3 L83.5 46.9 L82.0 46.1 L80.2 45.9Z" fill="#A4A59E"/><path d="M84.1 47.3 L86.0 47.5 L87.8 48.4 L89.0 49.8 L89.7 51.7 L89.6 53.6 L88.8 55.4 L87.4 56.8 L85.6 57.5 L83.6 57.6 L81.8 56.9 L80.4 55.5 L79.5 53.8 L76.1 52.3 L77.0 54.0 L78.4 55.3 L80.3 56.0 L82.2 56.0 L84.0 55.3 L85.4 53.9 L86.2 52.1 L86.3 50.2 L85.7 48.3 L84.4 46.8 L82.6 45.9 L80.7 45.7Z" fill="#3A4A5E"/><path d="M79.3 57.9 L87.1 56.6 L85.1 58.4 Z" fill="#34424F"/><path d="M84.7 48.6 L86.3 48.7 L87.8 49.5 L88.9 50.8 L89.4 52.3 L89.4 54.0 L88.7 55.5 L87.5 56.7 L85.9 57.3 L84.3 57.3 L82.7 56.7 L81.5 55.6 L80.8 54.1 L79.2 53.4 L80.0 54.9 L81.2 56.0 L82.7 56.6 L84.4 56.6 L85.9 56.0 L87.1 54.8 L87.8 53.3 L87.9 51.6 L87.3 50.1 L86.2 48.8 L84.8 48.0 L83.1 47.9Z" fill="#2A3644"/><path d="M18.5 16.4 L20.4 16.6 L22.2 17.5 L23.4 19.0 L24.1 20.8 L24.0 22.8 L23.2 24.6 L21.8 25.9 L20.0 26.7 L18.0 26.7 L16.2 26.0 L14.8 24.7 L13.9 22.9 L12.8 22.4 L13.6 24.2 L15.1 25.5 L16.9 26.2 L18.8 26.2 L20.6 25.4 L22.0 24.1 L22.8 22.3 L22.9 20.3 L22.3 18.5 L21.0 17.0 L19.3 16.1 L17.3 15.9Z" fill="#7F96AE"/><path d="M18.5 16.8 L20.3 17.0 L21.9 17.8 L23.1 19.2 L23.7 20.9 L23.6 22.7 L22.8 24.3 L21.6 25.6 L19.9 26.3 L18.1 26.3 L16.4 25.7 L15.1 24.4 L14.3 22.8 L13.7 22.6 L14.5 24.2 L15.8 25.4 L17.5 26.0 L19.3 26.0 L21.0 25.3 L22.3 24.1 L23.0 22.4 L23.1 20.6 L22.5 18.9 L21.3 17.6 L19.7 16.7 L17.9 16.6Z" fill="#A4A59E"/><path d="M21.9 17.9 L23.8 18.1 L25.5 19.0 L26.8 20.5 L27.5 22.4 L27.4 24.3 L26.6 26.1 L25.2 27.5 L23.4 28.2 L21.4 28.2 L19.6 27.5 L18.1 26.2 L17.3 24.5 L13.9 22.9 L14.8 24.7 L16.2 26.0 L18.0 26.7 L20.0 26.7 L21.8 25.9 L23.2 24.6 L24.0 22.8 L24.1 20.8 L23.4 19.0 L22.2 17.5 L20.4 16.6 L18.5 16.4Z" fill="#3A4A5E"/><path d="M17.1 28.6 L24.9 27.3 L22.8 29.1 Z" fill="#34424F"/><path d="M22.4 19.2 L24.1 19.4 L25.6 20.2 L26.7 21.4 L27.2 23.0 L27.1 24.7 L26.5 26.2 L25.3 27.3 L23.7 28.0 L22.1 28.0 L20.5 27.4 L19.3 26.3 L18.6 24.8 L17.0 24.1 L17.7 25.6 L19.0 26.7 L20.5 27.3 L22.2 27.3 L23.7 26.6 L24.9 25.5 L25.6 24.0 L25.7 22.3 L25.1 20.7 L24.0 19.5 L22.6 18.7 L20.9 18.5Z" fill="#2A3644"/><path d="M39.8 0.4 L41.8 0.6 L43.5 1.5 L44.8 3.0 L45.4 4.8 L45.3 6.8 L44.5 8.6 L43.1 9.9 L41.3 10.7 L39.4 10.7 L37.5 10.0 L36.1 8.7 L35.2 6.9 L34.1 6.4 L34.9 8.2 L36.4 9.5 L38.2 10.2 L40.2 10.2 L42.0 9.4 L43.4 8.1 L44.2 6.3 L44.3 4.3 L43.6 2.5 L42.3 1.0 L40.6 0.1 L38.7 -0.1Z" fill="#7F96AE"/><path d="M39.8 0.8 L41.6 1.0 L43.2 1.8 L44.4 3.2 L45.0 4.9 L44.9 6.7 L44.2 8.3 L42.9 9.6 L41.2 10.3 L39.4 10.3 L37.8 9.7 L36.4 8.4 L35.6 6.8 L35.1 6.6 L35.9 8.2 L37.2 9.4 L38.9 10.0 L40.7 10.0 L42.3 9.3 L43.6 8.1 L44.3 6.4 L44.4 4.6 L43.8 2.9 L42.7 1.6 L41.1 0.7 L39.3 0.6Z" fill="#A4A59E"/><path d="M43.2 1.9 L45.1 2.1 L46.9 3.0 L48.1 4.5 L48.8 6.4 L48.7 8.3 L47.9 10.1 L46.5 11.5 L44.7 12.2 L42.7 12.2 L40.9 11.5 L39.5 10.2 L38.6 8.5 L35.2 6.9 L36.1 8.7 L37.5 10.0 L39.4 10.7 L41.3 10.7 L43.1 9.9 L44.5 8.6 L45.3 6.8 L45.4 4.8 L44.8 3.0 L43.5 1.5 L41.8 0.6 L39.8 0.4Z" fill="#3A4A5E"/><path d="M38.4 12.6 L46.2 11.3 L44.2 13.1 Z" fill="#34424F"/><path d="M43.8 3.2 L45.4 3.4 L46.9 4.2 L48.0 5.4 L48.5 7.0 L48.5 8.7 L47.8 10.2 L46.6 11.3 L45.1 12.0 L43.4 12.0 L41.8 11.4 L40.6 10.3 L39.9 8.8 L38.3 8.1 L39.1 9.6 L40.3 10.7 L41.8 11.3 L43.5 11.3 L45.0 10.6 L46.2 9.5 L46.9 8.0 L47.0 6.3 L46.4 4.7 L45.4 3.5 L43.9 2.7 L42.2 2.5Z" fill="#2A3644"/><path d="M39.8 163.4 L41.8 163.6 L43.5 164.5 L44.8 166.0 L45.4 167.8 L45.3 169.8 L44.5 171.6 L43.1 172.9 L41.3 173.7 L39.4 173.7 L37.5 173.0 L36.1 171.7 L35.2 169.9 L34.1 169.4 L34.9 171.2 L36.4 172.5 L38.2 173.2 L40.2 173.2 L42.0 172.4 L43.4 171.1 L44.2 169.3 L44.3 167.3 L43.6 165.5 L42.3 164.0 L40.6 163.1 L38.7 162.9Z" fill="#7F96AE"/><path d="M39.8 163.8 L41.6 164.0 L43.2 164.8 L44.4 166.2 L45.0 167.9 L44.9 169.7 L44.2 171.3 L42.9 172.6 L41.2 173.3 L39.4 173.3 L37.8 172.7 L36.4 171.4 L35.6 169.8 L35.1 169.6 L35.9 171.2 L37.2 172.4 L38.9 173.0 L40.7 173.0 L42.3 172.3 L43.6 171.1 L44.3 169.4 L44.4 167.6 L43.8 165.9 L42.7 164.6 L41.1 163.7 L39.3 163.6Z" fill="#A4A59E"/><path d="M43.2 164.9 L45.1 165.1 L46.9 166.0 L48.1 167.5 L48.8 169.4 L48.7 171.3 L47.9 173.1 L46.5 174.5 L44.7 175.2 L42.7 175.2 L40.9 174.5 L39.5 173.2 L38.6 171.5 L35.2 169.9 L36.1 171.7 L37.5 173.0 L39.4 173.7 L41.3 173.7 L43.1 172.9 L44.5 171.6 L45.3 169.8 L45.4 167.8 L44.8 166.0 L43.5 164.5 L41.8 163.6 L39.8 163.4Z" fill="#3A4A5E"/><path d="M38.4 175.6 L46.2 174.3 L44.2 176.1 Z" fill="#34424F"/><path d="M43.8 166.2 L45.4 166.4 L46.9 167.2 L48.0 168.4 L48.5 170.0 L48.5 171.7 L47.8 173.2 L46.6 174.3 L45.1 175.0 L43.4 175.0 L41.8 174.4 L40.6 173.3 L39.9 171.8 L38.3 171.1 L39.1 172.6 L40.3 173.7 L41.8 174.3 L43.5 174.3 L45.0 173.6 L46.2 172.5 L46.9 171.0 L47.0 169.3 L46.4 167.7 L45.4 166.5 L43.9 165.7 L42.2 165.5Z" fill="#2A3644"/><path d="M25.6 -2.3 L27.5 -2.1 L29.3 -1.2 L30.5 0.3 L31.2 2.2 L31.1 4.1 L30.3 5.9 L28.9 7.3 L27.1 8.0 L25.1 8.0 L23.3 7.3 L21.9 6.0 L21.0 4.3 L19.9 3.8 L20.7 5.5 L22.2 6.8 L24.0 7.5 L25.9 7.5 L27.8 6.8 L29.2 5.4 L30.0 3.6 L30.0 1.7 L29.4 -0.2 L28.1 -1.7 L26.4 -2.6 L24.4 -2.8Z" fill="#7F96AE"/><path d="M25.6 -1.8 L27.4 -1.7 L29.0 -0.8 L30.2 0.5 L30.8 2.2 L30.7 4.0 L30.0 5.7 L28.7 6.9 L27.0 7.6 L25.2 7.6 L23.5 7.0 L22.2 5.8 L21.4 4.2 L20.8 3.9 L21.6 5.5 L23.0 6.7 L24.6 7.4 L26.4 7.4 L28.1 6.7 L29.4 5.4 L30.1 3.8 L30.2 2.0 L29.6 0.3 L28.4 -1.1 L26.8 -1.9 L25.1 -2.1Z" fill="#A4A59E"/><path d="M29.0 -0.7 L30.9 -0.5 L32.6 0.4 L33.9 1.8 L34.6 3.7 L34.5 5.6 L33.7 7.4 L32.3 8.8 L30.5 9.5 L28.5 9.6 L26.7 8.9 L25.3 7.5 L24.4 5.8 L21.0 4.3 L21.9 6.0 L23.3 7.3 L25.1 8.0 L27.1 8.0 L28.9 7.3 L30.3 5.9 L31.1 4.1 L31.2 2.2 L30.5 0.3 L29.3 -1.2 L27.5 -2.1 L25.6 -2.3Z" fill="#3A4A5E"/><path d="M24.2 9.9 L32.0 8.6 L29.9 10.4 Z" fill="#34424F"/><path d="M29.6 0.6 L31.2 0.7 L32.7 1.5 L33.8 2.8 L34.3 4.3 L34.2 6.0 L33.6 7.5 L32.4 8.7 L30.8 9.3 L29.2 9.3 L27.6 8.7 L26.4 7.6 L25.7 6.1 L24.1 5.4 L24.8 6.9 L26.1 8.0 L27.6 8.6 L29.3 8.6 L30.8 8.0 L32.0 6.8 L32.7 5.3 L32.8 3.6 L32.2 2.1 L31.1 0.8 L29.7 0.0 L28.0 -0.1Z" fill="#2A3644"/><path d="M25.6 160.7 L27.5 160.9 L29.3 161.8 L30.5 163.3 L31.2 165.2 L31.1 167.1 L30.3 168.9 L28.9 170.3 L27.1 171.0 L25.1 171.0 L23.3 170.3 L21.9 169.0 L21.0 167.3 L19.9 166.8 L20.7 168.5 L22.2 169.8 L24.0 170.5 L25.9 170.5 L27.8 169.8 L29.2 168.4 L30.0 166.6 L30.0 164.7 L29.4 162.8 L28.1 161.3 L26.4 160.4 L24.4 160.2Z" fill="#7F96AE"/><path d="M25.6 161.2 L27.4 161.3 L29.0 162.2 L30.2 163.5 L30.8 165.2 L30.7 167.0 L30.0 168.7 L28.7 169.9 L27.0 170.6 L25.2 170.6 L23.5 170.0 L22.2 168.8 L21.4 167.2 L20.8 166.9 L21.6 168.5 L23.0 169.7 L24.6 170.4 L26.4 170.4 L28.1 169.7 L29.4 168.4 L30.1 166.8 L30.2 165.0 L29.6 163.3 L28.4 161.9 L26.8 161.1 L25.1 160.9Z" fill="#A4A59E"/><path d="M29.0 162.3 L30.9 162.5 L32.6 163.4 L33.9 164.8 L34.6 166.7 L34.5 168.6 L33.7 170.4 L32.3 171.8 L30.5 172.5 L28.5 172.6 L26.7 171.9 L25.3 170.5 L24.4 168.8 L21.0 167.3 L21.9 169.0 L23.3 170.3 L25.1 171.0 L27.1 171.0 L28.9 170.3 L30.3 168.9 L31.1 167.1 L31.2 165.2 L30.5 163.3 L29.3 161.8 L27.5 160.9 L25.6 160.7Z" fill="#3A4A5E"/><path d="M24.2 172.9 L32.0 171.6 L29.9 173.4 Z" fill="#34424F"/><path d="M29.6 163.6 L31.2 163.7 L32.7 164.5 L33.8 165.8 L34.3 167.3 L34.2 169.0 L33.6 170.5 L32.4 171.7 L30.8 172.3 L29.2 172.3 L27.6 171.7 L26.4 170.6 L25.7 169.1 L24.1 168.4 L24.8 169.9 L26.1 171.0 L27.6 171.6 L29.3 171.6 L30.8 171.0 L32.0 169.8 L32.7 168.3 L32.8 166.6 L32.2 165.1 L31.1 163.8 L29.7 163.0 L28.0 162.9Z" fill="#2A3644"/><path d="M9.6 6.6 L11.5 6.8 L13.3 7.7 L14.5 9.2 L15.2 11.1 L15.1 13.0 L14.3 14.8 L12.9 16.2 L11.1 16.9 L9.1 16.9 L7.3 16.2 L5.9 14.9 L5.0 13.2 L3.9 12.6 L4.7 14.4 L6.2 15.7 L8.0 16.4 L9.9 16.4 L11.8 15.6 L13.2 14.3 L14.0 12.5 L14.0 10.5 L13.4 8.7 L12.1 7.2 L10.4 6.3 L8.4 6.1Z" fill="#7F96AE"/><path d="M9.6 7.0 L11.4 7.2 L13.0 8.1 L14.2 9.4 L14.8 11.1 L14.7 12.9 L14.0 14.6 L12.7 15.8 L11.0 16.5 L9.2 16.5 L7.5 15.9 L6.2 14.7 L5.4 13.1 L4.8 12.8 L5.6 14.4 L7.0 15.6 L8.6 16.3 L10.4 16.2 L12.1 15.6 L13.4 14.3 L14.1 12.7 L14.2 10.9 L13.6 9.2 L12.4 7.8 L10.8 7.0 L9.1 6.8Z" fill="#A4A59E"/><path d="M13.0 8.2 L14.9 8.4 L16.6 9.3 L17.9 10.7 L18.6 12.6 L18.5 14.5 L17.7 16.3 L16.3 17.7 L14.5 18.4 L12.5 18.5 L10.7 17.8 L9.3 16.4 L8.4 14.7 L5.0 13.2 L5.9 14.9 L7.3 16.2 L9.1 16.9 L11.1 16.9 L12.9 16.2 L14.3 14.8 L15.1 13.0 L15.2 11.1 L14.5 9.2 L13.3 7.7 L11.5 6.8 L9.6 6.6Z" fill="#3A4A5E"/><path d="M8.2 18.8 L16.0 17.5 L13.9 19.3 Z" fill="#34424F"/><path d="M13.6 9.5 L15.2 9.6 L16.7 10.4 L17.8 11.6 L18.3 13.2 L18.2 14.9 L17.6 16.4 L16.4 17.5 L14.8 18.2 L13.2 18.2 L11.6 17.6 L10.4 16.5 L9.7 15.0 L8.1 14.3 L8.8 15.8 L10.1 16.9 L11.6 17.5 L13.3 17.5 L14.8 16.9 L16.0 15.7 L16.7 14.2 L16.8 12.5 L16.2 10.9 L15.1 9.7 L13.7 8.9 L12.0 8.8Z" fill="#2A3644"/><path d="M132.3 5.7 L134.2 5.9 L135.9 6.8 L137.2 8.3 L137.9 10.2 L137.8 12.1 L137.0 13.9 L135.6 15.3 L133.8 16.0 L131.8 16.0 L130.0 15.3 L128.5 14.0 L127.7 12.3 L126.5 11.8 L127.4 13.5 L128.8 14.8 L130.7 15.5 L132.6 15.5 L134.4 14.8 L135.8 13.4 L136.6 11.6 L136.7 9.7 L136.1 7.8 L134.8 6.3 L133.1 5.4 L131.1 5.2Z" fill="#7F96AE"/><path d="M132.3 6.2 L134.1 6.3 L135.7 7.2 L136.9 8.5 L137.4 10.2 L137.4 12.0 L136.6 13.7 L135.3 14.9 L133.7 15.6 L131.9 15.6 L130.2 15.0 L128.9 13.8 L128.1 12.2 L127.5 11.9 L128.3 13.5 L129.6 14.7 L131.3 15.4 L133.1 15.4 L134.8 14.7 L136.1 13.4 L136.8 11.8 L136.9 10.0 L136.3 8.3 L135.1 6.9 L133.5 6.1 L131.7 5.9Z" fill="#A4A59E"/><path d="M135.6 7.3 L137.6 7.5 L139.3 8.4 L140.6 9.8 L141.2 11.7 L141.1 13.6 L140.3 15.4 L138.9 16.8 L137.1 17.5 L135.2 17.6 L133.4 16.9 L131.9 15.5 L131.1 13.8 L127.7 12.3 L128.5 14.0 L130.0 15.3 L131.8 16.0 L133.8 16.0 L135.6 15.3 L137.0 13.9 L137.8 12.1 L137.9 10.2 L137.2 8.3 L135.9 6.8 L134.2 5.9 L132.3 5.7Z" fill="#3A4A5E"/><path d="M130.9 17.9 L138.7 16.6 L136.6 18.4 Z" fill="#34424F"/><path d="M136.2 8.6 L137.9 8.7 L139.4 9.5 L140.4 10.8 L141.0 12.3 L140.9 14.0 L140.2 15.5 L139.0 16.7 L137.5 17.3 L135.8 17.3 L134.3 16.7 L133.1 15.6 L132.3 14.1 L130.8 13.4 L131.5 14.9 L132.7 16.0 L134.3 16.6 L136.0 16.6 L137.5 16.0 L138.7 14.8 L139.4 13.3 L139.4 11.6 L138.9 10.1 L137.8 8.8 L136.3 8.0 L134.7 7.9Z" fill="#2A3644"/><path d="M118.0 13.7 L120.0 13.9 L121.7 14.8 L123.0 16.3 L123.6 18.2 L123.5 20.1 L122.7 21.9 L121.3 23.3 L119.5 24.0 L117.6 24.0 L115.8 23.3 L114.3 22.0 L113.5 20.3 L112.3 19.8 L113.2 21.5 L114.6 22.8 L116.4 23.5 L118.4 23.5 L120.2 22.8 L121.6 21.4 L122.4 19.6 L122.5 17.7 L121.8 15.8 L120.6 14.3 L118.8 13.4 L116.9 13.2Z" fill="#7F96AE"/><path d="M118.1 14.2 L119.9 14.3 L121.5 15.2 L122.6 16.5 L123.2 18.2 L123.1 20.0 L122.4 21.7 L121.1 22.9 L119.5 23.6 L117.7 23.6 L116.0 23.0 L114.6 21.8 L113.9 20.2 L113.3 19.9 L114.1 21.5 L115.4 22.7 L117.1 23.4 L118.9 23.4 L120.5 22.7 L121.8 21.4 L122.6 19.8 L122.6 18.0 L122.1 16.3 L120.9 14.9 L119.3 14.1 L117.5 13.9Z" fill="#A4A59E"/><path d="M121.4 15.3 L123.4 15.5 L125.1 16.4 L126.4 17.8 L127.0 19.7 L126.9 21.6 L126.1 23.4 L124.7 24.8 L122.9 25.5 L121.0 25.6 L119.1 24.9 L117.7 23.5 L116.8 21.8 L113.5 20.3 L114.3 22.0 L115.8 23.3 L117.6 24.0 L119.5 24.0 L121.3 23.3 L122.7 21.9 L123.5 20.1 L123.6 18.2 L123.0 16.3 L121.7 14.8 L120.0 13.9 L118.0 13.7Z" fill="#3A4A5E"/><path d="M116.7 25.9 L124.5 24.6 L122.4 26.4 Z" fill="#34424F"/><path d="M122.0 16.6 L123.7 16.7 L125.1 17.5 L126.2 18.8 L126.8 20.3 L126.7 22.0 L126.0 23.5 L124.8 24.7 L123.3 25.3 L121.6 25.3 L120.1 24.7 L118.8 23.6 L118.1 22.1 L116.6 21.4 L117.3 22.9 L118.5 24.0 L120.1 24.6 L121.7 24.6 L123.3 24.0 L124.5 22.8 L125.1 21.3 L125.2 19.6 L124.7 18.1 L123.6 16.8 L122.1 16.0 L120.5 15.9Z" fill="#2A3644"/><path d="M-13.3 5.7 L-11.4 5.9 L-9.6 6.8 L-8.3 8.3 L-7.7 10.2 L-7.8 12.1 L-8.6 13.9 L-10.0 15.3 L-11.8 16.0 L-13.7 16.0 L-15.6 15.3 L-17.0 14.0 L-17.9 12.3 L-19.0 11.8 L-18.2 13.5 L-16.7 14.8 L-14.9 15.5 L-12.9 15.5 L-11.1 14.8 L-9.7 13.4 L-8.9 11.6 L-8.8 9.7 L-9.5 7.8 L-10.8 6.3 L-12.5 5.4 L-14.4 5.2Z" fill="#7F96AE"/><path d="M-13.3 6.2 L-11.5 6.3 L-9.9 7.2 L-8.7 8.5 L-8.1 10.2 L-8.2 12.0 L-8.9 13.7 L-10.2 14.9 L-11.9 15.6 L-13.7 15.6 L-15.4 15.0 L-16.7 13.8 L-17.5 12.2 L-18.0 11.9 L-17.3 13.5 L-15.9 14.7 L-14.3 15.4 L-12.5 15.4 L-10.8 14.7 L-9.5 13.4 L-8.8 11.8 L-8.7 10.0 L-9.3 8.3 L-10.5 6.9 L-12.0 6.1 L-13.8 5.9Z" fill="#A4A59E"/><path d="M-9.9 7.3 L-8.0 7.5 L-6.2 8.4 L-5.0 9.8 L-4.3 11.7 L-4.4 13.6 L-5.2 15.4 L-6.6 16.8 L-8.4 17.5 L-10.4 17.6 L-12.2 16.9 L-13.6 15.5 L-14.5 13.8 L-17.9 12.3 L-17.0 14.0 L-15.6 15.3 L-13.7 16.0 L-11.8 16.0 L-10.0 15.3 L-8.6 13.9 L-7.8 12.1 L-7.7 10.2 L-8.3 8.3 L-9.6 6.8 L-11.4 5.9 L-13.3 5.7Z" fill="#3A4A5E"/><path d="M-14.7 17.9 L-6.9 16.6 L-8.9 18.4 Z" fill="#34424F"/><path d="M-9.3 8.6 L-7.7 8.7 L-6.2 9.5 L-5.1 10.8 L-4.6 12.3 L-4.6 14.0 L-5.3 15.5 L-6.5 16.7 L-8.1 17.3 L-9.7 17.3 L-11.3 16.7 L-12.5 15.6 L-13.2 14.1 L-14.8 13.4 L-14.0 14.9 L-12.8 16.0 L-11.3 16.6 L-9.6 16.6 L-8.1 16.0 L-6.9 14.8 L-6.2 13.3 L-6.1 11.6 L-6.7 10.1 L-7.8 8.8 L-9.2 8.0 L-10.9 7.9Z" fill="#2A3644"/><path d="M144.7 5.7 L146.6 5.9 L148.4 6.8 L149.7 8.3 L150.3 10.2 L150.2 12.1 L149.4 13.9 L148.0 15.3 L146.2 16.0 L144.3 16.0 L142.4 15.3 L141.0 14.0 L140.1 12.3 L139.0 11.8 L139.8 13.5 L141.3 14.8 L143.1 15.5 L145.1 15.5 L146.9 14.8 L148.3 13.4 L149.1 11.6 L149.2 9.7 L148.5 7.8 L147.2 6.3 L145.5 5.4 L143.6 5.2Z" fill="#7F96AE"/><path d="M144.7 6.2 L146.5 6.3 L148.1 7.2 L149.3 8.5 L149.9 10.2 L149.8 12.0 L149.1 13.7 L147.8 14.9 L146.1 15.6 L144.3 15.6 L142.6 15.0 L141.3 13.8 L140.5 12.2 L140.0 11.9 L140.7 13.5 L142.1 14.7 L143.7 15.4 L145.5 15.4 L147.2 14.7 L148.5 13.4 L149.2 11.8 L149.3 10.0 L148.7 8.3 L147.5 6.9 L146.0 6.1 L144.2 5.9Z" fill="#A4A59E"/><path d="M148.1 7.3 L150.0 7.5 L151.8 8.4 L153.0 9.8 L153.7 11.7 L153.6 13.6 L152.8 15.4 L151.4 16.8 L149.6 17.5 L147.6 17.6 L145.8 16.9 L144.4 15.5 L143.5 13.8 L140.1 12.3 L141.0 14.0 L142.4 15.3 L144.3 16.0 L146.2 16.0 L148.0 15.3 L149.4 13.9 L150.2 12.1 L150.3 10.2 L149.7 8.3 L148.4 6.8 L146.6 5.9 L144.7 5.7Z" fill="#3A4A5E"/><path d="M143.3 17.9 L151.1 16.6 L149.1 18.4 Z" fill="#34424F"/><path d="M148.7 8.6 L150.3 8.7 L151.8 9.5 L152.9 10.8 L153.4 12.3 L153.4 14.0 L152.7 15.5 L151.5 16.7 L149.9 17.3 L148.3 17.3 L146.7 16.7 L145.5 15.6 L144.8 14.1 L143.2 13.4 L144.0 14.9 L145.2 16.0 L146.7 16.6 L148.4 16.6 L149.9 16.0 L151.1 14.8 L151.8 13.3 L151.9 11.6 L151.3 10.1 L150.2 8.8 L148.8 8.0 L147.1 7.9Z" fill="#2A3644"/><path d="M88.4 42.7 L89.8 42.9 L91.1 43.5 L92.1 44.6 L92.6 46.0 L92.5 47.5 L91.9 48.8 L90.9 49.9 L89.5 50.4 L88.0 50.4 L86.7 49.9 L85.6 48.9 L85.0 47.6 L84.1 47.2 L84.7 48.5 L85.8 49.5 L87.2 50.1 L88.7 50.0 L90.0 49.5 L91.1 48.4 L91.7 47.1 L91.7 45.6 L91.2 44.3 L90.3 43.2 L89.0 42.5 L87.5 42.3Z" fill="#7F96AE"/><path d="M88.4 43.0 L89.8 43.2 L90.9 43.8 L91.8 44.8 L92.3 46.1 L92.2 47.4 L91.7 48.7 L90.7 49.6 L89.5 50.1 L88.1 50.1 L86.8 49.6 L85.8 48.7 L85.3 47.5 L84.8 47.3 L85.4 48.5 L86.4 49.5 L87.7 49.9 L89.0 49.9 L90.3 49.4 L91.2 48.5 L91.8 47.2 L91.8 45.9 L91.4 44.6 L90.5 43.6 L89.3 43.0 L88.0 42.8Z" fill="#A4A59E"/><path d="M91.5 44.1 L93.0 44.3 L94.3 44.9 L95.2 46.0 L95.7 47.4 L95.6 48.9 L95.0 50.2 L94.0 51.3 L92.6 51.8 L91.2 51.8 L89.8 51.3 L88.7 50.3 L88.1 49.0 L85.0 47.6 L85.6 48.9 L86.7 49.9 L88.0 50.4 L89.5 50.4 L90.9 49.9 L91.9 48.8 L92.5 47.5 L92.6 46.0 L92.1 44.6 L91.1 43.5 L89.8 42.9 L88.4 42.7Z" fill="#3A4A5E"/><path d="M63.5 55.2 L65.0 55.3 L66.3 56.0 L67.2 57.1 L67.7 58.5 L67.6 59.9 L67.0 61.3 L66.0 62.3 L64.6 62.9 L63.2 62.9 L61.8 62.4 L60.7 61.4 L60.1 60.0 L59.2 59.7 L59.8 61.0 L60.9 62.0 L62.3 62.5 L63.8 62.5 L65.1 61.9 L66.2 60.9 L66.8 59.6 L66.8 58.1 L66.4 56.7 L65.4 55.6 L64.1 54.9 L62.6 54.8Z" fill="#7F96AE"/><path d="M63.5 55.5 L64.9 55.6 L66.1 56.2 L66.9 57.2 L67.4 58.5 L67.3 59.9 L66.8 61.1 L65.8 62.0 L64.6 62.6 L63.2 62.6 L62.0 62.1 L61.0 61.2 L60.4 60.0 L59.9 59.8 L60.5 61.0 L61.5 61.9 L62.8 62.4 L64.1 62.4 L65.4 61.8 L66.3 60.9 L66.9 59.7 L67.0 58.3 L66.5 57.1 L65.6 56.0 L64.4 55.4 L63.1 55.3Z" fill="#A4A59E"/><path d="M66.6 56.6 L68.1 56.7 L69.4 57.4 L70.3 58.5 L70.8 59.9 L70.8 61.3 L70.2 62.7 L69.1 63.7 L67.7 64.3 L66.3 64.3 L64.9 63.8 L63.8 62.8 L63.2 61.5 L60.1 60.0 L60.7 61.4 L61.8 62.4 L63.2 62.9 L64.6 62.9 L66.0 62.3 L67.0 61.3 L67.6 59.9 L67.7 58.5 L67.2 57.1 L66.3 56.0 L65.0 55.3 L63.5 55.2Z" fill="#3A4A5E"/><path d="M47.5 51.6 L49.0 51.7 L50.3 52.4 L51.2 53.5 L51.7 54.9 L51.6 56.4 L51.0 57.7 L50.0 58.7 L48.6 59.3 L47.2 59.3 L45.8 58.8 L44.7 57.8 L44.1 56.5 L43.2 56.1 L43.8 57.4 L44.9 58.4 L46.3 58.9 L47.8 58.9 L49.1 58.4 L50.2 57.3 L50.8 56.0 L50.8 54.5 L50.4 53.1 L49.4 52.0 L48.1 51.4 L46.6 51.2Z" fill="#7F96AE"/><path d="M47.5 51.9 L48.9 52.0 L50.1 52.7 L50.9 53.7 L51.4 55.0 L51.3 56.3 L50.8 57.5 L49.8 58.5 L48.6 59.0 L47.2 59.0 L46.0 58.5 L45.0 57.6 L44.4 56.4 L43.9 56.2 L44.5 57.4 L45.5 58.3 L46.8 58.8 L48.1 58.8 L49.4 58.3 L50.3 57.3 L50.9 56.1 L51.0 54.8 L50.5 53.5 L49.6 52.5 L48.4 51.9 L47.1 51.7Z" fill="#A4A59E"/><path d="M50.6 53.0 L52.1 53.2 L53.4 53.8 L54.3 54.9 L54.8 56.3 L54.8 57.8 L54.2 59.1 L53.1 60.1 L51.7 60.7 L50.3 60.7 L48.9 60.2 L47.8 59.2 L47.2 57.9 L44.1 56.5 L44.7 57.8 L45.8 58.8 L47.2 59.3 L48.6 59.3 L50.0 58.7 L51.0 57.7 L51.6 56.4 L51.7 54.9 L51.2 53.5 L50.3 52.4 L49.0 51.7 L47.5 51.6Z" fill="#3A4A5E"/><path d="M143.5 94.3 L145.0 94.4 L146.3 95.1 L147.2 96.2 L147.7 97.6 L147.6 99.1 L147.0 100.4 L146.0 101.4 L144.6 102.0 L143.2 102.0 L141.8 101.5 L140.7 100.5 L140.1 99.2 L139.2 98.8 L139.8 100.1 L140.9 101.1 L142.3 101.6 L143.8 101.6 L145.1 101.0 L146.2 100.0 L146.8 98.7 L146.8 97.2 L146.4 95.8 L145.4 94.7 L144.1 94.0 L142.6 93.9Z" fill="#7F96AE"/><path d="M143.5 94.6 L144.9 94.7 L146.1 95.3 L146.9 96.4 L147.4 97.6 L147.3 99.0 L146.8 100.2 L145.8 101.1 L144.6 101.7 L143.2 101.7 L142.0 101.2 L141.0 100.3 L140.4 99.1 L139.9 98.9 L140.5 100.1 L141.5 101.0 L142.8 101.5 L144.1 101.5 L145.4 101.0 L146.3 100.0 L146.9 98.8 L147.0 97.4 L146.5 96.2 L145.6 95.1 L144.4 94.5 L143.1 94.4Z" fill="#A4A59E"/><path d="M146.6 95.7 L148.1 95.8 L149.4 96.5 L150.3 97.6 L150.8 99.0 L150.8 100.5 L150.2 101.8 L149.1 102.8 L147.7 103.4 L146.3 103.4 L144.9 102.9 L143.8 101.9 L143.2 100.6 L140.1 99.2 L140.7 100.5 L141.8 101.5 L143.2 102.0 L144.6 102.0 L146.0 101.4 L147.0 100.4 L147.6 99.1 L147.7 97.6 L147.2 96.2 L146.3 95.1 L145.0 94.4 L143.5 94.3Z" fill="#3A4A5E"/><path d="M81.3 108.5 L82.7 108.6 L84.0 109.3 L85.0 110.4 L85.5 111.8 L85.4 113.3 L84.8 114.6 L83.8 115.6 L82.4 116.2 L80.9 116.2 L79.6 115.7 L78.5 114.7 L77.8 113.4 L77.0 113.0 L77.6 114.3 L78.7 115.3 L80.1 115.8 L81.5 115.8 L82.9 115.2 L84.0 114.2 L84.6 112.9 L84.6 111.4 L84.1 110.0 L83.2 108.9 L81.9 108.3 L80.4 108.1Z" fill="#7F96AE"/><path d="M81.3 108.8 L82.6 108.9 L83.8 109.6 L84.7 110.6 L85.2 111.9 L85.1 113.2 L84.6 114.4 L83.6 115.4 L82.3 115.9 L81.0 115.9 L79.7 115.4 L78.7 114.5 L78.1 113.3 L77.7 113.1 L78.3 114.3 L79.3 115.2 L80.6 115.7 L81.9 115.7 L83.2 115.2 L84.1 114.2 L84.7 113.0 L84.7 111.7 L84.3 110.4 L83.4 109.4 L82.2 108.7 L80.9 108.6Z" fill="#A4A59E"/><path d="M84.4 109.9 L85.9 110.0 L87.2 110.7 L88.1 111.8 L88.6 113.2 L88.5 114.7 L87.9 116.0 L86.9 117.0 L85.5 117.6 L84.1 117.6 L82.7 117.1 L81.6 116.1 L81.0 114.8 L77.8 113.4 L78.5 114.7 L79.6 115.7 L80.9 116.2 L82.4 116.2 L83.8 115.6 L84.8 114.6 L85.4 113.3 L85.5 111.8 L85.0 110.4 L84.0 109.3 L82.7 108.6 L81.3 108.5Z" fill="#3A4A5E"/><path d="M100.8 110.3 L102.3 110.4 L103.6 111.1 L104.5 112.2 L105.0 113.6 L105.0 115.1 L104.4 116.4 L103.3 117.4 L102.0 118.0 L100.5 118.0 L99.1 117.5 L98.0 116.5 L97.4 115.2 L96.5 114.8 L97.2 116.1 L98.3 117.1 L99.6 117.6 L101.1 117.6 L102.5 117.0 L103.5 116.0 L104.1 114.7 L104.2 113.2 L103.7 111.8 L102.7 110.7 L101.4 110.0 L100.0 109.9Z" fill="#7F96AE"/><path d="M100.9 110.6 L102.2 110.7 L103.4 111.3 L104.3 112.4 L104.7 113.6 L104.7 115.0 L104.1 116.2 L103.1 117.1 L101.9 117.7 L100.5 117.7 L99.3 117.2 L98.3 116.3 L97.7 115.1 L97.3 114.9 L97.9 116.1 L98.9 117.0 L100.1 117.5 L101.5 117.5 L102.7 117.0 L103.7 116.0 L104.2 114.8 L104.3 113.4 L103.8 112.2 L103.0 111.1 L101.8 110.5 L100.4 110.4Z" fill="#A4A59E"/><path d="M103.9 111.7 L105.4 111.8 L106.7 112.5 L107.7 113.6 L108.1 115.0 L108.1 116.5 L107.5 117.8 L106.4 118.8 L105.1 119.4 L103.6 119.4 L102.2 118.9 L101.2 117.9 L100.5 116.6 L97.4 115.2 L98.0 116.5 L99.1 117.5 L100.5 118.0 L102.0 118.0 L103.3 117.4 L104.4 116.4 L105.0 115.1 L105.0 113.6 L104.5 112.2 L103.6 111.1 L102.3 110.4 L100.8 110.3Z" fill="#3A4A5E"/><path d="M-5.6 122.7 L-4.2 122.9 L-2.9 123.5 L-1.9 124.6 L-1.4 126.0 L-1.5 127.5 L-2.1 128.8 L-3.1 129.9 L-4.5 130.4 L-6.0 130.4 L-7.3 129.9 L-8.4 128.9 L-9.0 127.6 L-9.9 127.2 L-9.3 128.5 L-8.2 129.5 L-6.8 130.1 L-5.3 130.0 L-4.0 129.5 L-2.9 128.4 L-2.3 127.1 L-2.3 125.6 L-2.8 124.3 L-3.7 123.2 L-5.0 122.5 L-6.5 122.3Z" fill="#7F96AE"/><path d="M-5.6 123.0 L-4.2 123.2 L-3.1 123.8 L-2.2 124.8 L-1.7 126.1 L-1.8 127.4 L-2.3 128.7 L-3.3 129.6 L-4.5 130.1 L-5.9 130.1 L-7.2 129.6 L-8.2 128.7 L-8.7 127.5 L-9.2 127.3 L-8.6 128.5 L-7.6 129.5 L-6.3 129.9 L-5.0 129.9 L-3.7 129.4 L-2.8 128.5 L-2.2 127.2 L-2.2 125.9 L-2.6 124.6 L-3.5 123.6 L-4.7 123.0 L-6.0 122.8Z" fill="#A4A59E"/><path d="M-2.5 124.1 L-1.0 124.3 L0.3 124.9 L1.2 126.0 L1.7 127.4 L1.6 128.9 L1.0 130.2 L-0.0 131.3 L-1.4 131.8 L-2.8 131.8 L-4.2 131.3 L-5.3 130.3 L-5.9 129.0 L-9.0 127.6 L-8.4 128.9 L-7.3 129.9 L-6.0 130.4 L-4.5 130.4 L-3.1 129.9 L-2.1 128.8 L-1.5 127.5 L-1.4 126.0 L-1.9 124.6 L-2.9 123.5 L-4.2 122.9 L-5.6 122.7Z" fill="#3A4A5E"/><path d="M152.4 122.7 L153.8 122.9 L155.1 123.5 L156.1 124.6 L156.6 126.0 L156.5 127.5 L155.9 128.8 L154.9 129.9 L153.5 130.4 L152.0 130.4 L150.7 129.9 L149.6 128.9 L149.0 127.6 L148.1 127.2 L148.7 128.5 L149.8 129.5 L151.2 130.1 L152.7 130.0 L154.0 129.5 L155.1 128.4 L155.7 127.1 L155.7 125.6 L155.2 124.3 L154.3 123.2 L153.0 122.5 L151.5 122.3Z" fill="#7F96AE"/><path d="M152.4 123.0 L153.8 123.2 L154.9 123.8 L155.8 124.8 L156.3 126.1 L156.2 127.4 L155.7 128.7 L154.7 129.6 L153.5 130.1 L152.1 130.1 L150.8 129.6 L149.8 128.7 L149.3 127.5 L148.8 127.3 L149.4 128.5 L150.4 129.5 L151.7 129.9 L153.0 129.9 L154.3 129.4 L155.2 128.5 L155.8 127.2 L155.8 125.9 L155.4 124.6 L154.5 123.6 L153.3 123.0 L152.0 122.8Z" fill="#A4A59E"/><path d="M155.5 124.1 L157.0 124.3 L158.3 124.9 L159.2 126.0 L159.7 127.4 L159.6 128.9 L159.0 130.2 L158.0 131.3 L156.6 131.8 L155.2 131.8 L153.8 131.3 L152.7 130.3 L152.1 129.0 L149.0 127.6 L149.6 128.9 L150.7 129.9 L152.0 130.4 L153.5 130.4 L154.9 129.9 L155.9 128.8 L156.5 127.5 L156.6 126.0 L156.1 124.6 L155.1 123.5 L153.8 122.9 L152.4 122.7Z" fill="#3A4A5E"/><path d="M64 12 h5 M66 10 v5" stroke="#C8C4B8" stroke-width="1"/><path d="M35 84 h5 M38 82 v5" stroke="#C8C4B8" stroke-width="1"/><path d="M69 99 h5 M72 97 v5" stroke="#C8C4B8" stroke-width="1"/><path d="M119 66 h5 M121 64 v5" stroke="#C8C4B8" stroke-width="1"/><path d="M115 141 h5 M118 139 v5" stroke="#C8C4B8" stroke-width="1"/></pattern></defs><rect width="1152" height="900" fill="#657C97"/><rect width="1152" height="900" filter="url(#nz)"/><rect width="1152" height="900" filter="url(#nz2)"/><rect width="1152" height="900" filter="url(#nz3)"/><rect width="1152" height="900" fill="url(#dr)"/></svg><div style="left:2px;top:6px;width:60px;height:78px;background:#AEB2C3;border-top:2px solid #E2E3EA;border-left:2px solid #E2E3EA;border-right:1px solid #55586A;border-bottom:1px solid #55586A"></div><div style="left:6px;top:10px;width:52px;height:52px;border:1px solid #5E6170;border-right-color:#E2E3EA;border-bottom-color:#E2E3EA"></div><svg style="position:absolute;left:9px;top:15px" width="48" height="41" shape-rendering="crispEdges"><rect x="6.5" y="0.5" width="33" height="26" rx="3" fill="#E6E6E6" stroke="#4A4A4A"/><rect x="8" y="24" width="30" height="2" fill="#8A8A8A"/><rect x="10.5" y="5.5" width="25" height="17" fill="#3E3E3E" stroke="#9A9A9A"/><rect x="14.0" y="8" width="1.5" height="1" fill="#E8E8E8"/><rect x="16.5" y="8" width="1.5" height="1" fill="#E8E8E8"/><rect x="19.0" y="8" width="1.5" height="1" fill="#E8E8E8"/><rect x="21.5" y="8" width="1.5" height="1" fill="#E8E8E8"/><rect x="24.0" y="8" width="1.5" height="1" fill="#E8E8E8"/><rect x="26.5" y="8" width="1.5" height="1" fill="#E8E8E8"/><rect x="14.0" y="10" width="1.5" height="1" fill="#E8E8E8"/><rect x="16.5" y="10" width="1.5" height="1" fill="#E8E8E8"/><rect x="19.0" y="10" width="1.5" height="1" fill="#E8E8E8"/><rect x="21.5" y="10" width="1.5" height="1" fill="#E8E8E8"/><rect x="24.0" y="10" width="1.5" height="1" fill="#E8E8E8"/><rect x="14.0" y="12" width="1.5" height="1" fill="#E8E8E8"/><rect x="16.5" y="12" width="1.5" height="1" fill="#E8E8E8"/><rect x="19.0" y="12" width="1.5" height="1" fill="#E8E8E8"/><rect x="21.5" y="12" width="1.5" height="1" fill="#E8E8E8"/><rect x="24.0" y="12" width="1.5" height="1" fill="#E8E8E8"/><rect x="26.5" y="12" width="1.5" height="1" fill="#E8E8E8"/><rect x="14.0" y="14" width="1.5" height="1" fill="#E8E8E8"/><rect x="16.5" y="14" width="1.5" height="1" fill="#E8E8E8"/><rect x="19.0" y="14" width="1.5" height="1" fill="#E8E8E8"/><rect x="21.5" y="14" width="1.5" height="1" fill="#E8E8E8"/><rect x="24.0" y="14" width="1.5" height="1" fill="#E8E8E8"/><rect x="14.0" y="16" width="1.5" height="1" fill="#E8E8E8"/><rect x="16.5" y="16" width="1.5" height="1" fill="#E8E8E8"/><rect x="19.0" y="16" width="1.5" height="1" fill="#E8E8E8"/><rect x="21.5" y="16" width="1.5" height="1" fill="#E8E8E8"/><rect x="24.0" y="16" width="1.5" height="1" fill="#E8E8E8"/><rect x="26.5" y="16" width="1.5" height="1" fill="#E8E8E8"/><rect x="14.5" y="26.5" width="18" height="4" fill="#5E5E5E" stroke="#3A3A3A" stroke-width="0.6"/><path d="M6 30.5 H41 L47 37 V40.5 H0.5 V37 Z" fill="#E2E2E2" stroke="#3A3A3A"/><rect x="1" y="38" width="46" height="2.5" fill="#2A2A2A"/><path d="M9 35 L11 32 M12 35 L14 32 M15 35 L17 32 M18 35 L20 32 M21 35 L23 32 M24 35 L26 32 M27 35 L29 32 M30 35 L32 32 M36 35 L38 32 M39 35 L41 32" stroke="#909090" stroke-width="1"/></svg><div style="left:3px;top:63px;width:58px;height:1px;background:#5E6170"></div><div style="left:3px;top:64px;width:58px;height:1px;background:#E2E3EA"></div><div class="s" style="left:6px;top:67px;font-size:14.5px;line-height:17px;width:53px;overflow:hidden">Console</div><div style="left:2px;top:96px;width:60px;height:78px;background:#AEB2C3;border-top:2px solid #E2E3EA;border-left:2px solid #E2E3EA;border-right:1px solid #55586A;border-bottom:1px solid #55586A"></div><div style="left:6px;top:100px;width:52px;height:52px;border:1px solid #5E6170;border-right-color:#E2E3EA;border-bottom-color:#E2E3EA"></div><svg style="position:absolute;left:9px;top:105px" width="48" height="41" shape-rendering="crispEdges"><rect x="6.5" y="0.5" width="33" height="26" rx="3" fill="#E6E6E6" stroke="#4A4A4A"/><rect x="8" y="24" width="30" height="2" fill="#8A8A8A"/><rect x="10.5" y="5.5" width="25" height="17" fill="#3E3E3E" stroke="#9A9A9A"/><rect x="14.0" y="8" width="1.5" height="1" fill="#E8E8E8"/><rect x="16.5" y="8" width="1.5" height="1" fill="#E8E8E8"/><rect x="19.0" y="8" width="1.5" height="1" fill="#E8E8E8"/><rect x="21.5" y="8" width="1.5" height="1" fill="#E8E8E8"/><rect x="24.0" y="8" width="1.5" height="1" fill="#E8E8E8"/><rect x="26.5" y="8" width="1.5" height="1" fill="#E8E8E8"/><rect x="14.0" y="10" width="1.5" height="1" fill="#E8E8E8"/><rect x="16.5" y="10" width="1.5" height="1" fill="#E8E8E8"/><rect x="19.0" y="10" width="1.5" height="1" fill="#E8E8E8"/><rect x="21.5" y="10" width="1.5" height="1" fill="#E8E8E8"/><rect x="24.0" y="10" width="1.5" height="1" fill="#E8E8E8"/><rect x="14.0" y="12" width="1.5" height="1" fill="#E8E8E8"/><rect x="16.5" y="12" width="1.5" height="1" fill="#E8E8E8"/><rect x="19.0" y="12" width="1.5" height="1" fill="#E8E8E8"/><rect x="21.5" y="12" width="1.5" height="1" fill="#E8E8E8"/><rect x="24.0" y="12" width="1.5" height="1" fill="#E8E8E8"/><rect x="26.5" y="12" width="1.5" height="1" fill="#E8E8E8"/><rect x="14.0" y="14" width="1.5" height="1" fill="#E8E8E8"/><rect x="16.5" y="14" width="1.5" height="1" fill="#E8E8E8"/><rect x="19.0" y="14" width="1.5" height="1" fill="#E8E8E8"/><rect x="21.5" y="14" width="1.5" height="1" fill="#E8E8E8"/><rect x="24.0" y="14" width="1.5" height="1" fill="#E8E8E8"/><rect x="14.0" y="16" width="1.5" height="1" fill="#E8E8E8"/><rect x="16.5" y="16" width="1.5" height="1" fill="#E8E8E8"/><rect x="19.0" y="16" width="1.5" height="1" fill="#E8E8E8"/><rect x="21.5" y="16" width="1.5" height="1" fill="#E8E8E8"/><rect x="24.0" y="16" width="1.5" height="1" fill="#E8E8E8"/><rect x="26.5" y="16" width="1.5" height="1" fill="#E8E8E8"/><rect x="14.5" y="26.5" width="18" height="4" fill="#5E5E5E" stroke="#3A3A3A" stroke-width="0.6"/><path d="M6 30.5 H41 L47 37 V40.5 H0.5 V37 Z" fill="#E2E2E2" stroke="#3A3A3A"/><rect x="1" y="38" width="46" height="2.5" fill="#2A2A2A"/><path d="M9 35 L11 32 M12 35 L14 32 M15 35 L17 32 M18 35 L20 32 M21 35 L23 32 M24 35 L26 32 M27 35 L29 32 M30 35 L32 32 M36 35 L38 32 M39 35 L41 32" stroke="#909090" stroke-width="1"/></svg><div style="left:3px;top:153px;width:58px;height:1px;background:#5E6170"></div><div style="left:3px;top:154px;width:58px;height:1px;background:#E2E3EA"></div><div class="s" style="left:6px;top:157px;font-size:14.5px;line-height:17px;width:53px;overflow:hidden">Terminal</div><div style="left:74px;top:15px;width:780px;height:735px;background:#B34D7A"></div><div style="left:74px;top:15px;width:780px;height:2px;background:#E8A9C6"></div><div style="left:74px;top:15px;width:2px;height:735px;background:#E8A9C6"></div><div style="left:74px;top:748px;width:780px;height:2px;background:#5C1F3D"></div><div style="left:852px;top:15px;width:2px;height:735px;background:#5C1F3D"></div><div style="left:78px;top:19px;width:772px;height:1px;background:#5C1F3D"></div><div style="left:78px;top:19px;width:1px;height:727px;background:#5C1F3D"></div><div style="left:78px;top:745px;width:772px;height:1px;background:#E8A9C6"></div><div style="left:849px;top:19px;width:1px;height:727px;background:#E8A9C6"></div><div style="left:97px;top:15px;width:1px;height:5px;background:#5C1F3D"></div><div style="left:98px;top:15px;width:1px;height:5px;background:#E8A9C6"></div><div style="left:97px;top:745px;width:1px;height:5px;background:#5C1F3D"></div><div style="left:98px;top:745px;width:1px;height:5px;background:#E8A9C6"></div><div style="left:830px;top:15px;width:1px;height:5px;background:#5C1F3D"></div><div style="left:831px;top:15px;width:1px;height:5px;background:#E8A9C6"></div><div style="left:830px;top:745px;width:1px;height:5px;background:#5C1F3D"></div><div style="left:831px;top:745px;width:1px;height:5px;background:#E8A9C6"></div><div style="left:74px;top:38px;width:5px;height:1px;background:#5C1F3D"></div><div style="left:74px;top:39px;width:5px;height:1px;background:#E8A9C6"></div><div style="left:849px;top:38px;width:5px;height:1px;background:#5C1F3D"></div><div style="left:849px;top:39px;width:5px;height:1px;background:#E8A9C6"></div><div style="left:74px;top:726px;width:5px;height:1px;background:#5C1F3D"></div><div style="left:74px;top:727px;width:5px;height:1px;background:#E8A9C6"></div><div style="left:849px;top:726px;width:5px;height:1px;background:#5C1F3D"></div><div style="left:849px;top:727px;width:5px;height:1px;background:#E8A9C6"></div><div style="left:79px;top:20px;width:19px;height:19px;background:#B34D7A"></div><div style="left:79px;top:20px;width:19px;height:1px;background:#E8A9C6"></div><div style="left:79px;top:20px;width:1px;height:19px;background:#E8A9C6"></div><div style="left:79px;top:38px;width:19px;height:1px;background:#5C1F3D"></div><div style="left:97px;top:20px;width:1px;height:19px;background:#5C1F3D"></div><div style="left:98px;top:20px;width:713px;height:19px;background:#B34D7A"></div><div style="left:98px;top:20px;width:713px;height:1px;background:#E8A9C6"></div><div style="left:98px;top:20px;width:1px;height:19px;background:#E8A9C6"></div><div style="left:98px;top:38px;width:713px;height:1px;background:#5C1F3D"></div><div style="left:810px;top:20px;width:1px;height:19px;background:#5C1F3D"></div><div style="left:811px;top:20px;width:19px;height:19px;background:#B34D7A"></div><div style="left:811px;top:20px;width:19px;height:1px;background:#E8A9C6"></div><div style="left:811px;top:20px;width:1px;height:19px;background:#E8A9C6"></div><div style="left:811px;top:38px;width:19px;height:1px;background:#5C1F3D"></div><div style="left:829px;top:20px;width:1px;height:19px;background:#5C1F3D"></div><div style="left:830px;top:20px;width:19px;height:19px;background:#B34D7A"></div><div style="left:830px;top:20px;width:19px;height:1px;background:#E8A9C6"></div><div style="left:830px;top:20px;width:1px;height:19px;background:#E8A9C6"></div><div style="left:830px;top:38px;width:19px;height:1px;background:#5C1F3D"></div><div style="left:848px;top:20px;width:1px;height:19px;background:#5C1F3D"></div><div style="left:83px;top:27px;width:11px;height:4px;border-top:1px solid #E8A9C6;border-left:1px solid #E8A9C6;border-right:1px solid #5C1F3D;border-bottom:1px solid #5C1F3D"></div><div style="left:818px;top:27px;width:4px;height:4px;border-top:1px solid #E8A9C6;border-left:1px solid #E8A9C6;border-right:1px solid #5C1F3D;border-bottom:1px solid #5C1F3D"></div><div style="left:834px;top:24px;width:11px;height:11px;border-top:1px solid #E8A9C6;border-left:1px solid #E8A9C6;border-right:1px solid #5C1F3D;border-bottom:1px solid #5C1F3D"></div><div class="s" style="left:98px;top:21px;width:713px;height:19px;text-align:center;color:#F4F4F4;font-size:15px;line-height:19px;letter-spacing:0.3px">explain</div><div style="left:79px;top:39px;width:770px;height:706px;background:#AEB2C3"></div><div class="hl" style="left:79px;top:39px;width:770px;height:2px;"></div><div class="hl" style="left:79px;top:39px;width:2px;height:29px;"></div><div class="hd" style="left:79px;top:66px;width:770px;height:2px;"></div><div class="hd" style="left:847px;top:39px;width:2px;height:29px;"></div><div class="m" style="left:88px;top:49.3px;">File</div><div style="left:88px;top:59px;width:7px;height:2px;background:#000"></div><div class="hl" style="left:79px;top:68px;width:770px;height:3px;"></div><div class="hl" style="left:79px;top:68px;width:3px;height:247px;"></div><div class="hd" style="left:79px;top:312px;width:770px;height:3px;"></div><div class="hd" style="left:846px;top:68px;width:3px;height:247px;"></div><div class="hl" style="left:79px;top:315px;width:770px;height:3px;"></div><div class="hl" style="left:79px;top:315px;width:3px;height:161px;"></div><div class="hd" style="left:79px;top:473px;width:770px;height:3px;"></div><div class="hd" style="left:846px;top:315px;width:3px;height:161px;"></div><div class="hl" style="left:79px;top:476px;width:770px;height:3px;"></div><div class="hl" style="left:79px;top:476px;width:3px;height:226px;"></div><div class="hd" style="left:79px;top:699px;width:770px;height:3px;"></div><div class="hd" style="left:846px;top:476px;width:3px;height:226px;"></div><div class="hl" style="left:79px;top:702px;width:770px;height:3px;"></div><div class="hl" style="left:79px;top:702px;width:3px;height:43px;"></div><div class="hd" style="left:79px;top:742px;width:770px;height:3px;"></div><div class="hd" style="left:846px;top:702px;width:3px;height:43px;"></div><div class="m" style="left:86px;top:75.6px;">Query Plan for select statement.  Cost = 10</div><div style="left:82px;top:90px;width:764px;height:199px;border:2px solid #000"></div><div style="left:90px;top:94px;width:9px;height:9px;border:1px solid #000"></div><div style="left:92px;top:98px;width:5px;height:1px;background:#000"></div><div class="m" style="left:108px;top:94.8px;">SORT GROUP BY using PQS :Q65003 PARALLEL_TO_SERIAL</div><div style="left:124px;top:107px;width:364px;height:15px;background:#E4E4E4"></div><div style="left:124px;top:107px;width:364px;height:1px;background-image:repeating-linear-gradient(90deg,#000 0 1px,transparent 1px 2px)"></div><div style="left:124px;top:121px;width:364px;height:1px;background-image:repeating-linear-gradient(90deg,#000 0 1px,transparent 1px 2px)"></div><div style="left:124px;top:107px;width:1px;height:15px;background-image:repeating-linear-gradient(180deg,#000 0 1px,transparent 1px 2px)"></div><div style="left:487px;top:107px;width:1px;height:15px;background-image:repeating-linear-gradient(180deg,#000 0 1px,transparent 1px 2px)"></div><div style="left:113px;top:109px;width:9px;height:9px;border:1px solid #000"></div><div style="left:115px;top:113px;width:5px;height:1px;background:#000"></div><div style="left:125px;top:113px;width:3px;height:1px;background:#000"></div><div class="m" style="left:128px;top:109.8px;">NESTED LOOPS using PQS :Q65002 PARALLEL_TO_PARALLEL</div><div style="left:133px;top:124px;width:9px;height:9px;border:1px solid #000"></div><div style="left:135px;top:128px;width:5px;height:1px;background:#000"></div><div style="left:145px;top:128px;width:3px;height:1px;background:#000"></div><div class="m" style="left:148px;top:124.8px;">HASH JOIN using PQS :Q65002 PARALLEL_COMBINED_WITH_PARENT</div><div style="left:153px;top:139px;width:9px;height:9px;border:1px solid #000"></div><div style="left:155px;top:143px;width:5px;height:1px;background:#000"></div><div style="left:165px;top:143px;width:3px;height:1px;background:#000"></div><div class="m" style="left:168px;top:139.8px;">MERGE JOIN CARTESIAN using PQS :Q65000 PARALLEL_FROM_SERIAL</div><div style="left:177px;top:158px;width:11px;height:1px;background:#000"></div><div class="m" style="left:188px;top:154.8px;">TABLE ACCESS FULL of OPS$ALANBUR.PROD</div><div style="left:173px;top:169px;width:9px;height:9px;border:1px solid #000"></div><div style="left:175px;top:173px;width:5px;height:1px;background:#000"></div><div style="left:185px;top:173px;width:3px;height:1px;background:#000"></div><div class="m" style="left:188px;top:169.8px;">SORT JOIN</div><div style="left:197px;top:188px;width:11px;height:1px;background:#000"></div><div class="m" style="left:208px;top:184.8px;">TABLE ACCESS FULL of OPS$ALANBUR.DAY</div><div style="left:157px;top:203px;width:11px;height:1px;background:#000"></div><div class="m" style="left:168px;top:199.8px;">TABLE ACCESS FULL of OPS$ALANBUR.ORD using PQS :Q65001 PARALLEL_TO_PARALLEL</div><div style="left:137px;top:218px;width:11px;height:1px;background:#000"></div><div class="m" style="left:148px;top:214.8px;">INDEX UNIQUE SCAN UNIQUE of OPS$ALANBUR.SYS_C002190 using PQS :Q65002 PARALLEL_COMBINED_WITH_PARENT</div><div style="left:117px;top:104px;width:1px;height:5px;background:#000"></div><div style="left:137px;top:119px;width:1px;height:5px;background:#000"></div><div style="left:137px;top:133px;width:1px;height:86px;background:#000"></div><div style="left:157px;top:134px;width:1px;height:5px;background:#000"></div><div style="left:157px;top:148px;width:1px;height:56px;background:#000"></div><div style="left:177px;top:149px;width:1px;height:20px;background:#000"></div><div style="left:197px;top:179px;width:1px;height:10px;background:#000"></div><div style="left:82px;top:289px;width:764px;height:22px;border:2px solid #E8E8E6"></div><div class="hd" style="left:84px;top:291px;width:760px;height:2px;"></div><div class="hd" style="left:84px;top:291px;width:2px;height:18px;"></div><div class="hl" style="left:84px;top:307px;width:760px;height:2px;"></div><div class="hl" style="left:842px;top:291px;width:2px;height:18px;"></div><div style="left:86px;top:293px;width:16px;height:14px;background:#C6C6C6"></div><div style="left:821px;top:293px;width:21px;height:14px;background:#C6C6C6"></div><div class="hl" style="left:102px;top:293px;width:719px;height:2px;"></div><div class="hl" style="left:102px;top:293px;width:2px;height:14px;"></div><div class="hd" style="left:102px;top:305px;width:719px;height:2px;"></div><div class="hd" style="left:819px;top:293px;width:2px;height:14px;"></div><svg style="position:absolute;left:86px;top:293px" width="16" height="14"><path d="M2 7 L15 0 V14 Z" fill="#AEB2C3"/><path d="M2.5 7 L14.5 0.5" stroke="#fff" stroke-width="1.6" stroke-dasharray="1.2 1.2"/><path d="M2.5 7 L14.5 13.5" stroke="#000" stroke-width="1.6" stroke-dasharray="1.2 1.2"/><path d="M14.5 0 V14" stroke="#000" stroke-width="1.6" stroke-dasharray="1 1"/></svg><svg style="position:absolute;left:823px;top:293px" width="19" height="14"><path d="M3 0 L17 7 L3 14 Z" fill="#AEB2C3"/><path d="M3.5 0 V14" stroke="#fff" stroke-width="1.6" stroke-dasharray="1 1"/><path d="M3.5 0.5 L16.5 7" stroke="#fff" stroke-width="1.6" stroke-dasharray="1.2 1.2"/><path d="M16.5 7 L3.5 13.5" stroke="#000" stroke-width="1.6" stroke-dasharray="1.2 1.2"/></svg><div class="m" style="left:86px;top:322.90000000000003px;">Query Step Details</div><div style="left:82px;top:337px;width:764px;height:136px;border:2px solid #E8E8E6"></div><div class="m" style="left:85px;top:342.0px;">Id:     2       Position:       1       Parent Id:      1
Cost:   6       Cardinality:    3       Bytes:          195

SELECT /*+ PIV_GB */ A1.C0 C0,SUM(A1.C1) C1,COUNT(*) C2 FROM (SELECT /*+ ORDERED
NO_EXPAND USE_NL(A3) INDEX(A3) */ A2.C0 C0,A2.C2 C1 FROM (SELECT /*+ ORDERED
NO_EXPAND USE_HASH(A5) */ A4.C2 C0,A5.C2 C1,A5.C3 C2 FROM :Q65000 A4,:Q65001 A5
WHERE A4.C1=A5.C1 AND A4.C0=A5.C0) A2,&quot;CUST&quot; A3 WHERE A3.&quot;CUST_ID&quot;=A2.C1) A1
GROUP BY A1.C0</div><div class="m" style="left:86px;top:484.1px;">SQL Editor</div><div style="left:82px;top:498px;width:764px;height:201px;border:2px solid #E8E8E6"></div><div class="m" style="left:85px;top:502.7px;">select /*+ parallel(o, 3) */
product, count(customer), sum(value)
from prod p, cust c, day d, ord o
where dayname in (´monday´, ´tuesday´, ´wednesday´)
and p.prod_id = o.prod_id
and c.cust_id = o.cust_id
and d.day = o.day
group by product;</div><div style="left:423px;top:708px;width:81px;height:31px;border:2px solid #E8E8E6"></div><div class="hl" style="left:425px;top:710px;width:77px;height:2px;"></div><div class="hl" style="left:425px;top:710px;width:2px;height:27px;"></div><div class="hd" style="left:425px;top:735px;width:77px;height:2px;"></div><div class="hd" style="left:500px;top:710px;width:2px;height:27px;"></div><div class="m" style="left:437.5px;top:717.8px;">Explain</div><div style="left:894px;top:36px;width:180px;height:180px;background:#AEB2C3"></div><div style="left:894px;top:36px;width:180px;height:2px;background:#E2E3EA"></div><div style="left:894px;top:36px;width:2px;height:180px;background:#E2E3EA"></div><div style="left:894px;top:214px;width:180px;height:2px;background:#595C6C"></div><div style="left:1072px;top:36px;width:2px;height:180px;background:#595C6C"></div><div style="left:898px;top:40px;width:172px;height:1px;background:#595C6C"></div><div style="left:898px;top:40px;width:1px;height:172px;background:#595C6C"></div><div style="left:898px;top:211px;width:172px;height:1px;background:#E2E3EA"></div><div style="left:1069px;top:40px;width:1px;height:172px;background:#E2E3EA"></div><div style="left:917px;top:36px;width:1px;height:5px;background:#595C6C"></div><div style="left:918px;top:36px;width:1px;height:5px;background:#E2E3EA"></div><div style="left:917px;top:211px;width:1px;height:5px;background:#595C6C"></div><div style="left:918px;top:211px;width:1px;height:5px;background:#E2E3EA"></div><div style="left:1050px;top:36px;width:1px;height:5px;background:#595C6C"></div><div style="left:1051px;top:36px;width:1px;height:5px;background:#E2E3EA"></div><div style="left:1050px;top:211px;width:1px;height:5px;background:#595C6C"></div><div style="left:1051px;top:211px;width:1px;height:5px;background:#E2E3EA"></div><div style="left:894px;top:59px;width:5px;height:1px;background:#595C6C"></div><div style="left:894px;top:60px;width:5px;height:1px;background:#E2E3EA"></div><div style="left:1069px;top:59px;width:5px;height:1px;background:#595C6C"></div><div style="left:1069px;top:60px;width:5px;height:1px;background:#E2E3EA"></div><div style="left:894px;top:192px;width:5px;height:1px;background:#595C6C"></div><div style="left:894px;top:193px;width:5px;height:1px;background:#E2E3EA"></div><div style="left:1069px;top:192px;width:5px;height:1px;background:#595C6C"></div><div style="left:1069px;top:193px;width:5px;height:1px;background:#E2E3EA"></div><div style="left:899px;top:41px;width:19px;height:19px;background:#AEB2C3"></div><div style="left:899px;top:41px;width:19px;height:1px;background:#E2E3EA"></div><div style="left:899px;top:41px;width:1px;height:19px;background:#E2E3EA"></div><div style="left:899px;top:59px;width:19px;height:1px;background:#595C6C"></div><div style="left:917px;top:41px;width:1px;height:19px;background:#595C6C"></div><div style="left:918px;top:41px;width:113px;height:19px;background:#AEB2C3"></div><div style="left:918px;top:41px;width:113px;height:1px;background:#E2E3EA"></div><div style="left:918px;top:41px;width:1px;height:19px;background:#E2E3EA"></div><div style="left:918px;top:59px;width:113px;height:1px;background:#595C6C"></div><div style="left:1030px;top:41px;width:1px;height:19px;background:#595C6C"></div><div style="left:1031px;top:41px;width:19px;height:19px;background:#AEB2C3"></div><div style="left:1031px;top:41px;width:19px;height:1px;background:#E2E3EA"></div><div style="left:1031px;top:41px;width:1px;height:19px;background:#E2E3EA"></div><div style="left:1031px;top:59px;width:19px;height:1px;background:#595C6C"></div><div style="left:1049px;top:41px;width:1px;height:19px;background:#595C6C"></div><div style="left:1050px;top:41px;width:19px;height:19px;background:#AEB2C3"></div><div style="left:1050px;top:41px;width:19px;height:1px;background:#E2E3EA"></div><div style="left:1050px;top:41px;width:1px;height:19px;background:#E2E3EA"></div><div style="left:1050px;top:59px;width:19px;height:1px;background:#595C6C"></div><div style="left:1068px;top:41px;width:1px;height:19px;background:#595C6C"></div><div style="left:903px;top:48px;width:11px;height:4px;border-top:1px solid #E2E3EA;border-left:1px solid #E2E3EA;border-right:1px solid #595C6C;border-bottom:1px solid #595C6C"></div><div style="left:1038px;top:48px;width:4px;height:4px;border-top:1px solid #E2E3EA;border-left:1px solid #E2E3EA;border-right:1px solid #595C6C;border-bottom:1px solid #595C6C"></div><div style="left:1054px;top:45px;width:11px;height:11px;border-top:1px solid #E2E3EA;border-left:1px solid #E2E3EA;border-right:1px solid #595C6C;border-bottom:1px solid #595C6C"></div><div class="s" style="left:918px;top:42px;width:113px;height:19px;text-align:center;color:#000;font-size:14px;line-height:19px;">Table</div><div style="left:899px;top:60px;width:170px;height:151px;background:#AEB2C3"></div><div class="hl" style="left:899px;top:60px;width:170px;height:2px;"></div><div class="hl" style="left:899px;top:60px;width:2px;height:114px;"></div><div class="hd" style="left:899px;top:172px;width:170px;height:2px;"></div><div class="hd" style="left:1067px;top:60px;width:2px;height:114px;"></div><div style="left:901px;top:62px;width:166px;height:1px;background-image:repeating-linear-gradient(90deg,#000 0 1px,transparent 1px 2px)"></div><div style="left:901px;top:62px;width:1px;height:17px;background-image:repeating-linear-gradient(180deg,#000 0 1px,transparent 1px 2px)"></div><div style="left:901px;top:78px;width:166px;height:1px;background-image:repeating-linear-gradient(90deg,#fff 0 1px,transparent 1px 2px)"></div><div style="left:1066px;top:62px;width:1px;height:17px;background-image:repeating-linear-gradient(180deg,#fff 0 1px,transparent 1px 2px)"></div><div style="left:901px;top:79px;width:76px;height:1px;background-image:repeating-linear-gradient(90deg,#000 0 1px,transparent 1px 2px)"></div><div style="left:901px;top:79px;width:1px;height:17px;background-image:repeating-linear-gradient(180deg,#000 0 1px,transparent 1px 2px)"></div><div style="left:901px;top:95px;width:76px;height:1px;background-image:repeating-linear-gradient(90deg,#fff 0 1px,transparent 1px 2px)"></div><div style="left:976px;top:79px;width:1px;height:17px;background-image:repeating-linear-gradient(180deg,#fff 0 1px,transparent 1px 2px)"></div><div style="left:977px;top:79px;width:90px;height:1px;background-image:repeating-linear-gradient(90deg,#000 0 1px,transparent 1px 2px)"></div><div style="left:977px;top:79px;width:1px;height:17px;background-image:repeating-linear-gradient(180deg,#000 0 1px,transparent 1px 2px)"></div><div style="left:977px;top:95px;width:90px;height:1px;background-image:repeating-linear-gradient(90deg,#fff 0 1px,transparent 1px 2px)"></div><div style="left:1066px;top:79px;width:1px;height:17px;background-image:repeating-linear-gradient(180deg,#fff 0 1px,transparent 1px 2px)"></div><div class="m" style="left:901px;top:65.7px;width:166px;text-align:center">OPS$ALANBUR.ORD</div><div class="m" style="left:901px;top:83.1px;width:76px;text-align:center">Name</div><div class="m" style="left:977px;top:83.1px;width:90px;text-align:center">Type</div><div class="m" style="left:904px;top:101.3px;">CUST_ID</div><div class="m" style="left:980px;top:101.3px;">NUMBER(4)</div><div class="m" style="left:904px;top:120.3px;">PROD_ID</div><div class="m" style="left:980px;top:120.3px;">NUMBER(4)</div><div class="m" style="left:904px;top:139.3px;">DAY</div><div class="m" style="left:980px;top:139.3px;">DATE</div><div class="m" style="left:904px;top:158.3px;">VALUE</div><div class="m" style="left:980px;top:158.3px;">NUMBER(10,2)</div><div style="left:950px;top:177px;width:66px;height:31px;border:2px solid #E8E8E6"></div><div class="hl" style="left:952px;top:179px;width:62px;height:2px;"></div><div class="hl" style="left:952px;top:179px;width:2px;height:27px;"></div><div class="hd" style="left:952px;top:204px;width:62px;height:2px;"></div><div class="hd" style="left:1012px;top:179px;width:2px;height:27px;"></div><div class="m" style="left:965px;top:187.10000000000002px;">Close</div><div style="left:875px;top:234px;width:212px;height:122px;background:#AEB2C3"></div><div style="left:875px;top:234px;width:212px;height:2px;background:#E2E3EA"></div><div style="left:875px;top:234px;width:2px;height:122px;background:#E2E3EA"></div><div style="left:875px;top:354px;width:212px;height:2px;background:#595C6C"></div><div style="left:1085px;top:234px;width:2px;height:122px;background:#595C6C"></div><div style="left:879px;top:238px;width:204px;height:1px;background:#595C6C"></div><div style="left:879px;top:238px;width:1px;height:114px;background:#595C6C"></div><div style="left:879px;top:351px;width:204px;height:1px;background:#E2E3EA"></div><div style="left:1082px;top:238px;width:1px;height:114px;background:#E2E3EA"></div><div style="left:898px;top:234px;width:1px;height:5px;background:#595C6C"></div><div style="left:899px;top:234px;width:1px;height:5px;background:#E2E3EA"></div><div style="left:898px;top:351px;width:1px;height:5px;background:#595C6C"></div><div style="left:899px;top:351px;width:1px;height:5px;background:#E2E3EA"></div><div style="left:1063px;top:234px;width:1px;height:5px;background:#595C6C"></div><div style="left:1064px;top:234px;width:1px;height:5px;background:#E2E3EA"></div><div style="left:1063px;top:351px;width:1px;height:5px;background:#595C6C"></div><div style="left:1064px;top:351px;width:1px;height:5px;background:#E2E3EA"></div><div style="left:875px;top:257px;width:5px;height:1px;background:#595C6C"></div><div style="left:875px;top:258px;width:5px;height:1px;background:#E2E3EA"></div><div style="left:1082px;top:257px;width:5px;height:1px;background:#595C6C"></div><div style="left:1082px;top:258px;width:5px;height:1px;background:#E2E3EA"></div><div style="left:875px;top:332px;width:5px;height:1px;background:#595C6C"></div><div style="left:875px;top:333px;width:5px;height:1px;background:#E2E3EA"></div><div style="left:1082px;top:332px;width:5px;height:1px;background:#595C6C"></div><div style="left:1082px;top:333px;width:5px;height:1px;background:#E2E3EA"></div><div style="left:880px;top:239px;width:19px;height:19px;background:#AEB2C3"></div><div style="left:880px;top:239px;width:19px;height:1px;background:#E2E3EA"></div><div style="left:880px;top:239px;width:1px;height:19px;background:#E2E3EA"></div><div style="left:880px;top:257px;width:19px;height:1px;background:#595C6C"></div><div style="left:898px;top:239px;width:1px;height:19px;background:#595C6C"></div><div style="left:899px;top:239px;width:145px;height:19px;background:#AEB2C3"></div><div style="left:899px;top:239px;width:145px;height:1px;background:#E2E3EA"></div><div style="left:899px;top:239px;width:1px;height:19px;background:#E2E3EA"></div><div style="left:899px;top:257px;width:145px;height:1px;background:#595C6C"></div><div style="left:1043px;top:239px;width:1px;height:19px;background:#595C6C"></div><div style="left:1044px;top:239px;width:19px;height:19px;background:#AEB2C3"></div><div style="left:1044px;top:239px;width:19px;height:1px;background:#E2E3EA"></div><div style="left:1044px;top:239px;width:1px;height:19px;background:#E2E3EA"></div><div style="left:1044px;top:257px;width:19px;height:1px;background:#595C6C"></div><div style="left:1062px;top:239px;width:1px;height:19px;background:#595C6C"></div><div style="left:1063px;top:239px;width:19px;height:19px;background:#AEB2C3"></div><div style="left:1063px;top:239px;width:19px;height:1px;background:#E2E3EA"></div><div style="left:1063px;top:239px;width:1px;height:19px;background:#E2E3EA"></div><div style="left:1063px;top:257px;width:19px;height:1px;background:#595C6C"></div><div style="left:1081px;top:239px;width:1px;height:19px;background:#595C6C"></div><div style="left:884px;top:246px;width:11px;height:4px;border-top:1px solid #E2E3EA;border-left:1px solid #E2E3EA;border-right:1px solid #595C6C;border-bottom:1px solid #595C6C"></div><div style="left:1051px;top:246px;width:4px;height:4px;border-top:1px solid #E2E3EA;border-left:1px solid #E2E3EA;border-right:1px solid #595C6C;border-bottom:1px solid #595C6C"></div><div style="left:1067px;top:243px;width:11px;height:11px;border-top:1px solid #E2E3EA;border-left:1px solid #E2E3EA;border-right:1px solid #595C6C;border-bottom:1px solid #595C6C"></div><div class="s" style="left:899px;top:240px;width:145px;height:19px;text-align:center;color:#000;font-size:14px;line-height:19px;">Index</div><div style="left:880px;top:258px;width:202px;height:93px;background:#AEB2C3"></div><div class="hl" style="left:880px;top:258px;width:203px;height:2px;"></div><div class="hl" style="left:880px;top:258px;width:2px;height:57px;"></div><div class="hd" style="left:880px;top:313px;width:203px;height:2px;"></div><div class="hd" style="left:1081px;top:258px;width:2px;height:57px;"></div><div style="left:882px;top:260px;width:199px;height:1px;background-image:repeating-linear-gradient(90deg,#000 0 1px,transparent 1px 2px)"></div><div style="left:882px;top:260px;width:1px;height:18px;background-image:repeating-linear-gradient(180deg,#000 0 1px,transparent 1px 2px)"></div><div style="left:882px;top:277px;width:199px;height:1px;background-image:repeating-linear-gradient(90deg,#fff 0 1px,transparent 1px 2px)"></div><div style="left:1080px;top:260px;width:1px;height:18px;background-image:repeating-linear-gradient(180deg,#fff 0 1px,transparent 1px 2px)"></div><div style="left:882px;top:278px;width:139px;height:1px;background-image:repeating-linear-gradient(90deg,#000 0 1px,transparent 1px 2px)"></div><div style="left:882px;top:278px;width:1px;height:17px;background-image:repeating-linear-gradient(180deg,#000 0 1px,transparent 1px 2px)"></div><div style="left:882px;top:294px;width:139px;height:1px;background-image:repeating-linear-gradient(90deg,#fff 0 1px,transparent 1px 2px)"></div><div style="left:1020px;top:278px;width:1px;height:17px;background-image:repeating-linear-gradient(180deg,#fff 0 1px,transparent 1px 2px)"></div><div style="left:1021px;top:278px;width:60px;height:1px;background-image:repeating-linear-gradient(90deg,#000 0 1px,transparent 1px 2px)"></div><div style="left:1021px;top:278px;width:1px;height:17px;background-image:repeating-linear-gradient(180deg,#000 0 1px,transparent 1px 2px)"></div><div style="left:1021px;top:294px;width:60px;height:1px;background-image:repeating-linear-gradient(90deg,#fff 0 1px,transparent 1px 2px)"></div><div style="left:1080px;top:278px;width:1px;height:17px;background-image:repeating-linear-gradient(180deg,#fff 0 1px,transparent 1px 2px)"></div><div class="m" style="left:882px;top:264.0px;width:199px;text-align:center">OPS$ALANBUR.SYS_C002190</div><div class="m" style="left:882px;top:280.6px;width:139px;text-align:center">Table</div><div class="m" style="left:1021px;top:280.6px;width:60px;text-align:center">Column</div><div class="m" style="left:884px;top:298.6px;">OPS$ALANBUR.CUST</div><div class="m" style="left:1023px;top:298.6px;">CUST_ID</div><div style="left:948px;top:318px;width:67px;height:31px;border:2px solid #E8E8E6"></div><div class="hl" style="left:950px;top:320px;width:63px;height:2px;"></div><div class="hl" style="left:950px;top:320px;width:2px;height:27px;"></div><div class="hd" style="left:950px;top:345px;width:63px;height:2px;"></div><div class="hd" style="left:1011px;top:320px;width:2px;height:27px;"></div><div class="m" style="left:963.5px;top:328.1px;">Close</div><div style="left:68px;top:815px;width:964px;height:85px;background:#AEB2C3"></div><div style="left:68px;top:815px;width:964px;height:2px;background:#E2E3EA"></div><div style="left:68px;top:815px;width:2px;height:85px;background:#E2E3EA"></div><div style="left:1030px;top:815px;width:2px;height:85px;background:#595C6C"></div><div style="left:71px;top:898px;width:958px;height:2px;background:#595C6C"></div><div style="left:72px;top:819px;width:956px;height:1px;background:#E2E3EA"></div><div style="left:72px;top:819px;width:1px;height:78px;background:#E2E3EA"></div><div style="left:1027px;top:819px;width:1px;height:78px;background:#E2E3EA"></div><div style="left:72px;top:894px;width:956px;height:2px;background:#595C6C"></div><div style="left:73px;top:820px;width:20px;height:14px;background:#AEB2C3;border-top:1px solid #E2E3EA;border-left:1px solid #E2E3EA;border-right:1px solid #595C6C;border-bottom:1px solid #595C6C"></div><div style="left:77px;top:825px;width:11px;height:4px;border-top:1px solid #E2E3EA;border-left:1px solid #E2E3EA;border-right:1px solid #595C6C;border-bottom:1px solid #595C6C"></div><div style="left:73px;top:835px;width:20px;height:60px;background-image:repeating-linear-gradient(180deg,#595C6C 0 1px,#E2E3EA 1px 2px);background-color:#AEB2C3"></div><div style="left:93px;top:835px;width:295px;height:1px;background:#E2E3EA"></div><div style="left:93px;top:820px;width:295px;height:1px;background:#E2E3EA"></div><div style="left:148px;top:820px;width:1px;height:15px;background:#595C6C"></div><div style="left:149px;top:820px;width:1px;height:15px;background:#E2E3EA"></div><div style="left:206px;top:820px;width:1px;height:15px;background:#595C6C"></div><div style="left:207px;top:820px;width:1px;height:15px;background:#E2E3EA"></div><div style="left:264px;top:820px;width:1px;height:15px;background:#595C6C"></div><div style="left:265px;top:820px;width:1px;height:15px;background:#E2E3EA"></div><div style="left:322px;top:820px;width:1px;height:15px;background:#595C6C"></div><div style="left:323px;top:820px;width:1px;height:15px;background:#E2E3EA"></div><div style="left:380px;top:820px;width:1px;height:15px;background:#595C6C"></div><div style="left:381px;top:820px;width:1px;height:15px;background:#E2E3EA"></div><svg style="position:absolute;left:229px;top:823px" width="16" height="10"><path d="M1.5 8.5 L8 2 L14.5 8.5 Z" fill="#A4A7B6" stroke="none"/><path d="M1 8.5 L8 1.5" stroke="#6A6D7C" stroke-width="1"/><path d="M8 1.5 L15 8.5 H1" stroke="#F0F0F4" stroke-width="1" fill="none"/></svg><svg style="position:absolute;left:287px;top:823px" width="16" height="10"><path d="M1.5 8.5 L8 2 L14.5 8.5 Z" fill="#A4A7B6" stroke="none"/><path d="M1 8.5 L8 1.5" stroke="#6A6D7C" stroke-width="1"/><path d="M8 1.5 L15 8.5 H1" stroke="#F0F0F4" stroke-width="1" fill="none"/></svg><div style="left:714px;top:835px;width:294px;height:1px;background:#E2E3EA"></div><div style="left:714px;top:820px;width:294px;height:1px;background:#E2E3EA"></div><div style="left:721px;top:820px;width:1px;height:15px;background:#595C6C"></div><div style="left:722px;top:820px;width:1px;height:15px;background:#E2E3EA"></div><div style="left:779px;top:820px;width:1px;height:15px;background:#595C6C"></div><div style="left:780px;top:820px;width:1px;height:15px;background:#E2E3EA"></div><div style="left:835px;top:820px;width:1px;height:15px;background:#595C6C"></div><div style="left:836px;top:820px;width:1px;height:15px;background:#E2E3EA"></div><div style="left:891px;top:820px;width:1px;height:15px;background:#595C6C"></div><div style="left:892px;top:820px;width:1px;height:15px;background:#E2E3EA"></div><div style="left:949px;top:820px;width:1px;height:15px;background:#595C6C"></div><div style="left:950px;top:820px;width:1px;height:15px;background:#E2E3EA"></div><svg style="position:absolute;left:744px;top:823px" width="16" height="10"><path d="M1.5 8.5 L8 2 L14.5 8.5 Z" fill="#A4A7B6" stroke="none"/><path d="M1 8.5 L8 1.5" stroke="#6A6D7C" stroke-width="1"/><path d="M8 1.5 L15 8.5 H1" stroke="#F0F0F4" stroke-width="1" fill="none"/></svg><svg style="position:absolute;left:856px;top:823px" width="16" height="10"><path d="M1.5 8.5 L8 2 L14.5 8.5 Z" fill="#A4A7B6" stroke="none"/><path d="M1 8.5 L8 1.5" stroke="#6A6D7C" stroke-width="1"/><path d="M8 1.5 L15 8.5 H1" stroke="#F0F0F4" stroke-width="1" fill="none"/></svg><svg style="position:absolute;left:914px;top:823px" width="16" height="10"><path d="M1.5 8.5 L8 2 L14.5 8.5 Z" fill="#A4A7B6" stroke="none"/><path d="M1 8.5 L8 1.5" stroke="#6A6D7C" stroke-width="1"/><path d="M8 1.5 L15 8.5 H1" stroke="#F0F0F4" stroke-width="1" fill="none"/></svg><div style="left:388px;top:817px;width:1px;height:78px;background:#E2E3EA"></div><div style="left:713px;top:817px;width:1px;height:78px;background:#595C6C"></div><div style="left:1008px;top:820px;width:21px;height:14px;background:#AEB2C3;border-top:1px solid #E2E3EA;border-left:1px solid #E2E3EA;border-right:1px solid #595C6C;border-bottom:1px solid #595C6C"></div><div style="left:1016px;top:824px;width:5px;height:5px;border-top:1px solid #E2E3EA;border-left:1px solid #E2E3EA;border-right:1px solid #595C6C;border-bottom:1px solid #595C6C"></div><div style="left:1008px;top:835px;width:21px;height:60px;background-image:repeating-linear-gradient(180deg,#595C6C 0 1px,#E2E3EA 1px 2px);background-color:#AEB2C3"></div><div style="left:1012px;top:825px;width:8px;height:8px;"></div><svg style="position:absolute;left:101px;top:845px" width="41" height="41"><path d="M3.5 0.5 H37 L40.5 4 V37 L37 40.5 H3.5 L0.5 37 V4 Z" fill="#AEB2C3" stroke="#55586A" stroke-width="1"/><path d="M4 2 H36.5 L39 4.5 V36.5 L36.5 39 H4 L2 36.5 V4.5 Z" fill="none" stroke="#E8E8EE" stroke-width="0.8"/><path d="M11 5 H30 L36 11 V30 L30 36 H11 L5 30 V11 Z" fill="#9094A6"/><path d="M18 10 L21.5 20 L17.5 34" stroke="#D8D8DE" stroke-width="1.4" fill="none"/><g fill="#fff"><path d="M20 2.5 h1 v1 h1 v1 h-1 v1 h-1 v-1 h-1 v-1 h1 z"/><path d="M20 33.5 h1 v1 h1 v1 h-1 v1 h-1 v-1 h-1 v-1 h1 z"/><path d="M3 19 h1 v1 h1 v1 h-1 v1 h-1 v-1 h-1 v-1 h1 z"/><path d="M36 19 h1 v1 h1 v1 h-1 v1 h-1 v-1 h-1 v-1 h1 z"/><rect x="11" y="4" width="1" height="1"/><rect x="29" y="4" width="1" height="1"/><rect x="4" y="11" width="1" height="1"/><rect x="36" y="11" width="1" height="1"/><rect x="4" y="29" width="1" height="1"/><rect x="36" y="29" width="1" height="1"/><rect x="11" y="36" width="1" height="1"/><rect x="29" y="36" width="1" height="1"/></g></svg><svg style="position:absolute;left:159px;top:842px" width="37" height="45"><rect x="0.5" y="1.5" width="35" height="42" fill="#B4B4B4" stroke="#606060"/><rect x="1.5" y="2.5" width="33" height="40" fill="none" stroke="#E0E0E0"/><path d="M5 1 V9 M3 6 L5 9 L7 6 M30 1 V9 M28 6 L30 9 L32 6" stroke="#303030" fill="none"/><path d="M28 43 L35 36 V43 Z" fill="#F0F0F0" stroke="#505050" stroke-width="0.8"/></svg><div class="s" style="left:159px;top:851px;width:36px;text-align:center;font-size:13.5px;line-height:15.5px;color:#111">Feb<br>10</div><svg style="position:absolute;left:212px;top:840px" width="47" height="48" shape-rendering="crispEdges"><rect x="2" y="9" width="8" height="30" fill="#4A4A4A"/><path d="M11 14 L29 3 L35 14 Z" fill="#C8C8C8" stroke="#F4F4F4" stroke-width="0.8"/><path d="M21 8.5 L29 3.5" stroke="#3040E0" stroke-width="2.5"/><rect x="5" y="13.5" width="8" height="3" fill="#E02030"/><rect x="13" y="13.5" width="8" height="3" fill="#E020E0"/><rect x="21" y="13.5" width="8" height="3" fill="#20C020"/><rect x="29" y="13.5" width="8" height="3" fill="#20E0E0"/><rect x="41" y="22" width="4" height="24" fill="#6A6A6A"/><rect x="7" y="43" width="38" height="4" fill="#6A6A6A"/><rect x="3.5" y="16.5" width="38" height="27" fill="#A8A8A8" stroke="#505050"/><rect x="4" y="17" width="37" height="1" fill="#D8D8D8"/><rect x="14.5" y="20.5" width="16" height="10" fill="#F0F0F0" stroke="#404040" stroke-width="0.8"/><rect x="16" y="22" width="13" height="3.5" fill="#F0A020"/><rect x="16" y="22" width="13" height="1.5" fill="#E03020"/><rect x="16" y="25.5" width="13" height="3.5" fill="#181818"/></svg><svg style="position:absolute;left:268px;top:844px" width="48" height="41" shape-rendering="crispEdges"><rect x="6.5" y="0.5" width="33" height="26" rx="3" fill="#E6E6E6" stroke="#4A4A4A"/><rect x="8" y="24" width="30" height="2" fill="#8A8A8A"/><rect x="10.5" y="5.5" width="25" height="17" fill="#3E3E3E" stroke="#9A9A9A"/><rect x="14.0" y="8" width="1.5" height="1" fill="#E8E8E8"/><rect x="16.5" y="8" width="1.5" height="1" fill="#E8E8E8"/><rect x="19.0" y="8" width="1.5" height="1" fill="#E8E8E8"/><rect x="21.5" y="8" width="1.5" height="1" fill="#E8E8E8"/><rect x="24.0" y="8" width="1.5" height="1" fill="#E8E8E8"/><rect x="26.5" y="8" width="1.5" height="1" fill="#E8E8E8"/><rect x="14.0" y="10" width="1.5" height="1" fill="#E8E8E8"/><rect x="16.5" y="10" width="1.5" height="1" fill="#E8E8E8"/><rect x="19.0" y="10" width="1.5" height="1" fill="#E8E8E8"/><rect x="21.5" y="10" width="1.5" height="1" fill="#E8E8E8"/><rect x="24.0" y="10" width="1.5" height="1" fill="#E8E8E8"/><rect x="14.0" y="12" width="1.5" height="1" fill="#E8E8E8"/><rect x="16.5" y="12" width="1.5" height="1" fill="#E8E8E8"/><rect x="19.0" y="12" width="1.5" height="1" fill="#E8E8E8"/><rect x="21.5" y="12" width="1.5" height="1" fill="#E8E8E8"/><rect x="24.0" y="12" width="1.5" height="1" fill="#E8E8E8"/><rect x="26.5" y="12" width="1.5" height="1" fill="#E8E8E8"/><rect x="14.0" y="14" width="1.5" height="1" fill="#E8E8E8"/><rect x="16.5" y="14" width="1.5" height="1" fill="#E8E8E8"/><rect x="19.0" y="14" width="1.5" height="1" fill="#E8E8E8"/><rect x="21.5" y="14" width="1.5" height="1" fill="#E8E8E8"/><rect x="24.0" y="14" width="1.5" height="1" fill="#E8E8E8"/><rect x="14.0" y="16" width="1.5" height="1" fill="#E8E8E8"/><rect x="16.5" y="16" width="1.5" height="1" fill="#E8E8E8"/><rect x="19.0" y="16" width="1.5" height="1" fill="#E8E8E8"/><rect x="21.5" y="16" width="1.5" height="1" fill="#E8E8E8"/><rect x="24.0" y="16" width="1.5" height="1" fill="#E8E8E8"/><rect x="26.5" y="16" width="1.5" height="1" fill="#E8E8E8"/><rect x="14.5" y="26.5" width="18" height="4" fill="#5E5E5E" stroke="#3A3A3A" stroke-width="0.6"/><path d="M6 30.5 H41 L47 37 V40.5 H0.5 V37 Z" fill="#E2E2E2" stroke="#3A3A3A"/><rect x="1" y="38" width="46" height="2.5" fill="#2A2A2A"/><path d="M9 35 L11 32 M12 35 L14 32 M15 35 L17 32 M18 35 L20 32 M21 35 L23 32 M24 35 L26 32 M27 35 L29 32 M30 35 L32 32 M36 35 L38 32 M39 35 L41 32" stroke="#909090" stroke-width="1"/></svg><svg style="position:absolute;left:327px;top:852px" width="49" height="33" shape-rendering="crispEdges"><rect x="4.5" y="1.5" width="38" height="22" fill="#E8E8E8" stroke="#808080"/><rect x="5" y="0.5" width="36" height="1" fill="#909090"/><rect x="6" y="3" width="35" height="1" fill="#B0B0B0"/><rect x="7" y="7" width="3" height="1" fill="#505050"/><rect x="7" y="9" width="4" height="1" fill="#505050"/><rect x="31" y="7" width="6" height="4" fill="#D03040"/><rect x="37" y="7" width="3" height="4" fill="#30B040"/><path d="M0.5 13.5 L4 13.5 L8 19 H13 L15 23.5 H33 L36 19 H40 L44 13.5 H47.5 V31.5 H0.5 Z" fill="#A4A4A4" stroke="#4A4A4A"/><rect x="19" y="19" width="9" height="1" fill="#606060"/><rect x="19" y="21" width="8" height="1" fill="#606060"/><path d="M1 26 H47 M1 28 H47 M1 30 H47" stroke="#808080" stroke-width="1"/><rect x="1" y="14" width="2" height="17" fill="#D0D0D0"/></svg><svg style="position:absolute;left:396px;top:827px" width="18" height="21" shape-rendering="crispEdges"><rect x="1" y="8" width="1" height="12" fill="#5E6270"/><rect x="2" y="3" width="1" height="6" fill="#5E6270"/><rect x="3" y="1" width="7" height="1" fill="#5E6270"/><path d="M4 9 V4 L6 2 H12 L14 4 V9 H11 V5 H7 V9 Z" fill="#E8E8E8"/><rect x="6" y="5" width="1" height="4" fill="#000"/><rect x="7" y="4" width="5" height="1" fill="#000"/><rect x="13" y="3" width="1" height="6" fill="#000"/><rect x="12" y="2" width="1" height="1" fill="#000"/><rect x="8" y="6" width="3" height="3" fill="#9AA0B0"/><rect x="2" y="9" width="14" height="11" fill="#E8E8E8"/><rect x="3" y="10" width="12" height="8" fill="#9A9A9A"/><rect x="3" y="11" width="12" height="1" fill="#C8C8C8"/><rect x="3" y="13" width="12" height="1" fill="#C8C8C8"/><rect x="3" y="15" width="12" height="1" fill="#C8C8C8"/><rect x="3" y="17" width="12" height="2" fill="#000"/><rect x="14" y="10" width="1" height="8" fill="#404040"/></svg><div style="left:426px;top:827px;width:122px;height:27px;background:#6E89A2;border-top:1px solid #3A4A5A;border-left:1px solid #3A4A5A;border-right:1px solid #C8D2DC;border-bottom:1px solid #C8D2DC"></div><div style="left:427px;top:828px;width:120px;height:25px;border-top:2px solid #C4D0DC;border-left:2px solid #C4D0DC;border-right:2px solid #33404E;border-bottom:2px solid #33404E"></div><div class="s" style="left:434px;top:832px;font-size:15.5px;line-height:18px;color:#F6F6F6;letter-spacing:0.8px">North</div><div style="left:555px;top:827px;width:123px;height:27px;background:#6E89A2;border-top:2px solid #33404E;border-left:2px solid #33404E;border-right:2px solid #C0CCD8;border-bottom:2px solid #C0CCD8"></div><div class="s" style="left:563px;top:832px;font-size:15.5px;line-height:18px;color:#F6F6F6;letter-spacing:0.8px">South</div><div style="left:426px;top:861px;width:122px;height:27px;background:#6E89A2;border-top:1px solid #3A4A5A;border-left:1px solid #3A4A5A;border-right:1px solid #C8D2DC;border-bottom:1px solid #C8D2DC"></div><div style="left:427px;top:862px;width:120px;height:25px;border-top:2px solid #C4D0DC;border-left:2px solid #C4D0DC;border-right:2px solid #33404E;border-bottom:2px solid #33404E"></div><div class="s" style="left:434px;top:866px;font-size:15.5px;line-height:18px;color:#F6F6F6;letter-spacing:0.8px">East</div><div style="left:555px;top:861px;width:122px;height:27px;background:#6E89A2;border-top:1px solid #3A4A5A;border-left:1px solid #3A4A5A;border-right:1px solid #C8D2DC;border-bottom:1px solid #C8D2DC"></div><div style="left:556px;top:862px;width:120px;height:25px;border-top:2px solid #C4D0DC;border-left:2px solid #C4D0DC;border-right:2px solid #33404E;border-bottom:2px solid #33404E"></div><div class="s" style="left:563px;top:866px;font-size:15.5px;line-height:18px;color:#F6F6F6;letter-spacing:0.8px">West</div><div style="left:683px;top:832px;width:24px;height:6px;background:#8A8A8A;border:1px solid #505050"></div><div style="left:685px;top:834px;width:20px;height:2px;background-image:repeating-linear-gradient(90deg,#F0F020 0 1px,transparent 1px 2px)"></div><div style="left:685px;top:866px;width:24px;height:17px;background:#C8C8C8;border:1px solid #303030;border-right-color:#E0E0E0;border-bottom-color:#E0E0E0"></div><div class="s" style="left:677px;top:866px;width:40px;text-align:center;font-size:15px;line-height:17px;transform:scaleX(0.6);letter-spacing:-0.5px">EXIT</div><svg style="position:absolute;left:730px;top:854px" width="43" height="29" shape-rendering="crispEdges"><rect x="9.5" y="0.5" width="18" height="8" fill="#F6F6F6" stroke="#808080"/><path d="M12 3 H25 M12 5 H24" stroke="#909090" stroke-dasharray="2 1"/><path d="M4 5.5 H37 L40.5 9 V22.5 H0.5 V9 Z" fill="#DCDCDC" stroke="#404040"/><rect x="1" y="9" width="39" height="1" fill="#F4F4F4"/><path d="M3 14 H33" stroke="#A0A0A0" stroke-dasharray="3 1"/><rect x="30" y="12" width="8" height="3" fill="#707070"/><rect x="1" y="19" width="39" height="3" fill="#B8B8B8"/><rect x="4.5" y="18.5" width="28" height="8" fill="#5A5A5A" stroke="#202020"/><rect x="6" y="20" width="25" height="2" fill="#9A9A9A"/><rect x="6" y="26" width="28" height="2" fill="#808080"/></svg><svg style="position:absolute;left:783px;top:844px" width="49" height="41"><rect x="6.5" y="0.5" width="35" height="26" fill="#A8A8A8" stroke="#404040"/><rect x="7" y="1" width="34" height="1" fill="#E0E0E0"/><rect x="10.5" y="5.5" width="11" height="9" fill="#B8B8B8" stroke="#505050"/><path d="M13 10 H19" stroke="#404040"/><rect x="22.5" y="5.5" width="11" height="9" fill="#B8B8B8" stroke="#505050"/><path d="M0 9.5 H8 L9 12 V17" stroke="#404040" fill="none"/><rect x="1.5" y="17.5" width="14" height="21" rx="3" fill="#B0B0B0" stroke="#606060"/><path d="M5.5 18 V24 M9.5 18 V24" stroke="#707070"/><path d="M2 27 H15 M2 29 H15 M2 31 H15 M2 33 H15 M2 35 H15" stroke="#8A8A8A" stroke-width="0.8"/><ellipse cx="35" cy="11" rx="11" ry="7.5" fill="#D4D4D4" stroke="#505050"/><circle cx="31" cy="8" r="2.3" fill="#F0E020"/><circle cx="37" cy="6" r="1.8" fill="#F040F0"/><circle cx="27" cy="12.5" r="2" fill="#E02020"/><circle cx="32" cy="14" r="2.3" fill="#3040E0"/><rect x="37" y="13" width="4" height="3" fill="#30B040"/><text x="18" y="36" font-family="Liberation Serif" font-size="21" font-weight="bold" fill="#fff" stroke="#000" stroke-width="0.9">T</text><text x="29" y="38" font-family="Liberation Serif" font-size="14" font-weight="bold" fill="#fff" stroke="#000" stroke-width="0.7">T</text><text x="37" y="39" font-family="Liberation Serif" font-size="9" font-weight="bold" fill="#fff" stroke="#000" stroke-width="0.5">T</text></svg><svg style="position:absolute;left:841px;top:843px" width="45" height="44" shape-rendering="crispEdges"><rect x="1" y="7" width="4" height="28" fill="#4E4E4E"/><rect x="7.5" y="0.5" width="5" height="13" fill="#F0F0F0" stroke="#707070"/><path d="M8 3 H10 M8 5 H11 M8 7 H10 M8 9 H11 M8 11 H10" stroke="#707070"/><rect x="17.5" y="0.5" width="11" height="13" fill="#B0B0B0" stroke="#404040"/><rect x="19" y="2" width="8" height="3" fill="#404040"/><path d="M19 7 h2 M23 7 h2 M19 9 h2 M23 9 h2 M19 11 h2 M23 11 h2" stroke="#505050"/><path d="M29 13 L40 2" stroke="#404040" stroke-width="3.5"/><path d="M29 13 L40 2" stroke="#F0E030" stroke-width="2"/><path d="M38.5 3.5 L40.5 1.5" stroke="#E040E0" stroke-width="2.5"/><rect x="40" y="18" width="4" height="25" fill="#6A6A6A"/><rect x="6" y="40" width="38" height="4" fill="#6A6A6A"/><rect x="2.5" y="12.5" width="37" height="28" fill="#A8A8A8" stroke="#404040"/><rect x="3" y="13" width="36" height="1" fill="#D8D8D8"/><rect x="13.5" y="17.5" width="16" height="10" fill="#F0F0F0" stroke="#303030" stroke-width="0.8"/><rect x="15" y="19" width="13" height="3.5" fill="#20D0A0"/><rect x="15" y="19" width="13" height="1.5" fill="#30E0E0"/><rect x="15" y="22.5" width="13" height="3.5" fill="#181818"/></svg><svg style="position:absolute;left:901px;top:850px" width="40" height="35"><rect x="0.5" y="4.5" width="6" height="29" fill="#C8C8C8" stroke="#505050"/><rect x="6.5" y="0.5" width="7" height="33" fill="#505050" stroke="#303030"/><path d="M8 2 V32 M12 2 V32" stroke="#20D0D0" stroke-width="1.5" stroke-dasharray="1 1"/><rect x="13.5" y="2.5" width="9" height="31" fill="#707070" stroke="#303030"/><rect x="22.5" y="4.5" width="6" height="29" fill="#4A4A70" stroke="#303030"/><path d="M25.5 6 V32" stroke="#6060F0" stroke-width="1.5" stroke-dasharray="1 1"/><rect x="29.5" y="3.5" width="8" height="30" fill="#8A8A8A" stroke="#404040"/><text x="11" y="24.5" font-family="Liberation Sans" font-size="23" font-weight="bold" fill="#fff" stroke="#303030" stroke-width="0.5">?</text></svg><svg style="position:absolute;left:967px;top:849px" width="25" height="36"><path d="M1.5 3 L4 0.5 H21 L23.5 3 V5.5 H1.5 Z" fill="#D0D0D0" stroke="#505050"/><rect x="1.5" y="5.5" width="22" height="28" fill="#A8A8A8" stroke="#404040"/><rect x="2" y="6" width="2" height="27" fill="#D8D8D8"/><rect x="8" y="29" width="9" height="4" fill="#303030"/><rect x="10" y="30" width="5" height="2" fill="#C0C0C0"/></svg></body></html>
